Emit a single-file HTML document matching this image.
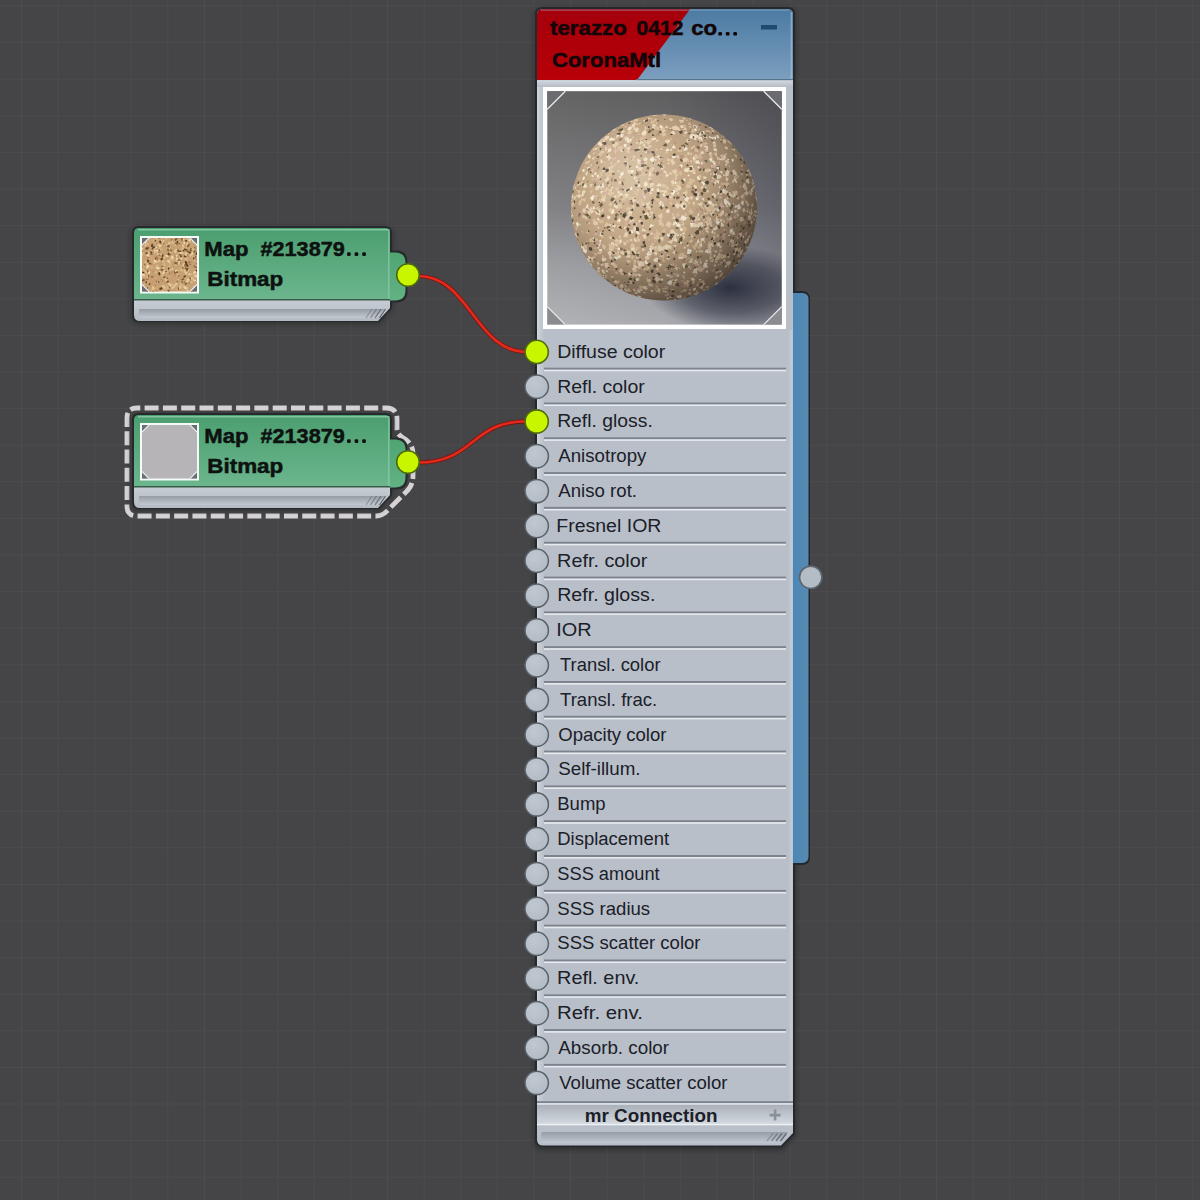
<!DOCTYPE html>
<html><head><meta charset="utf-8"><style>
html,body{margin:0;padding:0;background:#454446;width:1200px;height:1200px;overflow:hidden}
svg{display:block}
text{font-family:"Liberation Sans",sans-serif}
.lbl{font-size:19px;fill:#1b2029}
.hdr{font-size:21px;font-weight:bold;fill:#0d1210;stroke:#0d1210;stroke-width:0.5}
.ttl{font-size:21px;font-weight:bold;fill:#120608;stroke:#120608;stroke-width:0.5}
.mr{font-size:18px;font-weight:bold;fill:#1b2029}
</style></head><body>
<svg width="1200" height="1200" viewBox="0 0 1200 1200">
<defs>
<linearGradient id="blueg" x1="0" y1="0" x2="0" y2="1"><stop offset="0" stop-color="#4b7aa2"/><stop offset="1" stop-color="#7d9fbf"/></linearGradient>
<linearGradient id="redg" x1="0" y1="0" x2="0" y2="1"><stop offset="0" stop-color="#a4000c"/><stop offset="1" stop-color="#b80008"/></linearGradient>
<linearGradient id="greeng" x1="0" y1="0" x2="0" y2="1"><stop offset="0" stop-color="#4b9e70"/><stop offset="1" stop-color="#6cb68d"/></linearGradient>
<linearGradient id="bumpg" x1="0" y1="0" x2="0" y2="1"><stop offset="0" stop-color="#50a472"/><stop offset="1" stop-color="#62b284"/></linearGradient>
<linearGradient id="grayband" x1="0" y1="0" x2="0" y2="1"><stop offset="0" stop-color="#c9d0d8"/><stop offset="1" stop-color="#b4bbc3"/></linearGradient>
<linearGradient id="inset" x1="0" y1="0" x2="0" y2="1"><stop offset="0" stop-color="#959ca4"/><stop offset="1" stop-color="#c3c9d0"/></linearGradient>
<linearGradient id="bandg" x1="0" y1="0" x2="0" y2="1"><stop offset="0" stop-color="#d2d8df"/><stop offset="1" stop-color="#b6bcc4"/></linearGradient>
<linearGradient id="leftstrip" x1="0" y1="0" x2="1" y2="0"><stop offset="0" stop-color="#d2d7de"/><stop offset="0.4" stop-color="#c6ccd4"/><stop offset="1" stop-color="#bcc3cb"/></linearGradient>
<linearGradient id="mrg" x1="0" y1="0" x2="0" y2="1"><stop offset="0" stop-color="#a9b0b8"/><stop offset="1" stop-color="#d3d9e0"/></linearGradient>
<linearGradient id="bbar" x1="0" y1="0" x2="1" y2="0"><stop offset="0" stop-color="#4a88b8"/><stop offset="1" stop-color="#5a88b0"/></linearGradient>
<radialGradient id="portg" cx="0.4" cy="0.35" r="0.7"><stop offset="0" stop-color="#bfc7d0"/><stop offset="1" stop-color="#b2bac4"/></radialGradient>
<linearGradient id="prevbg" x1="0" y1="0" x2="0" y2="1"><stop offset="0" stop-color="#646464"/><stop offset="0.5" stop-color="#828286"/><stop offset="0.75" stop-color="#9e9fa3"/><stop offset="1" stop-color="#b2b3b7"/></linearGradient>
<radialGradient id="sph" cx="0.4" cy="0.42" r="0.62" fx="0.36" fy="0.38"><stop offset="0" stop-color="#d0b898"/><stop offset="0.5" stop-color="#c2a684"/><stop offset="0.85" stop-color="#a08a70"/><stop offset="1" stop-color="#807060"/></radialGradient>
<linearGradient id="prevside" x1="0" y1="0" x2="1" y2="0"><stop offset="0" stop-color="#000018" stop-opacity="0"/><stop offset="0.5" stop-color="#000018" stop-opacity="0.05"/><stop offset="1" stop-color="#000018" stop-opacity="0.24"/></linearGradient>
<radialGradient id="shadow" cx="0.5" cy="0.5" r="0.5"><stop offset="0" stop-color="#1c2030" stop-opacity="0.85"/><stop offset="0.6" stop-color="#1c2030" stop-opacity="0.45"/><stop offset="1" stop-color="#1c2030" stop-opacity="0"/></radialGradient>
<radialGradient id="sphshade" cx="0.32" cy="0.3" r="0.95" fx="0.3" fy="0.28"><stop offset="0" stop-color="#fff6e8" stop-opacity="0.22"/><stop offset="0.3" stop-color="#fff6e8" stop-opacity="0"/><stop offset="0.55" stop-color="#2a2018" stop-opacity="0.12"/><stop offset="0.8" stop-color="#2a2018" stop-opacity="0.5"/><stop offset="1" stop-color="#1e1a16" stop-opacity="0.72"/></radialGradient>
<filter id="shd" x="-10%" y="-10%" width="120%" height="120%"><feGaussianBlur stdDeviation="2"/></filter>
<filter id="soft" x="-5%" y="-5%" width="110%" height="110%"><feGaussianBlur stdDeviation="0.45"/></filter>
<clipPath id="prevclip"><rect x="547.3" y="91.2" width="234.4" height="233.4"/></clipPath>
<clipPath id="thclip"><rect x="142" y="238" width="55" height="53.5"/></clipPath>
<clipPath id="sphclip"><circle cx="664" cy="207.5" r="93"/></clipPath>
</defs>
<rect width="1200" height="1200" fill="#454446"/>
<g fill="#4d4c4e"><rect x="21.0" y="0" width="1" height="1200"/><rect x="57.6" y="0" width="1" height="1200"/><rect x="94.2" y="0" width="1" height="1200"/><rect x="130.8" y="0" width="1" height="1200"/><rect x="167.4" y="0" width="1" height="1200"/><rect x="204.0" y="0" width="1" height="1200"/><rect x="240.6" y="0" width="1" height="1200"/><rect x="277.2" y="0" width="1" height="1200"/><rect x="313.8" y="0" width="1" height="1200"/><rect x="350.4" y="0" width="1" height="1200"/><rect x="387.0" y="0" width="1" height="1200"/><rect x="423.6" y="0" width="1" height="1200"/><rect x="460.2" y="0" width="1" height="1200"/><rect x="496.8" y="0" width="1" height="1200"/><rect x="533.4" y="0" width="1" height="1200"/><rect x="570.0" y="0" width="1" height="1200"/><rect x="606.6" y="0" width="1" height="1200"/><rect x="643.2" y="0" width="1" height="1200"/><rect x="679.8" y="0" width="1" height="1200"/><rect x="716.4" y="0" width="1" height="1200"/><rect x="753.0" y="0" width="1" height="1200"/><rect x="789.6" y="0" width="1" height="1200"/><rect x="826.2" y="0" width="1" height="1200"/><rect x="862.8" y="0" width="1" height="1200"/><rect x="899.4" y="0" width="1" height="1200"/><rect x="936.0" y="0" width="1" height="1200"/><rect x="972.6" y="0" width="1" height="1200"/><rect x="1009.2" y="0" width="1" height="1200"/><rect x="1045.8" y="0" width="1" height="1200"/><rect x="1082.4" y="0" width="1" height="1200"/><rect x="1119.0" y="0" width="1" height="1200"/><rect x="1155.6" y="0" width="1" height="1200"/><rect x="1192.2" y="0" width="1" height="1200"/><rect x="0" y="5.5" width="1200" height="1"/><rect x="0" y="42.1" width="1200" height="1"/><rect x="0" y="78.7" width="1200" height="1"/><rect x="0" y="115.3" width="1200" height="1"/><rect x="0" y="151.9" width="1200" height="1"/><rect x="0" y="188.5" width="1200" height="1"/><rect x="0" y="225.1" width="1200" height="1"/><rect x="0" y="261.7" width="1200" height="1"/><rect x="0" y="298.3" width="1200" height="1"/><rect x="0" y="334.9" width="1200" height="1"/><rect x="0" y="371.5" width="1200" height="1"/><rect x="0" y="408.1" width="1200" height="1"/><rect x="0" y="444.7" width="1200" height="1"/><rect x="0" y="481.3" width="1200" height="1"/><rect x="0" y="517.9" width="1200" height="1"/><rect x="0" y="554.5" width="1200" height="1"/><rect x="0" y="591.1" width="1200" height="1"/><rect x="0" y="627.7" width="1200" height="1"/><rect x="0" y="664.3" width="1200" height="1"/><rect x="0" y="700.9" width="1200" height="1"/><rect x="0" y="737.5" width="1200" height="1"/><rect x="0" y="774.1" width="1200" height="1"/><rect x="0" y="810.7" width="1200" height="1"/><rect x="0" y="847.3" width="1200" height="1"/><rect x="0" y="883.9" width="1200" height="1"/><rect x="0" y="920.5" width="1200" height="1"/><rect x="0" y="957.1" width="1200" height="1"/><rect x="0" y="993.7" width="1200" height="1"/><rect x="0" y="1030.3" width="1200" height="1"/><rect x="0" y="1066.9" width="1200" height="1"/><rect x="0" y="1103.5" width="1200" height="1"/><rect x="0" y="1140.1" width="1200" height="1"/><rect x="0" y="1176.7" width="1200" height="1"/></g>

<path d="M418,276 C470,276 475,352 527,352" fill="none" stroke="#7a1410" stroke-width="4.2"/>
<path d="M418,276 C470,276 475,352 527,352" fill="none" stroke="#e02a1c" stroke-width="2.6"/>
<path d="M418,462.5 C475,462.5 470,421.3 527,421.3" fill="none" stroke="#7a1410" stroke-width="4.2"/>
<path d="M418,462.5 C475,462.5 470,421.3 527,421.3" fill="none" stroke="#e02a1c" stroke-width="2.6"/>

<path d="M139,227 H386 Q393,227 393,234 V308 L380,324 H139 Q131,324 131,316 V234 Q131,227 139,227 Z" fill="#1e2024" opacity="0.5" filter="url(#shd)"/>
<path d="M139,226 H385 Q392,226 392,233 V250.5 H396 Q407.5,250.5 407.5,262 V291 Q407.5,302.5 396,302.5 H392 V308 L379,322 H139 Q132,322 132,315 V233 Q132,226 139,226 Z" fill="#262a2c"/>
<path d="M388,252.5 H395 Q405.5,252.5 405.5,263 V290 Q405.5,300.5 395,300.5 H388 Z" fill="url(#bumpg)"/>
<path d="M134,296 H390 V308 L378,321 H140 Q134,321 134,315 Z" fill="url(#grayband)"/>
<path d="M139,309 H385 L376,318 H142 Q139,318 139,315 Z" fill="url(#inset)"/>
<path d="M139,228 H385 Q390,228 390,233 V300 H134 V233 Q134,228 139,228 Z" fill="url(#greeng)"/>
<rect x="134" y="299" width="256" height="1.5" fill="#3a5a48"/>
<rect x="138" y="229" width="250" height="1.5" fill="#8fd0aa" opacity="0.8"/>
<line x1="366.0" y1="318" x2="372.0" y2="309" stroke="#5e666e" stroke-width="1.3" opacity="0.45"/>
<line x1="370.5" y1="318" x2="376.5" y2="309" stroke="#5e666e" stroke-width="1.3" opacity="0.63"/>
<line x1="375.0" y1="318" x2="381.0" y2="309" stroke="#5e666e" stroke-width="1.3" opacity="0.81"/>
<line x1="379.5" y1="318" x2="385.5" y2="309" stroke="#5e666e" stroke-width="1.3" opacity="0.99"/>
<rect x="388" y="229" width="1.6" height="70" fill="#8acba6" opacity="0.7"/>
<rect x="140" y="236" width="59" height="57.5" fill="#f4fbf6"/>
<rect x="142" y="238" width="55" height="53.5" fill="#c6a072"/>
<g transform="translate(0,0)"><g clip-path="url(#thclip)"><g filter="url(#soft)"><ellipse cx="159.5" cy="245.4" rx="2.0" ry="1.2" fill="#e2c49a" transform="rotate(24 159.5 245.4)"/><ellipse cx="161.8" cy="240.2" rx="1.0" ry="0.6" fill="#e2c49a" transform="rotate(107 161.8 240.2)"/><ellipse cx="145.0" cy="242.0" rx="2.1" ry="1.3" fill="#e2c49a" transform="rotate(161 145.0 242.0)"/><ellipse cx="176.8" cy="289.6" rx="1.0" ry="0.6" fill="#d0a878" transform="rotate(56 176.8 289.6)"/><ellipse cx="143.7" cy="284.6" rx="1.6" ry="1.0" fill="#d8b486" transform="rotate(146 143.7 284.6)"/><ellipse cx="158.6" cy="282.3" rx="1.2" ry="0.7" fill="#7a5a36" transform="rotate(140 158.6 282.3)"/><ellipse cx="181.6" cy="268.3" rx="1.8" ry="1.1" fill="#d0a878" transform="rotate(109 181.6 268.3)"/><ellipse cx="185.3" cy="262.8" rx="0.9" ry="0.6" fill="#a87a58" transform="rotate(46 185.3 262.8)"/><ellipse cx="180.8" cy="250.5" rx="2.0" ry="1.3" fill="#d0a878" transform="rotate(114 180.8 250.5)"/><ellipse cx="157.4" cy="291.4" rx="1.0" ry="0.6" fill="#8a6840" transform="rotate(87 157.4 291.4)"/><ellipse cx="149.7" cy="264.1" rx="1.7" ry="1.0" fill="#6a4a2a" transform="rotate(146 149.7 264.1)"/><ellipse cx="186.0" cy="282.4" rx="1.7" ry="1.0" fill="#ecd4ac" transform="rotate(148 186.0 282.4)"/><ellipse cx="186.4" cy="240.8" rx="1.3" ry="0.8" fill="#5a3e24" transform="rotate(170 186.4 240.8)"/><ellipse cx="144.7" cy="277.6" rx="1.3" ry="0.8" fill="#d0a878" transform="rotate(98 144.7 277.6)"/><ellipse cx="191.6" cy="256.3" rx="0.8" ry="0.5" fill="#a87a58" transform="rotate(29 191.6 256.3)"/><ellipse cx="169.1" cy="249.1" rx="1.4" ry="0.9" fill="#d8b486" transform="rotate(127 169.1 249.1)"/><ellipse cx="145.6" cy="261.9" rx="2.0" ry="1.2" fill="#d8b486" transform="rotate(140 145.6 261.9)"/><ellipse cx="156.9" cy="260.0" rx="2.2" ry="1.3" fill="#d0a878" transform="rotate(38 156.9 260.0)"/><ellipse cx="145.7" cy="245.4" rx="1.5" ry="0.9" fill="#e2c49a" transform="rotate(150 145.7 245.4)"/><ellipse cx="151.4" cy="252.6" rx="1.5" ry="0.9" fill="#5a3e24" transform="rotate(81 151.4 252.6)"/><ellipse cx="195.3" cy="275.3" rx="1.5" ry="0.9" fill="#e2c49a" transform="rotate(174 195.3 275.3)"/><ellipse cx="186.5" cy="258.8" rx="1.5" ry="0.9" fill="#e2c49a" transform="rotate(102 186.5 258.8)"/><ellipse cx="144.5" cy="240.7" rx="0.9" ry="0.6" fill="#7a5a36" transform="rotate(153 144.5 240.7)"/><ellipse cx="144.0" cy="237.0" rx="1.9" ry="1.2" fill="#6a4a2a" transform="rotate(157 144.0 237.0)"/><ellipse cx="142.5" cy="285.5" rx="1.7" ry="1.1" fill="#d8b486" transform="rotate(88 142.5 285.5)"/><ellipse cx="175.3" cy="263.3" rx="1.9" ry="1.2" fill="#8a6840" transform="rotate(119 175.3 263.3)"/><ellipse cx="168.4" cy="254.3" rx="1.6" ry="1.0" fill="#5a3e24" transform="rotate(122 168.4 254.3)"/><ellipse cx="188.2" cy="246.0" rx="1.0" ry="0.6" fill="#5a3e24" transform="rotate(139 188.2 246.0)"/><ellipse cx="193.1" cy="279.1" rx="1.8" ry="1.1" fill="#e2c49a" transform="rotate(66 193.1 279.1)"/><ellipse cx="170.5" cy="287.4" rx="1.6" ry="1.0" fill="#d8b486" transform="rotate(128 170.5 287.4)"/><ellipse cx="159.8" cy="249.4" rx="2.0" ry="1.2" fill="#d8b486" transform="rotate(102 159.8 249.4)"/><ellipse cx="183.2" cy="249.6" rx="1.9" ry="1.1" fill="#ecd4ac" transform="rotate(7 183.2 249.6)"/><ellipse cx="186.0" cy="263.2" rx="1.3" ry="0.8" fill="#5a3e24" transform="rotate(89 186.0 263.2)"/><ellipse cx="195.4" cy="257.2" rx="1.3" ry="0.8" fill="#7a5a36" transform="rotate(86 195.4 257.2)"/><ellipse cx="152.6" cy="271.6" rx="1.1" ry="0.7" fill="#c08868" transform="rotate(167 152.6 271.6)"/><ellipse cx="160.6" cy="272.7" rx="2.1" ry="1.3" fill="#e2c49a" transform="rotate(51 160.6 272.7)"/><ellipse cx="168.2" cy="246.9" rx="1.0" ry="0.6" fill="#ecd4ac" transform="rotate(101 168.2 246.9)"/><ellipse cx="167.4" cy="278.3" rx="1.0" ry="0.6" fill="#7a5a36" transform="rotate(32 167.4 278.3)"/><ellipse cx="142.6" cy="269.8" rx="1.7" ry="1.0" fill="#d8b486" transform="rotate(152 142.6 269.8)"/><ellipse cx="196.9" cy="273.5" rx="0.9" ry="0.6" fill="#d8b486" transform="rotate(166 196.9 273.5)"/><ellipse cx="146.9" cy="278.6" rx="1.7" ry="1.1" fill="#7a5a36" transform="rotate(54 146.9 278.6)"/><ellipse cx="142.6" cy="248.8" rx="1.2" ry="0.8" fill="#ecd4ac" transform="rotate(107 142.6 248.8)"/><ellipse cx="188.5" cy="240.4" rx="1.8" ry="1.1" fill="#d0a878" transform="rotate(132 188.5 240.4)"/><ellipse cx="165.0" cy="287.9" rx="1.6" ry="1.0" fill="#d8b486" transform="rotate(4 165.0 287.9)"/><ellipse cx="190.7" cy="280.1" rx="1.1" ry="0.7" fill="#d8b486" transform="rotate(121 190.7 280.1)"/><ellipse cx="176.3" cy="243.7" rx="1.7" ry="1.0" fill="#8a6840" transform="rotate(27 176.3 243.7)"/><ellipse cx="191.3" cy="240.2" rx="1.7" ry="1.0" fill="#6a4a2a" transform="rotate(129 191.3 240.2)"/><ellipse cx="166.8" cy="238.5" rx="1.5" ry="0.9" fill="#e2c49a" transform="rotate(156 166.8 238.5)"/><ellipse cx="196.5" cy="270.6" rx="1.3" ry="0.8" fill="#5a3e24" transform="rotate(136 196.5 270.6)"/><ellipse cx="187.0" cy="265.2" rx="1.9" ry="1.1" fill="#5a3e24" transform="rotate(51 187.0 265.2)"/><ellipse cx="188.9" cy="244.6" rx="1.1" ry="0.7" fill="#8a6840" transform="rotate(171 188.9 244.6)"/><ellipse cx="154.7" cy="241.1" rx="2.1" ry="1.3" fill="#e2c49a" transform="rotate(39 154.7 241.1)"/><ellipse cx="194.6" cy="272.7" rx="2.1" ry="1.3" fill="#ecd4ac" transform="rotate(119 194.6 272.7)"/><ellipse cx="153.5" cy="289.9" rx="1.1" ry="0.7" fill="#d0a878" transform="rotate(170 153.5 289.9)"/><ellipse cx="188.4" cy="246.0" rx="1.4" ry="0.8" fill="#d0a878" transform="rotate(50 188.4 246.0)"/><ellipse cx="161.3" cy="242.1" rx="1.6" ry="1.0" fill="#ecd4ac" transform="rotate(112 161.3 242.1)"/><ellipse cx="181.1" cy="258.3" rx="1.6" ry="1.0" fill="#ecd4ac" transform="rotate(16 181.1 258.3)"/><ellipse cx="147.4" cy="288.0" rx="0.9" ry="0.5" fill="#6a4a2a" transform="rotate(69 147.4 288.0)"/><ellipse cx="143.3" cy="280.2" rx="1.7" ry="1.1" fill="#7a5a36" transform="rotate(173 143.3 280.2)"/><ellipse cx="187.7" cy="251.4" rx="1.6" ry="1.0" fill="#8a6840" transform="rotate(22 187.7 251.4)"/><ellipse cx="156.9" cy="281.4" rx="1.1" ry="0.7" fill="#6a4a2a" transform="rotate(4 156.9 281.4)"/><ellipse cx="177.2" cy="281.5" rx="0.9" ry="0.5" fill="#7a5a36" transform="rotate(31 177.2 281.5)"/><ellipse cx="166.9" cy="255.8" rx="1.7" ry="1.1" fill="#ecd4ac" transform="rotate(11 166.9 255.8)"/><ellipse cx="171.0" cy="250.2" rx="1.1" ry="0.7" fill="#7a5a36" transform="rotate(46 171.0 250.2)"/><ellipse cx="152.5" cy="254.3" rx="1.3" ry="0.8" fill="#d8b486" transform="rotate(128 152.5 254.3)"/><ellipse cx="179.3" cy="252.0" rx="1.0" ry="0.6" fill="#ecd4ac" transform="rotate(4 179.3 252.0)"/><ellipse cx="182.8" cy="267.6" rx="1.1" ry="0.7" fill="#8a6840" transform="rotate(114 182.8 267.6)"/><ellipse cx="147.1" cy="282.5" rx="1.6" ry="1.0" fill="#d0a878" transform="rotate(100 147.1 282.5)"/><ellipse cx="196.3" cy="254.1" rx="1.2" ry="0.7" fill="#7a5a36" transform="rotate(162 196.3 254.1)"/><ellipse cx="149.0" cy="291.9" rx="0.7" ry="0.4" fill="#c08868" transform="rotate(160 149.0 291.9)"/><ellipse cx="183.2" cy="251.2" rx="1.6" ry="1.0" fill="#6a4a2a" transform="rotate(97 183.2 251.2)"/><ellipse cx="190.6" cy="274.2" rx="1.8" ry="1.1" fill="#d8b486" transform="rotate(11 190.6 274.2)"/><ellipse cx="167.2" cy="245.7" rx="1.4" ry="0.9" fill="#ecd4ac" transform="rotate(84 167.2 245.7)"/><ellipse cx="196.4" cy="267.4" rx="1.0" ry="0.6" fill="#5a3e24" transform="rotate(46 196.4 267.4)"/><ellipse cx="141.1" cy="258.2" rx="1.2" ry="0.8" fill="#d8b486" transform="rotate(1 141.1 258.2)"/><ellipse cx="146.2" cy="282.3" rx="1.2" ry="0.8" fill="#6a4a2a" transform="rotate(76 146.2 282.3)"/><ellipse cx="158.3" cy="249.9" rx="1.8" ry="1.1" fill="#d8b486" transform="rotate(152 158.3 249.9)"/><ellipse cx="163.2" cy="255.1" rx="0.9" ry="0.6" fill="#c08868" transform="rotate(158 163.2 255.1)"/><ellipse cx="177.7" cy="239.4" rx="1.9" ry="1.1" fill="#d0a878" transform="rotate(129 177.7 239.4)"/><ellipse cx="148.9" cy="266.1" rx="2.0" ry="1.2" fill="#e2c49a" transform="rotate(149 148.9 266.1)"/><ellipse cx="186.5" cy="276.5" rx="0.7" ry="0.4" fill="#c08868" transform="rotate(10 186.5 276.5)"/><ellipse cx="148.6" cy="257.0" rx="1.4" ry="0.9" fill="#8a6840" transform="rotate(160 148.6 257.0)"/><ellipse cx="142.1" cy="266.5" rx="0.8" ry="0.5" fill="#5a3e24" transform="rotate(17 142.1 266.5)"/><ellipse cx="183.7" cy="264.9" rx="1.9" ry="1.2" fill="#e2c49a" transform="rotate(121 183.7 264.9)"/><ellipse cx="155.4" cy="241.1" rx="1.0" ry="0.6" fill="#7a5a36" transform="rotate(166 155.4 241.1)"/><ellipse cx="196.6" cy="264.4" rx="2.1" ry="1.3" fill="#d0a878" transform="rotate(73 196.6 264.4)"/><ellipse cx="184.7" cy="271.2" rx="1.7" ry="1.0" fill="#e2c49a" transform="rotate(84 184.7 271.2)"/><ellipse cx="155.5" cy="278.2" rx="0.9" ry="0.6" fill="#d8b486" transform="rotate(15 155.5 278.2)"/><ellipse cx="168.7" cy="291.0" rx="1.6" ry="1.0" fill="#7a5a36" transform="rotate(74 168.7 291.0)"/><ellipse cx="181.4" cy="252.8" rx="2.2" ry="1.4" fill="#e2c49a" transform="rotate(140 181.4 252.8)"/><ellipse cx="152.4" cy="291.3" rx="0.9" ry="0.6" fill="#c08868" transform="rotate(19 152.4 291.3)"/><ellipse cx="187.7" cy="290.7" rx="1.4" ry="0.9" fill="#ecd4ac" transform="rotate(53 187.7 290.7)"/><ellipse cx="145.3" cy="242.0" rx="2.1" ry="1.3" fill="#ecd4ac" transform="rotate(33 145.3 242.0)"/><ellipse cx="175.4" cy="272.1" rx="1.6" ry="1.0" fill="#6a4a2a" transform="rotate(59 175.4 272.1)"/><ellipse cx="169.4" cy="285.6" rx="0.9" ry="0.6" fill="#d8b486" transform="rotate(125 169.4 285.6)"/><ellipse cx="179.9" cy="259.5" rx="1.4" ry="0.8" fill="#d0a878" transform="rotate(80 179.9 259.5)"/><ellipse cx="147.9" cy="255.4" rx="2.0" ry="1.2" fill="#ecd4ac" transform="rotate(30 147.9 255.4)"/><ellipse cx="194.6" cy="247.9" rx="1.1" ry="0.7" fill="#5a3e24" transform="rotate(16 194.6 247.9)"/><ellipse cx="163.4" cy="292.4" rx="2.1" ry="1.3" fill="#ecd4ac" transform="rotate(70 163.4 292.4)"/><ellipse cx="189.7" cy="252.6" rx="1.5" ry="0.9" fill="#5a3e24" transform="rotate(38 189.7 252.6)"/><ellipse cx="155.2" cy="251.7" rx="1.9" ry="1.2" fill="#d8b486" transform="rotate(109 155.2 251.7)"/><ellipse cx="191.4" cy="282.1" rx="1.8" ry="1.1" fill="#d8b486" transform="rotate(12 191.4 282.1)"/><ellipse cx="194.2" cy="259.8" rx="1.7" ry="1.1" fill="#d8b486" transform="rotate(73 194.2 259.8)"/><ellipse cx="168.7" cy="287.6" rx="1.5" ry="0.9" fill="#d8b486" transform="rotate(87 168.7 287.6)"/><ellipse cx="157.1" cy="251.2" rx="1.4" ry="0.9" fill="#ecd4ac" transform="rotate(61 157.1 251.2)"/><ellipse cx="158.1" cy="267.9" rx="1.7" ry="1.1" fill="#d8b486" transform="rotate(19 158.1 267.9)"/><ellipse cx="152.8" cy="287.3" rx="1.5" ry="0.9" fill="#d8b486" transform="rotate(85 152.8 287.3)"/><ellipse cx="197.8" cy="262.0" rx="1.1" ry="0.7" fill="#7a5a36" transform="rotate(44 197.8 262.0)"/><ellipse cx="160.5" cy="242.1" rx="1.7" ry="1.1" fill="#5a3e24" transform="rotate(51 160.5 242.1)"/><ellipse cx="191.6" cy="278.6" rx="1.9" ry="1.2" fill="#d0a878" transform="rotate(53 191.6 278.6)"/><ellipse cx="162.5" cy="255.8" rx="1.5" ry="0.9" fill="#5a3e24" transform="rotate(92 162.5 255.8)"/><ellipse cx="148.2" cy="264.9" rx="1.0" ry="0.6" fill="#d8b486" transform="rotate(63 148.2 264.9)"/><ellipse cx="162.9" cy="272.8" rx="2.0" ry="1.2" fill="#ecd4ac" transform="rotate(5 162.9 272.8)"/><ellipse cx="148.3" cy="260.6" rx="2.2" ry="1.3" fill="#d0a878" transform="rotate(125 148.3 260.6)"/><ellipse cx="141.0" cy="258.7" rx="1.5" ry="0.9" fill="#a87a58" transform="rotate(63 141.0 258.7)"/><ellipse cx="185.6" cy="249.4" rx="1.9" ry="1.2" fill="#6a4a2a" transform="rotate(179 185.6 249.4)"/><ellipse cx="177.9" cy="279.4" rx="0.9" ry="0.6" fill="#e2c49a" transform="rotate(32 177.9 279.4)"/><ellipse cx="154.3" cy="288.1" rx="2.2" ry="1.3" fill="#ecd4ac" transform="rotate(160 154.3 288.1)"/><ellipse cx="155.4" cy="272.3" rx="1.0" ry="0.6" fill="#e2c49a" transform="rotate(76 155.4 272.3)"/><ellipse cx="170.9" cy="269.4" rx="1.9" ry="1.2" fill="#d8b486" transform="rotate(0 170.9 269.4)"/><ellipse cx="141.6" cy="253.7" rx="1.7" ry="1.1" fill="#ecd4ac" transform="rotate(62 141.6 253.7)"/><ellipse cx="168.1" cy="250.0" rx="1.6" ry="1.0" fill="#8a6840" transform="rotate(78 168.1 250.0)"/><ellipse cx="144.2" cy="247.8" rx="1.0" ry="0.6" fill="#d0a878" transform="rotate(58 144.2 247.8)"/><ellipse cx="179.0" cy="288.3" rx="1.6" ry="1.0" fill="#6a4a2a" transform="rotate(107 179.0 288.3)"/><ellipse cx="161.7" cy="259.0" rx="1.6" ry="1.0" fill="#5a3e24" transform="rotate(129 161.7 259.0)"/><ellipse cx="144.8" cy="264.5" rx="1.1" ry="0.6" fill="#7a5a36" transform="rotate(56 144.8 264.5)"/><ellipse cx="156.1" cy="286.4" rx="1.5" ry="0.9" fill="#8a6840" transform="rotate(57 156.1 286.4)"/><ellipse cx="168.6" cy="287.5" rx="1.9" ry="1.1" fill="#7a5a36" transform="rotate(13 168.6 287.5)"/><ellipse cx="153.1" cy="291.1" rx="1.6" ry="1.0" fill="#6a4a2a" transform="rotate(47 153.1 291.1)"/><ellipse cx="163.4" cy="286.8" rx="2.2" ry="1.4" fill="#e2c49a" transform="rotate(42 163.4 286.8)"/><ellipse cx="159.8" cy="247.3" rx="0.7" ry="0.4" fill="#a87a58" transform="rotate(170 159.8 247.3)"/><ellipse cx="182.3" cy="283.6" rx="0.8" ry="0.5" fill="#a87a58" transform="rotate(0 182.3 283.6)"/><ellipse cx="145.5" cy="241.5" rx="1.6" ry="1.0" fill="#e2c49a" transform="rotate(53 145.5 241.5)"/><ellipse cx="162.7" cy="279.7" rx="1.0" ry="0.6" fill="#d0a878" transform="rotate(121 162.7 279.7)"/><ellipse cx="152.2" cy="267.1" rx="1.4" ry="0.9" fill="#ecd4ac" transform="rotate(121 152.2 267.1)"/><ellipse cx="142.7" cy="259.8" rx="1.0" ry="0.6" fill="#d0a878" transform="rotate(8 142.7 259.8)"/><ellipse cx="167.5" cy="281.6" rx="1.7" ry="1.0" fill="#7a5a36" transform="rotate(155 167.5 281.6)"/><ellipse cx="160.3" cy="252.1" rx="0.9" ry="0.5" fill="#c08868" transform="rotate(176 160.3 252.1)"/><ellipse cx="159.0" cy="252.3" rx="0.8" ry="0.5" fill="#6a4a2a" transform="rotate(59 159.0 252.3)"/><ellipse cx="147.1" cy="276.7" rx="1.9" ry="1.2" fill="#d0a878" transform="rotate(110 147.1 276.7)"/><ellipse cx="187.4" cy="244.4" rx="2.0" ry="1.2" fill="#e2c49a" transform="rotate(77 187.4 244.4)"/><ellipse cx="187.9" cy="279.9" rx="2.0" ry="1.2" fill="#ecd4ac" transform="rotate(117 187.9 279.9)"/><ellipse cx="161.6" cy="280.4" rx="1.2" ry="0.8" fill="#7a5a36" transform="rotate(40 161.6 280.4)"/><ellipse cx="155.1" cy="240.6" rx="1.0" ry="0.6" fill="#5a3e24" transform="rotate(109 155.1 240.6)"/><ellipse cx="191.4" cy="291.8" rx="1.0" ry="0.6" fill="#6a4a2a" transform="rotate(107 191.4 291.8)"/><ellipse cx="169.4" cy="276.4" rx="1.1" ry="0.7" fill="#d8b486" transform="rotate(117 169.4 276.4)"/><ellipse cx="176.4" cy="274.4" rx="1.9" ry="1.2" fill="#e2c49a" transform="rotate(75 176.4 274.4)"/><ellipse cx="157.7" cy="268.5" rx="1.2" ry="0.7" fill="#ecd4ac" transform="rotate(63 157.7 268.5)"/><ellipse cx="151.6" cy="250.1" rx="1.3" ry="0.8" fill="#d8b486" transform="rotate(101 151.6 250.1)"/><ellipse cx="155.3" cy="250.7" rx="1.8" ry="1.1" fill="#e2c49a" transform="rotate(9 155.3 250.7)"/><ellipse cx="146.8" cy="263.3" rx="2.1" ry="1.3" fill="#d0a878" transform="rotate(10 146.8 263.3)"/><ellipse cx="191.0" cy="249.9" rx="1.9" ry="1.1" fill="#7a5a36" transform="rotate(95 191.0 249.9)"/><ellipse cx="170.2" cy="246.9" rx="1.0" ry="0.6" fill="#e2c49a" transform="rotate(152 170.2 246.9)"/><ellipse cx="181.5" cy="256.4" rx="0.9" ry="0.6" fill="#5a3e24" transform="rotate(52 181.5 256.4)"/><ellipse cx="198.0" cy="239.1" rx="2.0" ry="1.2" fill="#d8b486" transform="rotate(83 198.0 239.1)"/><ellipse cx="164.3" cy="257.6" rx="1.2" ry="0.7" fill="#e2c49a" transform="rotate(126 164.3 257.6)"/><ellipse cx="172.2" cy="240.5" rx="1.6" ry="1.0" fill="#8a6840" transform="rotate(39 172.2 240.5)"/><ellipse cx="177.4" cy="242.1" rx="1.3" ry="0.8" fill="#5a3e24" transform="rotate(72 177.4 242.1)"/><ellipse cx="179.1" cy="260.2" rx="1.3" ry="0.8" fill="#5a3e24" transform="rotate(4 179.1 260.2)"/><ellipse cx="190.3" cy="292.3" rx="1.4" ry="0.9" fill="#d8b486" transform="rotate(103 190.3 292.3)"/><ellipse cx="152.6" cy="237.3" rx="0.8" ry="0.5" fill="#a87a58" transform="rotate(23 152.6 237.3)"/><ellipse cx="164.2" cy="286.0" rx="1.1" ry="0.7" fill="#d8b486" transform="rotate(13 164.2 286.0)"/><ellipse cx="172.4" cy="272.6" rx="1.2" ry="0.7" fill="#c08868" transform="rotate(94 172.4 272.6)"/><ellipse cx="183.0" cy="246.5" rx="1.6" ry="1.0" fill="#d8b486" transform="rotate(17 183.0 246.5)"/><ellipse cx="147.2" cy="264.2" rx="1.3" ry="0.8" fill="#d8b486" transform="rotate(11 147.2 264.2)"/><ellipse cx="196.6" cy="263.8" rx="0.9" ry="0.5" fill="#8a6840" transform="rotate(158 196.6 263.8)"/><ellipse cx="180.2" cy="286.5" rx="1.7" ry="1.1" fill="#d8b486" transform="rotate(157 180.2 286.5)"/><ellipse cx="189.2" cy="283.0" rx="0.8" ry="0.5" fill="#7a5a36" transform="rotate(132 189.2 283.0)"/><ellipse cx="149.9" cy="256.9" rx="0.8" ry="0.5" fill="#7a5a36" transform="rotate(143 149.9 256.9)"/><ellipse cx="189.0" cy="274.3" rx="1.1" ry="0.7" fill="#ecd4ac" transform="rotate(153 189.0 274.3)"/><ellipse cx="167.0" cy="284.1" rx="1.3" ry="0.8" fill="#d0a878" transform="rotate(63 167.0 284.1)"/><ellipse cx="165.3" cy="273.6" rx="1.1" ry="0.7" fill="#d0a878" transform="rotate(0 165.3 273.6)"/><ellipse cx="176.3" cy="264.2" rx="1.8" ry="1.1" fill="#8a6840" transform="rotate(121 176.3 264.2)"/><ellipse cx="163.8" cy="240.7" rx="1.0" ry="0.6" fill="#ecd4ac" transform="rotate(113 163.8 240.7)"/><ellipse cx="169.7" cy="273.5" rx="0.9" ry="0.5" fill="#7a5a36" transform="rotate(80 169.7 273.5)"/><ellipse cx="185.3" cy="265.4" rx="1.5" ry="0.9" fill="#8a6840" transform="rotate(34 185.3 265.4)"/><ellipse cx="142.5" cy="240.7" rx="1.2" ry="0.7" fill="#e2c49a" transform="rotate(125 142.5 240.7)"/><ellipse cx="157.4" cy="282.0" rx="1.0" ry="0.6" fill="#d8b486" transform="rotate(89 157.4 282.0)"/><ellipse cx="175.8" cy="251.0" rx="2.1" ry="1.3" fill="#ecd4ac" transform="rotate(116 175.8 251.0)"/><ellipse cx="149.2" cy="264.9" rx="1.2" ry="0.7" fill="#c08868" transform="rotate(157 149.2 264.9)"/><ellipse cx="169.8" cy="254.7" rx="1.3" ry="0.8" fill="#7a5a36" transform="rotate(162 169.8 254.7)"/><ellipse cx="194.4" cy="274.7" rx="1.9" ry="1.2" fill="#d8b486" transform="rotate(67 194.4 274.7)"/><ellipse cx="147.6" cy="266.5" rx="2.2" ry="1.3" fill="#ecd4ac" transform="rotate(115 147.6 266.5)"/><ellipse cx="172.6" cy="269.2" rx="1.2" ry="0.8" fill="#e2c49a" transform="rotate(137 172.6 269.2)"/><ellipse cx="176.9" cy="258.9" rx="1.4" ry="0.9" fill="#ecd4ac" transform="rotate(94 176.9 258.9)"/><ellipse cx="173.9" cy="257.0" rx="1.2" ry="0.7" fill="#d0a878" transform="rotate(157 173.9 257.0)"/><ellipse cx="183.4" cy="239.7" rx="1.3" ry="0.8" fill="#ecd4ac" transform="rotate(149 183.4 239.7)"/><ellipse cx="193.9" cy="286.7" rx="1.2" ry="0.7" fill="#e2c49a" transform="rotate(74 193.9 286.7)"/><ellipse cx="176.1" cy="261.0" rx="1.1" ry="0.7" fill="#e2c49a" transform="rotate(58 176.1 261.0)"/><ellipse cx="175.9" cy="239.5" rx="1.1" ry="0.7" fill="#5a3e24" transform="rotate(133 175.9 239.5)"/><ellipse cx="161.4" cy="249.4" rx="1.2" ry="0.7" fill="#d8b486" transform="rotate(159 161.4 249.4)"/><ellipse cx="188.2" cy="245.8" rx="1.6" ry="1.0" fill="#7a5a36" transform="rotate(115 188.2 245.8)"/><ellipse cx="146.5" cy="272.4" rx="1.4" ry="0.9" fill="#ecd4ac" transform="rotate(67 146.5 272.4)"/><ellipse cx="196.1" cy="240.1" rx="1.7" ry="1.0" fill="#ecd4ac" transform="rotate(148 196.1 240.1)"/><ellipse cx="166.3" cy="289.0" rx="1.1" ry="0.7" fill="#d8b486" transform="rotate(0 166.3 289.0)"/><ellipse cx="143.5" cy="266.5" rx="1.1" ry="0.7" fill="#d8b486" transform="rotate(26 143.5 266.5)"/><ellipse cx="141.7" cy="267.6" rx="1.0" ry="0.6" fill="#c08868" transform="rotate(132 141.7 267.6)"/><ellipse cx="175.7" cy="265.1" rx="1.6" ry="1.0" fill="#d8b486" transform="rotate(16 175.7 265.1)"/><ellipse cx="158.1" cy="239.7" rx="1.8" ry="1.1" fill="#d0a878" transform="rotate(1 158.1 239.7)"/><ellipse cx="162.4" cy="261.2" rx="1.3" ry="0.8" fill="#c08868" transform="rotate(115 162.4 261.2)"/><ellipse cx="151.0" cy="292.3" rx="0.9" ry="0.6" fill="#6a4a2a" transform="rotate(177 151.0 292.3)"/><ellipse cx="194.7" cy="251.6" rx="1.6" ry="1.0" fill="#8a6840" transform="rotate(133 194.7 251.6)"/><ellipse cx="196.4" cy="253.4" rx="0.7" ry="0.4" fill="#c08868" transform="rotate(129 196.4 253.4)"/><ellipse cx="141.9" cy="251.5" rx="1.9" ry="1.2" fill="#7a5a36" transform="rotate(83 141.9 251.5)"/><ellipse cx="151.9" cy="258.6" rx="2.1" ry="1.3" fill="#d0a878" transform="rotate(161 151.9 258.6)"/><ellipse cx="193.5" cy="291.5" rx="1.5" ry="0.9" fill="#d0a878" transform="rotate(135 193.5 291.5)"/><ellipse cx="180.8" cy="284.6" rx="1.7" ry="1.0" fill="#d8b486" transform="rotate(78 180.8 284.6)"/><ellipse cx="186.0" cy="258.7" rx="1.1" ry="0.7" fill="#d8b486" transform="rotate(6 186.0 258.7)"/><ellipse cx="147.4" cy="271.5" rx="1.6" ry="1.0" fill="#7a5a36" transform="rotate(7 147.4 271.5)"/><ellipse cx="143.4" cy="275.4" rx="1.9" ry="1.1" fill="#e2c49a" transform="rotate(16 143.4 275.4)"/><ellipse cx="189.8" cy="279.3" rx="1.8" ry="1.1" fill="#6a4a2a" transform="rotate(98 189.8 279.3)"/><ellipse cx="147.1" cy="248.4" rx="1.9" ry="1.2" fill="#6a4a2a" transform="rotate(162 147.1 248.4)"/><ellipse cx="146.0" cy="278.7" rx="1.0" ry="0.6" fill="#d0a878" transform="rotate(25 146.0 278.7)"/><ellipse cx="186.1" cy="272.9" rx="1.5" ry="0.9" fill="#ecd4ac" transform="rotate(5 186.1 272.9)"/><ellipse cx="161.0" cy="288.6" rx="1.8" ry="1.1" fill="#5a3e24" transform="rotate(154 161.0 288.6)"/><ellipse cx="169.7" cy="284.3" rx="1.9" ry="1.2" fill="#e2c49a" transform="rotate(7 169.7 284.3)"/><ellipse cx="165.9" cy="279.9" rx="1.6" ry="1.0" fill="#e2c49a" transform="rotate(55 165.9 279.9)"/><ellipse cx="181.7" cy="282.9" rx="1.1" ry="0.7" fill="#ecd4ac" transform="rotate(0 181.7 282.9)"/><ellipse cx="170.8" cy="253.0" rx="0.9" ry="0.6" fill="#e2c49a" transform="rotate(125 170.8 253.0)"/><ellipse cx="146.5" cy="275.6" rx="1.7" ry="1.0" fill="#d0a878" transform="rotate(131 146.5 275.6)"/><ellipse cx="155.9" cy="289.4" rx="2.1" ry="1.3" fill="#d8b486" transform="rotate(59 155.9 289.4)"/><ellipse cx="169.4" cy="243.1" rx="1.5" ry="1.0" fill="#e2c49a" transform="rotate(178 169.4 243.1)"/><ellipse cx="173.0" cy="242.8" rx="1.4" ry="0.9" fill="#e2c49a" transform="rotate(101 173.0 242.8)"/><ellipse cx="191.8" cy="278.4" rx="1.4" ry="0.9" fill="#e2c49a" transform="rotate(77 191.8 278.4)"/><ellipse cx="156.0" cy="287.0" rx="2.2" ry="1.3" fill="#d0a878" transform="rotate(161 156.0 287.0)"/><ellipse cx="154.3" cy="262.6" rx="1.4" ry="0.8" fill="#e2c49a" transform="rotate(83 154.3 262.6)"/><ellipse cx="170.7" cy="285.2" rx="1.1" ry="0.7" fill="#ecd4ac" transform="rotate(112 170.7 285.2)"/><ellipse cx="180.3" cy="251.3" rx="1.3" ry="0.8" fill="#5a3e24" transform="rotate(178 180.3 251.3)"/><ellipse cx="154.6" cy="247.6" rx="1.9" ry="1.1" fill="#d8b486" transform="rotate(63 154.6 247.6)"/><ellipse cx="182.2" cy="270.5" rx="1.3" ry="0.8" fill="#d8b486" transform="rotate(48 182.2 270.5)"/><ellipse cx="155.7" cy="290.0" rx="1.5" ry="0.9" fill="#c08868" transform="rotate(26 155.7 290.0)"/><ellipse cx="152.1" cy="245.4" rx="1.6" ry="1.0" fill="#5a3e24" transform="rotate(111 152.1 245.4)"/><ellipse cx="156.6" cy="243.1" rx="0.8" ry="0.5" fill="#a87a58" transform="rotate(99 156.6 243.1)"/><ellipse cx="167.4" cy="237.7" rx="1.8" ry="1.1" fill="#d0a878" transform="rotate(128 167.4 237.7)"/><ellipse cx="196.9" cy="253.4" rx="1.5" ry="0.9" fill="#5a3e24" transform="rotate(103 196.9 253.4)"/><ellipse cx="141.3" cy="250.4" rx="2.0" ry="1.2" fill="#d0a878" transform="rotate(170 141.3 250.4)"/><ellipse cx="182.2" cy="285.8" rx="1.8" ry="1.1" fill="#d8b486" transform="rotate(164 182.2 285.8)"/><ellipse cx="148.1" cy="261.0" rx="1.8" ry="1.1" fill="#6a4a2a" transform="rotate(62 148.1 261.0)"/><ellipse cx="185.6" cy="276.6" rx="2.0" ry="1.2" fill="#ecd4ac" transform="rotate(123 185.6 276.6)"/><ellipse cx="166.9" cy="271.5" rx="2.1" ry="1.3" fill="#d8b486" transform="rotate(83 166.9 271.5)"/><ellipse cx="185.4" cy="258.6" rx="1.0" ry="0.6" fill="#e2c49a" transform="rotate(139 185.4 258.6)"/><ellipse cx="153.4" cy="276.7" rx="1.1" ry="0.7" fill="#c08868" transform="rotate(25 153.4 276.7)"/><ellipse cx="189.3" cy="262.4" rx="1.4" ry="0.8" fill="#8a6840" transform="rotate(163 189.3 262.4)"/><ellipse cx="186.2" cy="257.5" rx="1.2" ry="0.7" fill="#d0a878" transform="rotate(175 186.2 257.5)"/><ellipse cx="151.5" cy="265.5" rx="1.2" ry="0.8" fill="#a87a58" transform="rotate(64 151.5 265.5)"/><ellipse cx="156.6" cy="259.2" rx="1.9" ry="1.1" fill="#8a6840" transform="rotate(160 156.6 259.2)"/><ellipse cx="180.8" cy="256.5" rx="1.1" ry="0.7" fill="#7a5a36" transform="rotate(102 180.8 256.5)"/><ellipse cx="194.6" cy="266.3" rx="1.3" ry="0.8" fill="#8a6840" transform="rotate(42 194.6 266.3)"/><ellipse cx="148.4" cy="280.1" rx="1.5" ry="0.9" fill="#d8b486" transform="rotate(143 148.4 280.1)"/><ellipse cx="182.1" cy="282.2" rx="1.3" ry="0.8" fill="#8a6840" transform="rotate(75 182.1 282.2)"/><ellipse cx="184.3" cy="273.1" rx="1.4" ry="0.8" fill="#d0a878" transform="rotate(58 184.3 273.1)"/><ellipse cx="156.2" cy="257.9" rx="1.6" ry="1.0" fill="#8a6840" transform="rotate(123 156.2 257.9)"/><ellipse cx="141.2" cy="277.1" rx="1.8" ry="1.1" fill="#d8b486" transform="rotate(82 141.2 277.1)"/><ellipse cx="168.3" cy="260.8" rx="1.1" ry="0.7" fill="#ecd4ac" transform="rotate(77 168.3 260.8)"/><ellipse cx="189.7" cy="240.2" rx="1.9" ry="1.2" fill="#ecd4ac" transform="rotate(35 189.7 240.2)"/><ellipse cx="171.2" cy="256.2" rx="1.2" ry="0.7" fill="#e2c49a" transform="rotate(18 171.2 256.2)"/><ellipse cx="178.4" cy="250.9" rx="1.8" ry="1.1" fill="#7a5a36" transform="rotate(47 178.4 250.9)"/><ellipse cx="185.2" cy="256.2" rx="1.7" ry="1.1" fill="#8a6840" transform="rotate(42 185.2 256.2)"/><ellipse cx="175.7" cy="275.2" rx="1.3" ry="0.8" fill="#c08868" transform="rotate(140 175.7 275.2)"/><ellipse cx="185.9" cy="283.6" rx="1.4" ry="0.9" fill="#7a5a36" transform="rotate(112 185.9 283.6)"/><ellipse cx="179.3" cy="243.5" rx="1.1" ry="0.6" fill="#8a6840" transform="rotate(35 179.3 243.5)"/><ellipse cx="168.0" cy="267.9" rx="1.8" ry="1.1" fill="#d8b486" transform="rotate(63 168.0 267.9)"/><ellipse cx="169.4" cy="266.9" rx="1.1" ry="0.7" fill="#e2c49a" transform="rotate(82 169.4 266.9)"/><ellipse cx="167.7" cy="268.2" rx="1.4" ry="0.9" fill="#d0a878" transform="rotate(107 167.7 268.2)"/><ellipse cx="198.0" cy="274.5" rx="1.5" ry="0.9" fill="#5a3e24" transform="rotate(7 198.0 274.5)"/><ellipse cx="142.2" cy="239.5" rx="2.0" ry="1.2" fill="#ecd4ac" transform="rotate(24 142.2 239.5)"/><ellipse cx="170.1" cy="263.9" rx="1.2" ry="0.7" fill="#e2c49a" transform="rotate(106 170.1 263.9)"/><ellipse cx="176.6" cy="255.8" rx="1.4" ry="0.8" fill="#ecd4ac" transform="rotate(134 176.6 255.8)"/><ellipse cx="172.6" cy="287.6" rx="1.5" ry="0.9" fill="#ecd4ac" transform="rotate(141 172.6 287.6)"/><ellipse cx="144.0" cy="253.0" rx="1.4" ry="0.9" fill="#d0a878" transform="rotate(128 144.0 253.0)"/><ellipse cx="197.1" cy="285.4" rx="1.8" ry="1.1" fill="#d8b486" transform="rotate(30 197.1 285.4)"/><ellipse cx="159.9" cy="254.6" rx="1.9" ry="1.2" fill="#e2c49a" transform="rotate(10 159.9 254.6)"/><ellipse cx="163.7" cy="267.8" rx="1.4" ry="0.9" fill="#e2c49a" transform="rotate(27 163.7 267.8)"/><ellipse cx="141.4" cy="247.5" rx="1.4" ry="0.8" fill="#c08868" transform="rotate(139 141.4 247.5)"/><ellipse cx="175.9" cy="271.2" rx="1.2" ry="0.7" fill="#e2c49a" transform="rotate(170 175.9 271.2)"/><ellipse cx="177.1" cy="271.7" rx="1.8" ry="1.1" fill="#7a5a36" transform="rotate(107 177.1 271.7)"/><ellipse cx="185.1" cy="287.7" rx="2.0" ry="1.3" fill="#ecd4ac" transform="rotate(35 185.1 287.7)"/><ellipse cx="185.8" cy="268.2" rx="1.0" ry="0.6" fill="#5a3e24" transform="rotate(8 185.8 268.2)"/><ellipse cx="159.2" cy="260.9" rx="1.6" ry="1.0" fill="#e2c49a" transform="rotate(133 159.2 260.9)"/><ellipse cx="143.2" cy="243.6" rx="1.5" ry="0.9" fill="#d0a878" transform="rotate(3 143.2 243.6)"/><ellipse cx="179.8" cy="270.0" rx="1.1" ry="0.7" fill="#c08868" transform="rotate(105 179.8 270.0)"/><ellipse cx="172.3" cy="241.6" rx="1.7" ry="1.1" fill="#d8b486" transform="rotate(109 172.3 241.6)"/><ellipse cx="141.3" cy="274.9" rx="1.0" ry="0.6" fill="#6a4a2a" transform="rotate(31 141.3 274.9)"/><ellipse cx="148.4" cy="238.0" rx="1.5" ry="0.9" fill="#d8b486" transform="rotate(47 148.4 238.0)"/><ellipse cx="193.6" cy="257.3" rx="1.9" ry="1.1" fill="#d8b486" transform="rotate(21 193.6 257.3)"/><ellipse cx="157.7" cy="267.9" rx="2.1" ry="1.3" fill="#ecd4ac" transform="rotate(13 157.7 267.9)"/><ellipse cx="181.9" cy="237.6" rx="1.2" ry="0.8" fill="#6a4a2a" transform="rotate(79 181.9 237.6)"/><ellipse cx="182.6" cy="246.2" rx="1.7" ry="1.0" fill="#d0a878" transform="rotate(80 182.6 246.2)"/><ellipse cx="162.0" cy="268.9" rx="1.1" ry="0.7" fill="#d8b486" transform="rotate(29 162.0 268.9)"/><ellipse cx="161.7" cy="272.8" rx="1.5" ry="0.9" fill="#d0a878" transform="rotate(115 161.7 272.8)"/><ellipse cx="194.9" cy="280.5" rx="1.3" ry="0.8" fill="#ecd4ac" transform="rotate(159 194.9 280.5)"/><ellipse cx="196.5" cy="276.0" rx="2.0" ry="1.3" fill="#ecd4ac" transform="rotate(3 196.5 276.0)"/><ellipse cx="188.4" cy="270.4" rx="2.2" ry="1.3" fill="#d0a878" transform="rotate(63 188.4 270.4)"/><ellipse cx="162.5" cy="275.0" rx="2.0" ry="1.2" fill="#d8b486" transform="rotate(72 162.5 275.0)"/><ellipse cx="180.2" cy="254.8" rx="1.5" ry="0.9" fill="#7a5a36" transform="rotate(10 180.2 254.8)"/><ellipse cx="157.4" cy="244.8" rx="1.3" ry="0.8" fill="#d8b486" transform="rotate(140 157.4 244.8)"/><ellipse cx="180.0" cy="287.7" rx="1.6" ry="1.0" fill="#e2c49a" transform="rotate(124 180.0 287.7)"/><ellipse cx="186.5" cy="248.1" rx="1.3" ry="0.8" fill="#d8b486" transform="rotate(14 186.5 248.1)"/><ellipse cx="179.6" cy="262.8" rx="1.5" ry="0.9" fill="#5a3e24" transform="rotate(2 179.6 262.8)"/><ellipse cx="186.1" cy="262.5" rx="1.7" ry="1.0" fill="#5a3e24" transform="rotate(59 186.1 262.5)"/><ellipse cx="163.7" cy="265.9" rx="1.3" ry="0.8" fill="#5a3e24" transform="rotate(150 163.7 265.9)"/><ellipse cx="152.5" cy="248.8" rx="1.2" ry="0.7" fill="#5a3e24" transform="rotate(144 152.5 248.8)"/><ellipse cx="161.5" cy="280.3" rx="1.0" ry="0.6" fill="#d8b486" transform="rotate(126 161.5 280.3)"/><ellipse cx="162.3" cy="242.9" rx="1.1" ry="0.7" fill="#e2c49a" transform="rotate(152 162.3 242.9)"/><ellipse cx="142.7" cy="252.6" rx="1.0" ry="0.6" fill="#e2c49a" transform="rotate(144 142.7 252.6)"/><ellipse cx="168.7" cy="268.5" rx="1.3" ry="0.8" fill="#5a3e24" transform="rotate(114 168.7 268.5)"/><ellipse cx="184.7" cy="282.4" rx="1.4" ry="0.9" fill="#a87a58" transform="rotate(86 184.7 282.4)"/><ellipse cx="152.5" cy="247.0" rx="0.8" ry="0.5" fill="#6a4a2a" transform="rotate(94 152.5 247.0)"/><ellipse cx="190.6" cy="262.4" rx="1.4" ry="0.9" fill="#c08868" transform="rotate(163 190.6 262.4)"/><ellipse cx="163.7" cy="243.7" rx="0.9" ry="0.6" fill="#a87a58" transform="rotate(59 163.7 243.7)"/><ellipse cx="177.5" cy="290.1" rx="1.1" ry="0.7" fill="#d0a878" transform="rotate(40 177.5 290.1)"/><ellipse cx="162.1" cy="250.0" rx="1.0" ry="0.6" fill="#d8b486" transform="rotate(65 162.1 250.0)"/><ellipse cx="194.6" cy="240.3" rx="2.0" ry="1.2" fill="#e2c49a" transform="rotate(12 194.6 240.3)"/><ellipse cx="155.7" cy="265.5" rx="1.0" ry="0.6" fill="#d0a878" transform="rotate(37 155.7 265.5)"/><ellipse cx="159.1" cy="237.3" rx="1.5" ry="0.9" fill="#5a3e24" transform="rotate(112 159.1 237.3)"/><ellipse cx="184.2" cy="242.9" rx="1.4" ry="0.9" fill="#ecd4ac" transform="rotate(95 184.2 242.9)"/><ellipse cx="168.4" cy="246.4" rx="1.8" ry="1.1" fill="#7a5a36" transform="rotate(3 168.4 246.4)"/><ellipse cx="167.7" cy="287.6" rx="2.1" ry="1.3" fill="#d8b486" transform="rotate(56 167.7 287.6)"/><ellipse cx="145.4" cy="271.3" rx="1.9" ry="1.2" fill="#d8b486" transform="rotate(24 145.4 271.3)"/><ellipse cx="193.8" cy="258.4" rx="1.3" ry="0.8" fill="#6a4a2a" transform="rotate(86 193.8 258.4)"/><ellipse cx="159.4" cy="250.0" rx="0.9" ry="0.6" fill="#5a3e24" transform="rotate(56 159.4 250.0)"/><ellipse cx="183.0" cy="247.0" rx="1.5" ry="0.9" fill="#d8b486" transform="rotate(38 183.0 247.0)"/><ellipse cx="156.2" cy="259.9" rx="1.4" ry="0.9" fill="#5a3e24" transform="rotate(75 156.2 259.9)"/><ellipse cx="160.1" cy="246.3" rx="1.5" ry="0.9" fill="#ecd4ac" transform="rotate(123 160.1 246.3)"/><ellipse cx="147.5" cy="291.3" rx="1.4" ry="0.9" fill="#7a5a36" transform="rotate(73 147.5 291.3)"/><ellipse cx="147.8" cy="278.9" rx="1.6" ry="1.0" fill="#a87a58" transform="rotate(61 147.8 278.9)"/><ellipse cx="193.7" cy="242.4" rx="1.0" ry="0.6" fill="#d8b486" transform="rotate(75 193.7 242.4)"/><ellipse cx="149.2" cy="272.5" rx="1.6" ry="1.0" fill="#ecd4ac" transform="rotate(113 149.2 272.5)"/><ellipse cx="141.1" cy="283.2" rx="1.4" ry="0.8" fill="#d8b486" transform="rotate(10 141.1 283.2)"/><ellipse cx="193.0" cy="249.1" rx="2.0" ry="1.2" fill="#d8b486" transform="rotate(133 193.0 249.1)"/><ellipse cx="184.9" cy="276.5" rx="1.7" ry="1.1" fill="#6a4a2a" transform="rotate(155 184.9 276.5)"/><ellipse cx="182.7" cy="279.3" rx="1.5" ry="0.9" fill="#7a5a36" transform="rotate(160 182.7 279.3)"/><ellipse cx="187.3" cy="269.4" rx="1.6" ry="1.0" fill="#6a4a2a" transform="rotate(133 187.3 269.4)"/><ellipse cx="164.3" cy="277.1" rx="1.2" ry="0.7" fill="#5a3e24" transform="rotate(163 164.3 277.1)"/><ellipse cx="190.3" cy="264.4" rx="0.9" ry="0.6" fill="#8a6840" transform="rotate(170 190.3 264.4)"/><ellipse cx="156.2" cy="247.3" rx="1.0" ry="0.6" fill="#ecd4ac" transform="rotate(179 156.2 247.3)"/><ellipse cx="162.2" cy="270.0" rx="1.9" ry="1.2" fill="#8a6840" transform="rotate(18 162.2 270.0)"/><ellipse cx="147.9" cy="276.7" rx="1.9" ry="1.2" fill="#ecd4ac" transform="rotate(97 147.9 276.7)"/><ellipse cx="173.8" cy="286.8" rx="2.2" ry="1.3" fill="#e2c49a" transform="rotate(126 173.8 286.8)"/><ellipse cx="166.4" cy="238.4" rx="0.9" ry="0.6" fill="#d8b486" transform="rotate(22 166.4 238.4)"/><ellipse cx="153.8" cy="247.1" rx="1.4" ry="0.9" fill="#5a3e24" transform="rotate(7 153.8 247.1)"/><ellipse cx="142.1" cy="288.4" rx="0.9" ry="0.6" fill="#ecd4ac" transform="rotate(153 142.1 288.4)"/><ellipse cx="177.3" cy="262.7" rx="0.9" ry="0.6" fill="#8a6840" transform="rotate(24 177.3 262.7)"/><ellipse cx="181.9" cy="239.5" rx="1.5" ry="0.9" fill="#8a6840" transform="rotate(71 181.9 239.5)"/><ellipse cx="147.3" cy="243.7" rx="2.0" ry="1.2" fill="#d8b486" transform="rotate(37 147.3 243.7)"/><ellipse cx="179.1" cy="262.6" rx="2.1" ry="1.3" fill="#e2c49a" transform="rotate(99 179.1 262.6)"/><ellipse cx="180.6" cy="270.1" rx="1.4" ry="0.9" fill="#e2c49a" transform="rotate(13 180.6 270.1)"/><ellipse cx="185.3" cy="255.8" rx="1.6" ry="1.0" fill="#5a3e24" transform="rotate(144 185.3 255.8)"/><ellipse cx="186.8" cy="287.7" rx="1.3" ry="0.8" fill="#e2c49a" transform="rotate(37 186.8 287.7)"/><ellipse cx="195.6" cy="288.9" rx="1.6" ry="1.0" fill="#8a6840" transform="rotate(2 195.6 288.9)"/><ellipse cx="161.8" cy="266.5" rx="1.0" ry="0.6" fill="#8a6840" transform="rotate(171 161.8 266.5)"/><ellipse cx="142.2" cy="244.7" rx="1.2" ry="0.8" fill="#a87a58" transform="rotate(10 142.2 244.7)"/><ellipse cx="143.0" cy="272.6" rx="1.5" ry="0.9" fill="#5a3e24" transform="rotate(9 143.0 272.6)"/><ellipse cx="176.4" cy="250.9" rx="1.2" ry="0.7" fill="#d0a878" transform="rotate(10 176.4 250.9)"/><ellipse cx="157.4" cy="254.0" rx="1.0" ry="0.6" fill="#e2c49a" transform="rotate(131 157.4 254.0)"/><ellipse cx="192.4" cy="241.7" rx="1.5" ry="0.9" fill="#d8b486" transform="rotate(130 192.4 241.7)"/><ellipse cx="148.5" cy="253.3" rx="1.3" ry="0.8" fill="#ecd4ac" transform="rotate(22 148.5 253.3)"/><ellipse cx="183.2" cy="252.9" rx="1.8" ry="1.1" fill="#d8b486" transform="rotate(51 183.2 252.9)"/><ellipse cx="172.3" cy="257.4" rx="1.7" ry="1.1" fill="#ecd4ac" transform="rotate(120 172.3 257.4)"/><ellipse cx="187.7" cy="238.7" rx="1.6" ry="1.0" fill="#d8b486" transform="rotate(98 187.7 238.7)"/><ellipse cx="196.3" cy="259.0" rx="1.4" ry="0.9" fill="#c08868" transform="rotate(61 196.3 259.0)"/><ellipse cx="159.5" cy="255.1" rx="1.1" ry="0.7" fill="#7a5a36" transform="rotate(5 159.5 255.1)"/><ellipse cx="150.0" cy="240.7" rx="1.8" ry="1.1" fill="#d0a878" transform="rotate(132 150.0 240.7)"/><ellipse cx="163.1" cy="261.4" rx="1.6" ry="1.0" fill="#e2c49a" transform="rotate(173 163.1 261.4)"/><ellipse cx="183.1" cy="245.6" rx="1.1" ry="0.7" fill="#ecd4ac" transform="rotate(51 183.1 245.6)"/><ellipse cx="176.1" cy="284.2" rx="1.9" ry="1.2" fill="#e2c49a" transform="rotate(121 176.1 284.2)"/><ellipse cx="156.3" cy="272.0" rx="1.4" ry="0.9" fill="#d8b486" transform="rotate(26 156.3 272.0)"/><ellipse cx="141.2" cy="279.5" rx="1.4" ry="0.9" fill="#d0a878" transform="rotate(146 141.2 279.5)"/><ellipse cx="149.5" cy="284.2" rx="1.2" ry="0.8" fill="#6a4a2a" transform="rotate(115 149.5 284.2)"/><ellipse cx="180.5" cy="253.0" rx="1.4" ry="0.9" fill="#ecd4ac" transform="rotate(142 180.5 253.0)"/><ellipse cx="174.9" cy="273.0" rx="1.2" ry="0.8" fill="#8a6840" transform="rotate(76 174.9 273.0)"/><ellipse cx="151.5" cy="253.9" rx="1.5" ry="0.9" fill="#8a6840" transform="rotate(22 151.5 253.9)"/><ellipse cx="187.8" cy="255.3" rx="1.5" ry="0.9" fill="#c08868" transform="rotate(52 187.8 255.3)"/><ellipse cx="196.4" cy="286.5" rx="0.7" ry="0.4" fill="#c08868" transform="rotate(144 196.4 286.5)"/><ellipse cx="192.1" cy="253.6" rx="1.6" ry="1.0" fill="#ecd4ac" transform="rotate(111 192.1 253.6)"/><ellipse cx="170.5" cy="265.7" rx="1.5" ry="0.9" fill="#d0a878" transform="rotate(10 170.5 265.7)"/><ellipse cx="174.9" cy="256.5" rx="1.1" ry="0.7" fill="#c08868" transform="rotate(25 174.9 256.5)"/><ellipse cx="164.3" cy="264.8" rx="2.1" ry="1.3" fill="#d8b486" transform="rotate(107 164.3 264.8)"/><ellipse cx="168.7" cy="261.4" rx="1.8" ry="1.1" fill="#ecd4ac" transform="rotate(23 168.7 261.4)"/><ellipse cx="150.7" cy="254.7" rx="1.1" ry="0.7" fill="#a87a58" transform="rotate(28 150.7 254.7)"/><ellipse cx="178.4" cy="253.4" rx="1.7" ry="1.1" fill="#d0a878" transform="rotate(134 178.4 253.4)"/><ellipse cx="157.5" cy="265.4" rx="1.4" ry="0.9" fill="#d8b486" transform="rotate(15 157.5 265.4)"/><ellipse cx="176.9" cy="270.5" rx="1.8" ry="1.1" fill="#e2c49a" transform="rotate(2 176.9 270.5)"/><ellipse cx="185.9" cy="254.0" rx="2.1" ry="1.3" fill="#e2c49a" transform="rotate(101 185.9 254.0)"/><ellipse cx="189.0" cy="269.5" rx="1.1" ry="0.7" fill="#d8b486" transform="rotate(141 189.0 269.5)"/><ellipse cx="173.3" cy="285.3" rx="1.7" ry="1.0" fill="#d8b486" transform="rotate(105 173.3 285.3)"/><ellipse cx="175.3" cy="245.1" rx="0.9" ry="0.6" fill="#e2c49a" transform="rotate(19 175.3 245.1)"/><ellipse cx="150.7" cy="266.0" rx="2.0" ry="1.2" fill="#d0a878" transform="rotate(15 150.7 266.0)"/><ellipse cx="178.1" cy="275.0" rx="1.8" ry="1.1" fill="#d8b486" transform="rotate(90 178.1 275.0)"/><ellipse cx="156.7" cy="238.8" rx="1.4" ry="0.8" fill="#e2c49a" transform="rotate(115 156.7 238.8)"/><ellipse cx="176.6" cy="238.1" rx="1.5" ry="0.9" fill="#8a6840" transform="rotate(11 176.6 238.1)"/><ellipse cx="166.1" cy="271.4" rx="1.0" ry="0.6" fill="#6a4a2a" transform="rotate(150 166.1 271.4)"/><ellipse cx="189.7" cy="254.5" rx="1.3" ry="0.8" fill="#d0a878" transform="rotate(154 189.7 254.5)"/><ellipse cx="155.4" cy="286.2" rx="0.9" ry="0.5" fill="#c08868" transform="rotate(99 155.4 286.2)"/><ellipse cx="179.5" cy="269.5" rx="2.0" ry="1.3" fill="#d0a878" transform="rotate(124 179.5 269.5)"/><ellipse cx="142.3" cy="285.2" rx="1.2" ry="0.7" fill="#7a5a36" transform="rotate(47 142.3 285.2)"/><ellipse cx="141.4" cy="286.0" rx="1.1" ry="0.7" fill="#ecd4ac" transform="rotate(136 141.4 286.0)"/><ellipse cx="190.7" cy="255.6" rx="1.5" ry="0.9" fill="#e2c49a" transform="rotate(89 190.7 255.6)"/><ellipse cx="172.6" cy="258.5" rx="1.2" ry="0.7" fill="#ecd4ac" transform="rotate(8 172.6 258.5)"/><ellipse cx="156.9" cy="238.4" rx="1.8" ry="1.1" fill="#d8b486" transform="rotate(23 156.9 238.4)"/><ellipse cx="152.2" cy="267.2" rx="1.5" ry="0.9" fill="#d0a878" transform="rotate(61 152.2 267.2)"/><ellipse cx="150.1" cy="256.6" rx="1.7" ry="1.1" fill="#d0a878" transform="rotate(148 150.1 256.6)"/><ellipse cx="152.9" cy="289.8" rx="2.0" ry="1.2" fill="#d8b486" transform="rotate(172 152.9 289.8)"/><ellipse cx="148.5" cy="276.2" rx="1.5" ry="0.9" fill="#8a6840" transform="rotate(94 148.5 276.2)"/><ellipse cx="171.5" cy="259.4" rx="2.0" ry="1.3" fill="#d8b486" transform="rotate(31 171.5 259.4)"/><ellipse cx="179.6" cy="242.1" rx="0.9" ry="0.6" fill="#d0a878" transform="rotate(145 179.6 242.1)"/><ellipse cx="149.3" cy="237.8" rx="1.9" ry="1.2" fill="#d8b486" transform="rotate(59 149.3 237.8)"/><ellipse cx="159.3" cy="273.8" rx="1.7" ry="1.1" fill="#5a3e24" transform="rotate(76 159.3 273.8)"/><ellipse cx="152.0" cy="276.9" rx="0.9" ry="0.6" fill="#5a3e24" transform="rotate(102 152.0 276.9)"/><ellipse cx="157.1" cy="259.4" rx="1.5" ry="0.9" fill="#c08868" transform="rotate(45 157.1 259.4)"/><ellipse cx="142.7" cy="274.7" rx="2.1" ry="1.3" fill="#ecd4ac" transform="rotate(6 142.7 274.7)"/><ellipse cx="178.6" cy="275.8" rx="1.2" ry="0.7" fill="#8a6840" transform="rotate(160 178.6 275.8)"/><ellipse cx="146.6" cy="253.2" rx="1.6" ry="1.0" fill="#7a5a36" transform="rotate(10 146.6 253.2)"/><ellipse cx="164.1" cy="270.8" rx="1.1" ry="0.7" fill="#ecd4ac" transform="rotate(10 164.1 270.8)"/><ellipse cx="172.5" cy="271.9" rx="1.2" ry="0.7" fill="#c08868" transform="rotate(133 172.5 271.9)"/><ellipse cx="155.5" cy="261.1" rx="2.1" ry="1.3" fill="#ecd4ac" transform="rotate(28 155.5 261.1)"/><ellipse cx="188.6" cy="280.1" rx="2.0" ry="1.3" fill="#e2c49a" transform="rotate(149 188.6 280.1)"/><ellipse cx="175.6" cy="239.6" rx="0.8" ry="0.5" fill="#6a4a2a" transform="rotate(81 175.6 239.6)"/><ellipse cx="153.0" cy="287.8" rx="1.5" ry="0.9" fill="#e2c49a" transform="rotate(100 153.0 287.8)"/><ellipse cx="197.9" cy="271.2" rx="1.2" ry="0.7" fill="#6a4a2a" transform="rotate(108 197.9 271.2)"/></g></g></g>
<path d="M142,238 h7 l-7,7 z" fill="#6a6e74"/>
<line x1="149" y1="238" x2="142" y2="245" stroke="#e8ecea" stroke-width="1.1"/>
<path d="M197,238 h-7 l7,7 z" fill="#6a6e74"/>
<line x1="190" y1="238" x2="197" y2="245" stroke="#e8ecea" stroke-width="1.1"/>
<path d="M142,291.5 h7 l-7,-7 z" fill="#6a6e74"/>
<line x1="149" y1="291.5" x2="142" y2="284.5" stroke="#e8ecea" stroke-width="1.1"/>
<path d="M197,291.5 h-7 l7,-7 z" fill="#6a6e74"/>
<line x1="190" y1="291.5" x2="197" y2="284.5" stroke="#e8ecea" stroke-width="1.1"/>
<g transform="translate(0,0)"><text transform="translate(204.35,255.90) scale(1.0525,1)" class="hdr" xml:space="preserve">Map</text><text transform="translate(260.50,255.90) scale(1.0309,1)" class="hdr" xml:space="preserve">#213879</text><g fill="#0d1210"><rect x="347" y="252.3" width="3.7" height="3.6" rx="1.2"/><rect x="354.6" y="252.3" width="3.7" height="3.6" rx="1.2"/><rect x="362.2" y="252.3" width="3.7" height="3.6" rx="1.2"/></g><text transform="translate(207.23,285.75) scale(1.0696,1)" class="hdr" xml:space="preserve">Bitmap</text></g>
<circle cx="408" cy="275" r="11.3" fill="#c8f500" stroke="#4e6a10" stroke-width="1.6"/>
<path d="M137,408 H386 Q397,408 397,419 V429 Q397,434 402,437 Q413,443 413,453 V476 Q413,486 406,492 L389,509 Q383,516 376,516 H137 Q127,516 127,506 V418 Q127,408 137,408 Z" fill="none" stroke="#d4d2d4" stroke-width="4.8" stroke-dasharray="14 4.3" stroke-dashoffset="-7.6"/>
<path d="M139,414 H386 Q393,414 393,421 V495 L380,511 H139 Q131,511 131,503 V421 Q131,414 139,414 Z" fill="#1e2024" opacity="0.5" filter="url(#shd)"/>
<path d="M139,413 H385 Q392,413 392,420 V437.5 H396 Q407.5,437.5 407.5,449 V478 Q407.5,489.5 396,489.5 H392 V495 L379,509 H139 Q132,509 132,502 V420 Q132,413 139,413 Z" fill="#262a2c"/>
<path d="M388,439.5 H395 Q405.5,439.5 405.5,450 V477 Q405.5,487.5 395,487.5 H388 Z" fill="url(#bumpg)"/>
<path d="M134,483 H390 V495 L378,508 H140 Q134,508 134,502 Z" fill="url(#grayband)"/>
<path d="M139,496 H385 L376,505 H142 Q139,505 139,502 Z" fill="url(#inset)"/>
<path d="M139,415 H385 Q390,415 390,420 V487 H134 V420 Q134,415 139,415 Z" fill="url(#greeng)"/>
<rect x="134" y="486" width="256" height="1.5" fill="#3a5a48"/>
<rect x="138" y="416" width="250" height="1.5" fill="#8fd0aa" opacity="0.8"/>
<line x1="366.0" y1="505" x2="372.0" y2="496" stroke="#5e666e" stroke-width="1.3" opacity="0.45"/>
<line x1="370.5" y1="505" x2="376.5" y2="496" stroke="#5e666e" stroke-width="1.3" opacity="0.63"/>
<line x1="375.0" y1="505" x2="381.0" y2="496" stroke="#5e666e" stroke-width="1.3" opacity="0.81"/>
<line x1="379.5" y1="505" x2="385.5" y2="496" stroke="#5e666e" stroke-width="1.3" opacity="0.99"/>
<rect x="388" y="416" width="1.6" height="70" fill="#8acba6" opacity="0.7"/>
<rect x="140" y="423" width="59" height="57.5" fill="#f4fbf6"/>
<rect x="142" y="425" width="55" height="53.5" fill="#b6b4b7"/>
<path d="M142,425 h7 l-7,7 z" fill="#6a6e74"/>
<line x1="149" y1="425" x2="142" y2="432" stroke="#e8ecea" stroke-width="1.1"/>
<path d="M197,425 h-7 l7,7 z" fill="#6a6e74"/>
<line x1="190" y1="425" x2="197" y2="432" stroke="#e8ecea" stroke-width="1.1"/>
<path d="M142,478.5 h7 l-7,-7 z" fill="#6a6e74"/>
<line x1="149" y1="478.5" x2="142" y2="471.5" stroke="#e8ecea" stroke-width="1.1"/>
<path d="M197,478.5 h-7 l7,-7 z" fill="#6a6e74"/>
<line x1="190" y1="478.5" x2="197" y2="471.5" stroke="#e8ecea" stroke-width="1.1"/>
<g transform="translate(0,187)"><text transform="translate(204.35,255.90) scale(1.0525,1)" class="hdr" xml:space="preserve">Map</text><text transform="translate(260.50,255.90) scale(1.0309,1)" class="hdr" xml:space="preserve">#213879</text><g fill="#0d1210"><rect x="347" y="252.3" width="3.7" height="3.6" rx="1.2"/><rect x="354.6" y="252.3" width="3.7" height="3.6" rx="1.2"/><rect x="362.2" y="252.3" width="3.7" height="3.6" rx="1.2"/></g><text transform="translate(207.23,285.75) scale(1.0696,1)" class="hdr" xml:space="preserve">Bitmap</text></g>
<circle cx="408" cy="462" r="11.3" fill="#c8f500" stroke="#4e6a10" stroke-width="1.6"/>


<path d="M543,8 H788 Q796,8 796,15 V1135 L783,1150 H543 Q534,1150 534,1141 V15 Q534,8 543,8 Z" fill="#1e2024" opacity="0.55" filter="url(#shd)"/>
<path d="M543,7 H788 Q795,7 795,14 V1134 L782,1147 H543 Q535,1147 535,1139 V14 Q535,7 543,7 Z" fill="#25292d"/>
<path d="M543,9 H787 Q793,9 793,15 V1133 L781,1145.5 H543 Q537,1145.5 537,1139.5 V15 Q537,9 543,9 Z" fill="#b8bfc8"/>
<path d="M543,9 H787 Q793,9 793,15 V80 H537 V15 Q537,9 543,9 Z" fill="url(#blueg)"/>
<path d="M543,9 H690.2 L637,80 H537 V15 Q537,9 543,9 Z" fill="url(#redg)"/>
<path d="M636.2,79 H793 V80.4 H635.2 Z" fill="#56748c"/>
<rect x="541" y="9.5" width="248" height="1.2" fill="#9ab8d0" opacity="0.5"/>
<text transform="translate(550.00,35.45) scale(1.0625,1)" class="ttl" xml:space="preserve">terazzo</text><text transform="translate(636.50,35.45) scale(1.0044,1)" class="ttl" xml:space="preserve">0412</text><text transform="translate(691.24,35.45) scale(1.0565,1)" class="ttl" xml:space="preserve">co</text><g fill="#120608"><rect x="718.3" y="32" width="3.7" height="3.6" rx="1.2"/><rect x="725.8" y="32" width="3.7" height="3.6" rx="1.2"/><rect x="733.3" y="32" width="3.7" height="3.6" rx="1.2"/></g><rect x="790.6" y="12" width="1.6" height="67" fill="#a8c4dc" opacity="0.6"/>
<text transform="translate(551.95,67.00) scale(1.0515,1)" class="ttl" xml:space="preserve">CoronaMtl</text>
<rect x="761" y="25" width="16" height="4.5" fill="#1f4a70"/>
<rect x="537" y="80.3" width="256" height="7" fill="url(#bandg)"/><rect x="537" y="87" width="6.5" height="1014" fill="url(#leftstrip)"/>
<rect x="543" y="87" width="243" height="242" fill="#ffffff"/>
<rect x="547.3" y="91.2" width="234.4" height="233.4" fill="url(#prevbg)"/>
<rect x="547.3" y="91.2" width="234.4" height="233.4" fill="url(#prevside)"/>
<ellipse cx="730" cy="288" rx="85" ry="42" fill="url(#shadow)" clip-path="url(#prevclip)"/>
<circle cx="664" cy="207.5" r="93" fill="url(#sph)"/>
<g clip-path="url(#sphclip)"><g filter="url(#soft)"><path fill="#f0e2c8" d="M690.6 117.8L691.4 119.2L689.2 118.9zM620.8 288.1L619.5 285.7L623.7 287.0zM612.4 142.9L617.1 144.2L612.9 147.0zM596.9 219.4L597.5 218.1L599.2 218.2L599.7 220.6L598.5 220.8zM660.3 200.7L662.5 201.7L661.1 204.2L659.1 202.8zM754.2 180.0L754.8 184.7L753.3 183.4L751.6 178.4L752.5 177.5zM674.8 225.5L672.3 225.3L673.8 221.8L675.4 223.2zM636.2 294.0L634.2 292.9L635.8 291.8L637.7 293.8zM748.5 205.2L747.5 206.8L747.0 204.6L747.5 203.1zM685.7 191.7L684.4 194.4L683.0 192.0zM667.2 173.4L668.8 175.5L666.6 177.2L665.2 175.8zM744.2 237.7L743.0 238.4L742.5 236.3L744.0 235.2zM702.2 246.9L699.4 247.0L699.2 244.1L702.0 243.0zM656.9 188.7L659.0 188.2L659.2 191.8L657.9 192.5L656.2 190.3zM644.6 129.8L646.6 132.0L645.9 135.1L642.0 135.1L641.3 133.5zM602.3 170.0L604.9 170.1L602.9 172.4zM717.4 204.5L715.3 206.3L715.6 203.5zM718.1 284.8L714.6 285.4L716.5 282.8L719.0 282.7zM693.8 133.7L695.5 136.4L690.4 136.9L689.6 134.5zM739.1 215.7L737.2 216.3L736.6 214.8L737.7 213.6zM611.7 210.2L613.6 208.7L614.6 210.0L613.4 211.8zM682.0 235.9L680.0 235.3L679.8 233.9L682.1 234.4zM698.7 270.3L697.1 268.4L700.2 266.6zM669.7 212.3L666.6 213.3L666.0 209.9L670.1 209.3zM607.2 217.8L607.4 215.4L610.3 215.9L610.3 218.5L608.4 219.4zM673.8 144.5L676.2 148.4L673.4 149.3L671.8 147.4zM693.3 281.0L691.3 280.3L690.7 278.2L693.4 277.6L695.3 280.0zM588.1 156.1L590.8 155.3L590.4 158.5L588.0 159.2zM677.2 174.0L677.1 175.2L676.7 176.6L675.4 176.0L674.9 174.2zM602.4 261.4L601.5 257.4L605.6 260.8zM613.2 196.6L615.7 194.9L617.0 196.7L614.4 199.2zM728.4 257.4L726.7 257.1L727.8 254.7zM662.2 281.1L660.1 279.7L661.9 278.3L663.5 279.6zM631.0 250.5L630.7 247.7L633.2 247.0L636.2 248.6L636.6 250.7zM680.9 298.4L676.6 297.5L676.9 296.1L681.0 294.7L682.0 296.7zM626.1 136.4L629.1 138.1L628.5 140.3L624.8 140.8zM601.8 200.5L603.3 199.0L604.5 199.7L603.9 201.5L602.5 201.4zM689.5 198.1L687.4 202.1L684.0 200.1L686.4 195.9zM711.6 157.7L711.7 159.0L709.7 158.9L709.8 157.0zM696.9 134.0L700.0 136.9L695.0 138.7L693.3 135.2zM594.1 173.3L596.5 171.7L596.5 174.5L594.5 175.4zM722.9 171.6L721.6 174.3L719.7 171.0zM692.9 197.2L692.0 199.6L689.2 198.3L691.2 195.8zM755.1 214.8L753.2 216.2L753.7 214.0zM657.5 270.0L655.7 269.2L657.1 268.2L658.3 268.6L658.7 269.3zM634.2 122.1L636.1 123.2L636.1 124.3L633.3 126.7L632.2 125.0zM682.4 125.0L685.1 127.2L681.5 128.3L679.9 125.9zM706.7 176.9L706.4 178.5L703.6 178.7L703.3 176.3zM686.3 148.2L687.3 150.3L683.9 149.4zM696.9 125.2L697.1 127.3L697.3 128.7L693.4 127.5L692.5 125.2zM660.2 124.6L663.1 126.6L662.8 127.4L660.0 128.5L659.4 126.5zM592.1 157.9L595.2 156.7L593.1 160.0zM694.7 202.3L694.4 204.2L692.6 203.2L693.6 201.7zM676.1 275.0L673.4 274.1L675.6 273.0L677.6 273.6zM583.2 251.1L582.3 247.2L583.6 247.0L585.8 250.3L584.5 252.1zM638.6 291.2L637.4 289.3L639.8 290.1zM686.5 168.7L687.8 171.4L684.3 172.1L684.3 168.2zM690.2 291.1L688.7 289.8L690.8 289.1zM593.3 152.5L595.5 152.3L593.2 154.9zM636.4 164.8L638.2 165.9L639.2 167.3L637.7 168.8L635.5 167.8zM668.3 259.9L666.4 258.6L668.5 256.3L670.3 258.3zM720.5 246.0L716.7 246.4L716.8 242.7L719.7 242.5zM711.0 253.3L706.8 253.6L707.0 250.3L712.7 250.1zM582.8 185.7L585.5 183.1L587.3 187.1L584.0 188.0zM686.5 267.7L683.2 268.2L682.9 263.5L686.4 263.2L687.5 265.8zM727.4 186.4L724.9 190.1L722.9 185.2zM607.0 146.5L608.3 146.9L608.0 148.9L607.0 148.6zM649.9 171.1L652.3 175.5L648.3 176.8zM661.7 147.3L661.9 149.6L660.1 150.2zM663.0 189.9L663.9 190.2L663.6 192.0L661.9 191.7L661.5 190.7zM629.4 126.2L632.5 127.5L629.9 130.9L627.1 129.7zM628.6 276.4L628.3 271.9L632.1 273.9zM620.5 149.8L624.1 150.1L620.9 152.4zM708.4 213.2L706.3 214.8L706.7 212.2zM691.9 168.2L693.2 171.5L686.8 172.3L686.4 168.1zM588.1 155.4L589.4 155.0L589.3 156.6L587.9 157.2zM598.0 142.4L601.5 141.1L600.9 144.4L598.0 145.1zM674.2 269.5L671.7 265.4L676.8 264.8zM711.2 152.1L712.1 155.3L709.0 154.7L708.9 152.7zM630.8 172.1L632.9 172.4L632.6 173.7L630.3 173.6zM677.6 277.1L674.5 275.5L677.5 273.6L679.6 275.5zM618.3 258.6L616.7 255.9L618.9 254.4L621.3 255.9L620.3 258.2zM597.8 213.9L598.8 213.0L600.6 214.5L599.4 215.5zM695.7 137.4L696.6 139.9L694.6 140.1L693.4 137.7zM628.5 213.1L628.8 210.7L631.9 212.1L632.0 213.4L630.6 215.0zM624.4 190.0L627.3 188.8L628.2 191.5L625.9 192.5zM694.6 145.3L695.0 147.1L692.9 146.4zM716.7 262.8L714.5 263.0L716.8 260.3zM732.3 218.5L729.3 221.1L730.2 216.3zM749.0 179.8L748.8 184.0L745.6 181.8L747.0 178.6zM603.6 191.4L605.1 190.2L606.1 191.8L604.5 192.9zM666.0 299.8L664.8 299.3L664.6 298.0L668.7 297.6L669.2 298.5zM746.8 186.4L745.1 189.4L742.5 186.7L743.6 184.7zM734.8 148.5L735.0 150.8L731.7 149.2L732.3 147.2zM638.9 146.5L641.5 147.3L638.1 149.0zM643.9 144.0L645.3 144.6L644.9 146.2L642.2 145.6zM689.4 140.0L690.2 140.7L690.1 141.9L688.2 141.9L688.5 139.9zM715.5 256.5L713.6 257.0L713.3 255.8L714.6 254.3L715.4 255.2zM580.9 198.1L582.7 197.0L583.8 199.0L582.1 201.1zM652.2 137.5L655.4 139.9L650.9 140.5zM644.8 157.0L647.9 158.6L646.3 161.0L642.9 161.4zM599.2 153.9L600.2 153.3L601.3 153.7L599.9 155.2L598.6 155.3zM747.5 242.2L745.0 244.7L744.1 241.8L746.2 239.8zM686.3 146.6L688.0 149.2L683.8 151.2L683.1 148.0zM718.1 228.1L715.3 230.5L712.7 229.6L714.1 225.4L718.0 226.5zM609.8 247.5L609.1 243.7L611.6 244.9L611.8 248.7zM616.7 287.6L615.7 286.3L617.4 286.3L618.2 288.0zM674.3 215.5L672.1 215.1L673.1 213.3zM592.5 207.9L593.5 205.9L594.6 206.8L595.4 209.3L593.2 209.4zM714.0 226.5L710.6 227.3L711.1 224.2zM687.3 192.1L686.8 195.7L683.4 195.0L685.1 191.4zM575.5 228.6L576.2 226.4L577.4 227.5L576.7 229.9zM757.3 200.0L756.5 200.7L756.1 199.8L756.5 198.3zM719.4 180.7L718.8 183.7L716.7 182.2L717.4 179.6zM609.0 170.6L613.8 170.4L610.7 173.3zM670.6 266.1L669.2 265.3L669.4 264.5L671.2 263.7L671.9 265.8zM696.6 252.6L695.5 252.0L696.1 250.7L697.3 250.8zM607.4 266.9L607.4 265.6L609.1 265.9L609.5 267.5zM596.5 243.9L597.3 242.0L600.9 243.3L599.6 246.5zM718.4 135.5L719.5 137.9L717.5 138.6L715.6 133.9zM677.1 242.0L673.1 240.3L675.1 236.7L677.3 239.4zM724.9 225.9L720.9 226.7L721.0 221.3zM744.2 201.8L743.1 205.6L740.6 203.7L741.9 200.3zM685.5 248.6L683.7 248.6L684.1 246.3L685.8 247.4zM576.7 236.4L576.7 234.6L577.7 236.1L577.3 236.9zM725.9 256.3L724.2 257.1L724.3 255.1L725.6 254.2zM700.4 133.7L701.3 135.7L699.4 135.8L698.4 134.5zM724.3 212.2L722.3 213.9L721.3 211.6L723.2 210.1zM704.6 240.7L700.9 241.0L700.6 238.8L704.3 237.6zM757.4 198.0L757.1 199.5L756.3 198.7L756.3 197.5L757.2 196.9zM608.7 148.3L610.9 148.0L611.6 150.9L607.3 152.7zM753.3 183.8L752.3 185.3L751.8 182.5zM622.5 130.1L625.3 131.6L621.3 133.2zM716.4 182.1L715.4 185.0L714.0 182.1zM699.6 196.7L698.3 198.8L696.9 195.2zM658.8 292.3L657.6 289.6L660.7 289.5zM649.0 118.2L649.8 118.6L648.8 119.7L647.7 118.9zM742.4 254.4L739.9 254.3L740.3 251.9L742.8 249.9zM639.6 291.1L636.7 288.9L641.2 287.3L642.7 290.4zM700.4 280.9L698.8 280.0L699.2 278.9L701.4 279.0zM639.3 277.2L637.5 272.9L641.7 275.0zM752.4 189.8L752.6 192.1L750.7 191.5L751.0 189.8L751.6 188.0zM610.9 137.6L613.4 138.3L611.8 140.4L608.7 140.4zM678.8 235.9L676.8 236.0L678.0 233.4L679.0 234.6zM589.4 185.1L592.4 183.8L591.5 187.7zM633.0 123.5L635.5 124.6L633.6 127.2L630.9 126.2zM639.4 162.6L641.4 162.9L638.8 164.3zM733.0 241.5L730.8 242.7L730.2 241.9L730.8 239.6L732.4 239.3zM715.1 194.2L714.1 197.0L712.8 196.5L711.4 194.7L714.0 192.8zM659.5 182.8L662.1 186.2L656.0 186.2zM695.8 271.4L692.8 271.9L694.7 267.8L698.7 268.6zM654.0 120.8L655.1 122.5L652.1 122.5zM636.2 233.7L635.8 231.6L637.3 230.7L639.9 233.2L639.0 234.7zM724.2 213.0L722.7 215.1L719.7 214.1L722.2 210.4zM599.5 144.1L603.5 142.8L602.1 145.5L599.5 146.5zM694.7 264.2L692.7 263.0L695.0 261.9zM652.8 166.9L654.3 167.9L653.6 169.8L651.8 169.3zM716.4 148.2L717.1 151.5L714.2 150.8L713.0 148.7zM649.2 217.7L649.4 215.7L651.0 216.2L650.5 217.6zM642.3 232.9L642.3 228.3L646.5 230.8zM617.5 243.4L618.3 240.9L621.3 238.9L622.0 241.2L620.9 243.5zM635.9 281.0L635.0 279.5L636.7 277.7L639.3 278.6L638.9 280.7zM623.9 193.7L629.2 194.1L626.8 198.3zM613.2 206.0L615.6 204.2L618.9 206.3L617.0 209.1zM707.5 145.8L708.3 149.4L705.3 151.0L704.1 145.8zM696.1 149.8L696.5 151.7L694.7 150.5zM698.7 231.0L696.8 231.4L697.4 229.3zM685.4 284.5L683.7 283.2L684.3 282.2L686.8 283.2zM618.9 176.3L621.0 176.1L621.6 178.0L619.7 178.4zM678.0 270.2L676.2 269.8L677.9 268.0L679.0 269.2zM621.2 286.6L620.2 284.6L622.5 284.2L623.4 286.6zM713.7 232.6L712.3 234.0L711.3 232.5L712.2 230.1L713.3 230.7zM630.0 138.4L632.3 139.0L630.9 141.8L628.8 140.8zM723.3 220.5L720.0 221.7L720.6 218.4zM684.9 273.4L683.1 273.3L683.7 271.4L685.4 272.0zM627.3 139.4L631.3 138.8L630.1 142.5L626.4 142.7zM671.2 148.6L672.2 149.5L671.3 150.6L670.3 149.8zM650.7 248.2L649.7 245.9L651.8 245.2L652.4 247.0zM614.5 127.2L617.3 127.0L612.0 130.7zM691.4 167.1L692.5 169.2L691.3 171.0L689.5 169.7L689.7 167.5zM730.9 193.0L729.1 195.2L728.3 193.4L729.1 191.9zM659.5 201.9L664.3 203.5L658.7 205.8zM706.9 187.8L706.2 189.4L704.7 189.1L705.3 186.4zM600.6 159.4L602.2 159.8L602.5 162.9L600.5 162.7zM715.1 238.2L713.5 238.8L713.7 236.8L715.1 236.3zM618.4 195.3L622.1 192.7L623.1 194.8L621.1 197.9zM589.0 259.6L587.7 255.6L589.7 256.8L592.3 258.6L591.4 262.1zM612.4 138.4L615.9 138.4L612.2 141.7zM644.3 181.7L646.4 181.4L648.4 184.4L645.7 187.1L643.8 186.0zM612.1 200.7L615.2 198.5L614.7 202.5zM597.5 211.1L598.7 209.5L600.9 211.5L600.2 213.5zM655.3 262.2L652.9 260.3L655.2 257.9L657.6 257.5L659.6 261.2zM621.1 133.8L623.9 134.0L623.0 136.9L620.0 137.1z"/><path fill="#7a6a50" d="M665.1 117.8L666.4 118.2L665.6 119.7L664.3 120.1L663.9 118.8zM606.4 183.4L608.6 181.1L609.0 184.9L607.2 186.2zM617.3 129.0L618.3 129.1L618.2 129.6L616.6 129.7zM688.0 257.2L686.3 257.1L687.2 255.3L688.4 255.3zM698.9 146.0L700.2 148.5L697.1 149.4L696.5 146.2zM594.0 183.8L595.6 182.1L596.3 185.7L593.9 186.6zM674.9 181.1L676.0 183.5L673.0 182.6zM668.3 281.4L666.8 280.1L668.7 279.4L669.9 280.1zM600.9 263.6L600.8 261.0L602.9 262.8zM749.7 236.8L747.2 237.3L748.7 233.6zM713.3 139.2L713.7 141.2L711.4 141.2L710.8 139.4zM716.8 133.3L717.4 134.4L715.5 134.4L715.0 132.7zM702.4 230.0L699.5 230.8L697.9 229.0L699.3 226.5L703.0 226.6zM729.7 274.8L726.7 274.8L730.2 272.0zM607.7 281.9L606.6 280.0L607.1 279.3L609.6 280.9L608.8 281.5zM738.2 225.5L737.4 227.2L735.9 226.3L736.0 222.8L738.6 223.1zM690.1 296.8L688.3 296.5L689.4 295.6L690.2 296.0zM734.2 146.9L734.3 149.5L732.3 148.4L731.6 145.9zM659.6 282.5L658.5 280.8L660.3 281.5zM743.9 180.1L743.4 182.3L741.3 180.7L742.1 179.6zM588.5 218.1L589.7 216.1L591.2 216.9L590.2 218.9zM604.5 267.8L603.0 264.6L605.3 264.1L606.8 265.6L606.9 267.9zM653.5 171.9L655.0 172.7L654.7 173.7L653.2 172.7zM661.4 161.7L662.8 163.4L660.3 165.2L659.8 163.3zM658.2 261.9L657.7 260.1L658.9 259.3L661.2 261.4zM684.5 181.9L684.5 183.5L682.4 184.0L682.1 182.2zM734.7 220.6L733.4 221.2L733.9 219.2zM595.4 211.9L596.7 208.9L599.1 212.6L596.7 213.5zM611.6 198.8L613.3 197.0L615.2 199.1L612.7 201.3zM695.5 168.9L694.5 171.8L693.0 169.3zM614.7 215.7L616.1 213.0L619.0 214.7L616.5 216.2zM616.8 282.1L616.2 280.8L618.3 281.0L619.3 282.8zM665.8 300.1L663.5 299.2L665.5 297.6L667.4 298.9zM583.1 215.2L584.5 213.6L585.9 214.6L585.0 216.7zM686.9 262.0L683.5 261.5L686.0 259.6L688.5 260.1zM577.1 239.8L577.1 238.8L578.2 239.6L578.4 241.1zM619.2 138.7L622.7 138.3L620.6 140.8L618.5 140.2zM598.1 166.8L599.3 166.3L599.3 168.5L598.2 169.1zM729.3 185.2L727.8 186.9L727.1 184.5zM613.2 280.8L611.9 280.0L613.3 278.8L615.0 280.5L614.1 281.1zM683.4 261.7L682.2 260.1L683.5 259.9zM701.5 257.8L699.8 256.6L702.4 254.8zM610.9 191.9L612.4 190.5L613.5 191.8L612.8 193.1L611.4 193.1zM682.4 244.8L679.1 242.9L680.9 240.4L683.2 241.5zM638.7 121.8L640.6 122.3L638.8 124.3L637.8 123.4zM611.7 141.6L614.6 141.3L613.3 143.0L611.5 143.6zM683.5 294.1L681.9 293.0L683.8 291.8L685.4 292.6zM674.1 283.3L672.7 283.0L673.8 281.6L675.3 282.8zM723.6 261.5L721.2 261.5L722.7 259.5zM691.0 129.7L692.0 130.6L689.9 131.3L689.3 130.1zM591.8 202.3L592.1 200.8L594.5 201.6L594.4 203.9L592.7 203.7zM701.0 180.3L700.6 181.7L699.7 182.9L698.4 180.9L699.6 179.8zM620.1 250.3L619.9 247.3L622.6 248.0L622.7 249.5zM749.7 216.7L748.6 218.6L747.0 217.9L747.5 216.1L748.7 215.0zM678.9 229.5L674.9 228.2L677.5 225.5zM627.3 225.3L629.2 223.7L630.4 225.9zM736.4 217.1L735.6 218.1L733.8 216.6L734.3 215.2L735.4 214.2zM647.9 211.3L650.9 207.6L651.4 210.9zM747.2 224.6L744.9 225.7L746.1 223.5zM612.5 142.9L615.3 141.9L615.1 144.0L612.3 144.2zM646.8 152.8L647.9 153.4L647.3 153.9L646.1 153.8zM641.7 248.5L640.7 245.7L643.3 245.8L643.7 248.1zM694.3 186.5L694.1 188.8L692.0 188.9L691.0 187.1L691.4 185.2zM719.8 166.3L720.3 169.7L717.0 170.0L716.8 166.4zM713.7 228.0L710.5 229.2L709.6 227.2L712.2 226.4zM670.9 126.8L672.9 128.9L670.6 130.5L667.8 128.3zM695.3 225.6L693.4 226.0L692.7 223.6L694.5 223.2zM644.1 190.2L646.9 190.1L646.5 193.3L644.4 193.7zM740.7 243.4L737.9 243.5L739.7 241.4zM647.3 273.3L646.1 271.8L646.7 271.0L647.9 271.1L649.1 272.8zM700.9 248.3L698.9 248.5L698.1 247.0L699.6 245.9L701.1 247.2zM608.7 185.9L610.4 184.5L611.9 185.5L610.8 187.5L609.5 187.6zM618.9 200.6L620.2 199.9L620.8 200.9L619.1 202.3zM636.1 171.0L638.9 171.2L639.0 174.2L636.9 175.9L635.3 174.6zM679.2 287.3L677.1 285.2L680.4 284.8zM679.8 228.0L677.4 226.8L680.3 225.7zM694.9 191.7L694.9 193.5L692.5 193.8L690.6 191.6L693.8 189.4z"/><path fill="#f4ead8" d="M684.1 265.8L681.8 265.8L682.4 264.5L683.4 263.5L685.3 265.2zM583.2 251.5L583.6 248.8L587.2 250.1L586.1 253.7zM682.2 231.5L680.0 230.7L680.0 228.0L683.0 228.4zM712.0 126.2L713.2 129.2L709.2 127.6zM651.2 253.2L648.9 248.3L654.8 248.1zM648.7 256.3L646.5 254.6L648.3 251.3L650.6 251.8L651.8 254.8zM617.0 133.9L619.7 135.2L616.2 138.2zM685.4 178.3L685.1 180.9L683.1 181.3L683.2 179.0zM683.0 197.7L682.5 199.4L680.3 199.3L680.7 197.0zM729.2 159.2L728.9 160.4L727.5 160.0L727.2 158.4zM676.9 224.8L674.9 223.8L674.5 220.8L677.0 221.1zM628.7 170.7L631.8 171.0L628.5 173.5zM638.4 184.4L639.9 184.3L640.4 185.7L639.1 186.8L637.8 186.9zM638.7 267.5L638.1 261.9L642.9 264.8zM587.4 166.9L589.5 167.0L590.5 168.4L587.5 170.5zM647.5 140.1L651.0 141.8L648.8 144.2L646.8 142.2zM665.2 191.5L667.6 196.3L661.0 196.3zM675.6 300.3L674.1 300.1L674.1 299.3L675.9 298.7L677.1 299.6zM694.2 226.3L691.0 227.5L690.0 223.0L695.0 223.0zM584.8 217.1L586.5 215.8L587.2 219.2zM719.8 209.1L718.8 211.5L716.6 210.4L716.6 207.4L719.4 206.5zM737.5 206.6L736.1 207.8L734.5 207.7L734.9 205.9L736.0 204.8zM696.1 128.5L696.9 131.0L694.6 131.6L693.0 129.1zM717.4 172.4L716.7 175.9L713.6 175.0L713.0 172.2zM581.3 248.4L582.2 244.8L584.1 247.4zM634.1 243.8L634.2 237.9L637.3 240.9zM679.3 259.2L678.2 258.4L678.8 256.6L681.6 256.9zM667.7 148.3L669.8 150.3L666.7 151.7L665.4 150.6zM599.0 251.0L599.2 249.0L602.2 249.3L601.6 251.7zM590.0 198.0L592.8 195.0L594.0 198.5L592.1 201.1zM700.7 175.0L699.9 180.5L697.3 179.1L696.9 176.6zM582.3 169.7L584.4 168.8L584.7 171.5L582.7 172.1zM699.3 215.0L698.1 216.5L697.3 214.5L698.6 213.1zM623.8 144.2L626.9 144.1L625.8 147.9L623.6 146.3zM723.9 134.6L724.5 136.7L723.0 136.3L722.4 134.5zM727.7 262.6L725.5 263.2L727.4 261.0zM674.5 154.7L676.3 157.0L673.2 158.4L671.6 156.8zM712.8 246.0L708.8 244.8L712.4 242.4zM728.6 202.0L725.8 205.4L724.0 202.6L724.0 199.8L725.2 198.3zM664.1 251.7L663.4 249.4L665.0 250.0zM592.3 238.8L593.4 236.9L594.1 239.3zM698.9 243.1L695.0 243.3L699.0 238.7zM649.7 256.9L647.9 254.9L649.2 253.8L651.1 255.0L650.5 256.2zM660.0 203.7L662.1 201.8L664.1 205.5L661.6 208.6L659.3 207.0zM708.0 273.2L705.5 271.8L707.7 270.0zM616.8 222.0L619.3 217.7L621.0 220.1L619.6 223.0zM707.0 261.9L705.7 261.8L705.4 260.6L706.4 259.4L707.8 260.4zM712.3 202.3L710.9 205.2L708.5 203.6L707.9 201.2L710.3 200.8zM630.6 232.2L630.3 230.6L632.3 230.1L634.4 231.9L632.3 233.4zM640.7 164.7L642.0 164.0L642.9 165.8L640.5 166.8L640.0 166.0zM721.2 175.5L719.0 179.1L716.9 174.9zM610.3 138.0L612.0 138.1L611.2 140.0L608.8 140.7zM712.8 157.9L711.3 162.5L708.8 159.0zM605.1 268.5L604.6 263.5L608.1 267.0zM670.6 297.7L669.5 297.3L669.9 296.6L671.5 296.4L672.7 297.3zM613.3 128.7L615.6 127.6L614.9 130.1L610.9 130.7zM731.6 233.1L730.0 234.1L730.0 232.2L731.0 231.5zM708.1 267.8L702.4 267.6L706.4 263.5zM720.1 222.2L717.6 225.0L715.3 222.0L718.4 219.9zM666.7 249.8L664.9 248.3L665.1 246.7L667.5 247.0L667.2 248.5zM654.3 137.4L656.3 138.3L654.8 140.2L653.4 138.8zM704.4 290.6L703.1 290.3L703.9 289.1L705.0 289.2zM674.7 190.0L675.2 192.3L673.2 195.6L670.3 193.8L672.3 190.1zM600.9 151.7L603.8 150.7L603.5 153.1L599.4 154.1zM729.9 255.4L728.4 257.1L727.5 255.2L728.7 253.1L729.9 253.9zM681.5 164.3L683.2 165.6L681.0 168.3L679.7 167.5L679.6 165.3zM698.9 165.7L699.9 169.1L697.6 169.5L696.8 166.7zM748.4 175.0L747.2 177.3L745.8 173.3zM617.2 249.4L617.8 247.3L620.2 247.8L619.9 250.8zM733.6 159.0L733.8 161.3L731.9 161.9L731.3 160.3L732.2 158.4zM689.9 254.2L686.8 253.8L687.8 248.4L692.1 250.3zM577.9 184.9L580.0 182.6L579.6 185.7zM598.6 242.0L599.5 240.1L601.3 239.8L601.0 242.5zM707.8 252.4L704.4 252.4L705.7 250.0L709.1 248.7zM741.1 208.1L739.7 209.6L737.5 209.5L737.0 205.8L739.1 203.5zM637.2 158.4L641.0 160.4L637.6 163.7zM689.1 174.4L689.5 176.2L687.7 176.4L687.7 174.9zM647.1 255.5L646.1 254.8L647.6 253.2L648.7 253.2L648.7 254.9zM732.9 232.2L729.6 233.1L729.8 229.8L732.8 228.3zM756.5 216.1L755.5 216.9L754.9 215.9L755.8 214.1zM586.0 205.9L588.1 203.7L588.2 207.4zM649.3 227.5L650.6 224.1L654.4 225.4zM592.9 195.5L594.4 195.3L593.7 197.5zM721.7 175.9L720.8 178.2L719.0 175.6zM682.9 230.7L679.6 230.0L682.1 227.5zM727.2 192.1L726.8 194.7L723.2 191.8L725.3 189.6zM637.9 258.8L635.6 255.1L639.8 257.7zM638.6 298.2L637.4 296.9L637.7 295.3L641.3 296.6L641.3 297.6zM671.1 285.4L666.8 283.4L668.9 280.4L672.0 280.2L672.3 282.5zM659.6 267.0L658.2 263.1L662.5 264.5zM597.9 269.1L597.4 266.9L599.6 267.5L600.3 269.6zM633.8 176.7L635.8 176.7L636.2 178.6L633.9 179.4zM712.6 136.8L713.8 140.1L710.4 137.7zM703.4 162.6L703.1 164.1L701.8 164.5L700.9 163.2L701.1 161.8zM737.1 181.0L736.4 183.4L734.6 180.6zM667.7 139.5L670.4 141.0L667.4 142.7L665.8 140.5zM716.4 163.8L714.8 166.7L712.6 162.5zM692.9 165.6L692.5 168.4L689.7 166.2zM610.3 246.3L611.4 242.0L613.9 243.1L614.3 245.6zM607.1 217.8L608.2 216.2L609.2 216.2L609.7 217.9L608.0 218.8zM650.0 171.2L651.5 172.4L649.7 173.1zM575.8 224.0L576.7 222.3L578.1 221.9L578.9 225.2L577.7 227.1zM716.2 136.2L716.0 140.0L712.8 137.2zM704.1 131.0L704.9 133.5L701.3 134.5L700.6 132.2zM666.9 186.5L667.8 189.3L666.0 188.2zM692.2 135.6L692.8 138.3L690.4 138.8L689.3 136.5zM713.2 262.1L709.8 261.8L711.0 259.8L713.1 258.7zM629.3 188.3L631.3 186.8L632.6 188.0L632.1 190.0L629.7 190.1zM584.6 208.9L587.1 205.8L588.7 208.1L587.3 211.3zM593.9 196.4L597.2 194.5L596.7 197.1zM695.6 221.7L693.5 223.0L691.9 218.9L694.8 219.0zM721.1 272.2L719.4 272.6L720.0 270.8L721.4 270.3zM671.0 237.1L667.4 236.5L667.1 233.9L671.3 233.3L673.2 235.7zM651.5 187.5L653.7 188.4L653.4 190.7L650.4 191.0zM726.5 191.6L725.8 194.2L721.6 192.1L723.2 188.5zM652.3 156.8L655.4 159.8L651.9 161.9L649.2 159.7zM698.5 160.2L700.3 163.7L695.2 163.6L695.1 160.7zM630.7 169.9L633.6 170.0L634.2 171.3L633.1 172.9L630.8 171.7zM710.6 136.3L711.0 138.1L709.3 137.8L708.8 136.3zM582.6 177.5L583.7 176.5L585.2 177.0L584.2 179.4L582.3 180.5zM699.1 198.7L697.3 200.5L695.7 199.7L696.2 197.0zM597.5 186.9L599.3 185.2L600.2 186.8L598.4 189.4zM736.6 172.7L736.6 176.2L734.6 174.4L734.5 170.8zM705.9 268.1L702.8 267.3L704.2 262.6L707.7 262.8zM701.2 131.5L702.5 134.5L698.4 133.8zM645.8 264.3L644.2 262.6L646.0 259.6L648.3 264.0zM715.0 141.6L716.0 145.5L712.5 142.1zM620.3 172.9L623.5 171.5L623.7 174.2L622.4 176.1L620.3 175.6zM679.8 227.3L676.7 226.7L675.7 224.7L678.3 222.9L681.0 224.8zM668.9 278.5L665.5 274.3L670.2 275.3zM596.3 175.4L599.3 174.6L598.4 178.8zM660.4 156.8L662.0 159.8L658.6 159.4zM710.3 169.4L711.1 171.5L708.3 170.8L708.6 168.8zM625.2 137.3L627.5 136.8L627.0 138.7L625.3 139.4L624.6 137.8zM643.3 214.2L646.1 211.4L649.0 214.0L648.4 216.1zM600.6 192.6L601.3 190.6L603.0 191.2L601.8 193.6L601.1 194.5zM686.7 219.2L683.2 220.9L680.4 218.6L681.7 214.9L686.3 217.0zM695.6 156.4L696.1 159.3L693.3 160.1L692.5 156.9zM571.9 187.0L574.0 185.6L572.8 190.0zM591.0 259.4L591.1 257.8L593.1 259.8zM661.7 167.8L664.0 169.6L661.1 169.6zM580.9 247.1L581.5 244.3L583.9 245.2L583.1 248.2zM614.4 145.8L617.2 146.9L614.7 147.8zM687.3 205.6L685.7 206.6L685.4 204.9zM719.3 167.0L718.3 171.7L716.1 167.2zM697.6 274.2L693.8 272.1L696.7 270.5zM675.9 181.3L677.3 184.9L672.5 182.6zM608.6 148.8L610.0 148.4L609.9 150.0L608.3 150.6zM673.1 291.7L669.9 291.0L671.9 289.0L674.1 290.1zM686.0 207.7L684.0 210.2L679.9 205.7L682.6 203.5zM641.2 203.9L643.0 203.0L644.3 204.8L642.8 205.8zM614.8 260.5L614.2 256.2L617.9 257.2L617.4 259.2zM714.2 164.7L712.5 169.4L711.0 165.4zM731.0 204.4L729.6 206.3L727.7 203.8L728.2 201.1zM721.5 158.8L720.8 161.3L718.7 158.8zM661.3 163.5L662.3 166.4L660.3 167.7L657.8 166.1zM644.6 238.5L644.1 237.0L645.1 236.3L646.2 237.7L645.8 239.0zM647.4 150.0L648.8 151.2L647.0 153.7L644.9 152.5zM682.6 258.8L680.1 259.1L681.7 254.6L685.8 255.8zM588.0 154.3L589.4 154.9L588.5 156.3zM736.3 177.7L735.3 181.2L733.3 180.7L734.8 177.4zM599.6 184.7L603.5 183.1L603.9 187.1L601.3 188.1zM730.5 236.1L728.0 236.1L729.0 234.3zM733.6 212.2L731.8 212.9L730.8 212.0L732.0 210.7zM591.3 175.2L592.6 174.8L593.6 176.0L593.5 177.1L591.7 176.7zM704.3 198.5L703.1 200.7L701.9 199.1L702.9 197.8zM706.3 181.3L704.0 186.0L701.0 182.1zM726.2 267.2L724.7 267.4L725.4 265.2L726.9 265.2zM690.2 268.3L687.4 266.9L689.8 265.6zM711.2 219.6L709.3 221.0L708.5 218.1L710.3 217.4zM607.3 136.5L609.3 136.9L606.4 139.0zM617.4 160.5L620.2 160.4L617.6 163.3zM658.6 154.8L659.5 156.2L658.2 158.1L656.4 157.2zM701.8 136.9L702.9 141.1L699.6 140.4L698.3 136.6zM684.4 235.1L681.6 233.5L684.7 232.1zM609.8 210.9L611.2 208.3L614.8 212.4L611.9 214.3zM660.7 126.4L662.2 128.4L658.6 129.0zM694.7 290.4L693.0 290.0L692.8 288.7L695.6 287.6L696.1 289.1z"/><path fill="#c8a090" d="M640.0 197.9L642.2 197.8L643.0 199.5L641.3 200.3zM662.6 257.0L660.9 255.7L661.3 254.0L664.7 254.2L665.3 255.4zM634.5 190.5L638.2 190.5L637.2 192.9zM731.1 142.6L730.9 144.8L728.5 142.3zM637.8 290.1L636.3 287.9L640.2 286.8L641.4 289.8zM596.5 244.3L597.4 241.2L599.7 241.1L599.4 244.9zM713.6 225.7L712.2 226.8L711.6 224.6L713.2 224.6zM684.9 253.7L683.4 253.3L683.2 251.2L686.1 251.8zM674.1 130.4L674.6 132.4L672.2 131.7zM633.8 133.6L636.6 135.3L634.0 137.0L632.4 135.9zM665.2 117.0L667.2 118.1L665.0 119.1L663.2 117.5zM643.4 135.9L645.9 137.2L644.9 139.3L642.5 138.6zM698.1 266.3L694.9 266.1L696.2 263.3L698.8 264.3zM625.0 123.4L627.9 123.5L625.2 125.3zM717.1 163.5L717.8 165.4L716.8 165.7L715.2 164.4L716.1 163.0zM722.4 136.6L723.0 137.2L722.2 137.7L721.1 137.1L721.4 136.2zM669.9 258.7L668.7 257.2L669.8 256.5L670.9 257.6zM636.0 272.0L636.1 270.3L637.7 269.7L638.2 271.6zM682.9 287.4L681.8 285.8L684.6 285.7zM686.9 262.2L683.9 261.0L686.6 258.2L688.7 258.5zM639.9 224.2L639.4 222.7L641.7 221.8L642.4 224.3L641.3 225.6zM721.6 218.0L720.7 218.8L719.8 217.2L721.1 216.7zM660.7 159.2L663.3 160.8L661.6 162.3L659.8 161.2zM706.4 147.5L706.8 149.5L703.1 149.6L703.9 147.1zM573.5 199.2L576.6 197.1L575.4 200.5zM661.6 194.1L663.0 195.1L662.3 196.6L661.0 197.1L660.5 195.7zM675.1 148.0L676.2 149.9L675.0 151.2L672.5 148.9zM663.1 142.5L666.1 144.1L663.6 145.1L661.6 144.5zM661.5 176.0L662.7 177.6L660.7 179.2L659.6 177.5zM722.2 191.6L720.3 194.7L719.5 189.9zM712.8 261.0L710.3 262.3L711.0 258.3L712.6 259.2zM585.7 242.9L586.4 241.3L587.4 243.6zM649.1 242.5L648.5 240.5L650.8 240.3L651.1 242.9zM743.3 170.3L742.6 171.9L741.6 170.6L741.7 168.5zM666.6 296.6L664.6 296.0L665.1 294.3L669.2 294.1L669.2 295.4zM592.7 151.4L593.8 150.6L594.4 151.8L593.4 152.6L592.4 152.4zM747.9 234.3L745.4 236.4L744.5 233.5L747.1 231.3zM741.9 187.1L741.0 188.6L739.7 187.9L739.3 185.9L740.2 185.2zM698.3 125.0L700.1 126.9L697.4 127.3L695.1 124.6zM704.8 149.7L705.1 151.7L703.8 151.4L703.3 149.8zM683.2 293.0L681.9 291.9L684.3 291.5zM684.7 297.2L683.9 297.0L684.3 296.0L685.5 295.7L685.9 296.3zM683.1 170.8L684.4 171.8L683.4 173.3L681.3 172.8L681.6 170.1zM611.1 253.4L611.4 250.2L612.1 249.6L614.6 251.5L613.7 253.4zM633.9 201.8L637.6 200.4L639.0 202.2L636.5 205.4zM671.8 268.5L670.7 267.2L671.1 266.3L672.5 266.1L672.8 267.2zM580.9 178.6L582.4 178.2L582.5 179.3L581.1 180.3zM750.8 220.6L748.8 222.5L748.4 219.1L749.9 218.3zM687.3 287.8L685.2 286.4L688.6 285.8zM725.4 220.9L723.8 222.3L722.1 220.0L723.8 218.2zM585.7 163.7L587.7 163.6L586.5 165.9zM681.2 168.6L681.5 170.2L681.0 171.2L679.7 170.7L679.2 169.4zM714.4 164.5L714.6 166.2L713.2 166.9L713.1 164.3zM724.4 278.1L722.6 279.0L722.5 278.3L723.7 276.9L724.7 277.5zM648.9 257.1L648.5 255.9L650.4 254.7L651.0 256.3zM633.1 172.7L635.6 172.6L636.7 173.4L634.1 175.5L633.2 174.3zM661.8 156.8L663.3 159.1L661.4 158.7zM633.6 244.3L632.6 241.3L635.2 240.8L636.2 244.1zM723.0 263.7L720.1 265.3L720.2 261.3L723.0 261.4zM678.0 114.7L679.2 115.2L678.0 115.7L676.7 114.9zM647.1 139.6L649.0 140.0L648.3 142.3L645.3 141.7zM592.5 252.7L592.9 251.7L594.1 251.8L594.2 253.5zM676.5 275.9L673.8 276.0L674.9 273.2L677.1 272.8L678.2 275.3zM614.2 268.2L613.7 265.4L616.4 264.2L616.8 268.0zM695.2 195.5L693.6 197.7L691.5 196.5L692.7 193.7zM730.9 171.8L730.7 174.3L728.3 172.7L729.0 171.2zM732.7 182.8L732.5 183.9L731.3 183.1L732.0 181.7zM661.8 170.5L663.6 171.8L660.9 174.5L659.2 172.5zM653.2 251.6L652.8 249.8L653.8 249.1L654.5 250.3zM655.4 289.4L655.1 288.1L657.1 288.1zM698.2 189.3L698.0 192.3L695.4 190.5L695.4 189.0zM601.6 198.4L603.5 197.5L604.1 198.6L602.9 200.2zM610.6 265.0L611.1 262.5L613.3 264.9zM628.3 131.3L630.6 132.1L626.8 133.6zM612.4 155.1L614.5 154.2L615.0 156.2L614.1 157.0L611.6 156.1zM656.7 124.4L659.0 125.1L658.0 127.2L654.7 125.7zM699.6 132.2L699.8 134.2L697.4 132.9zM654.3 200.7L656.8 199.9L657.5 201.9L654.4 201.9zM604.2 267.9L603.4 266.3L606.2 267.0L606.5 268.6zM650.9 184.3L653.5 187.0L649.9 189.5zM632.6 296.5L631.2 295.1L632.1 293.5L634.5 294.7L635.3 296.9zM755.8 218.9L753.7 221.5L753.3 219.0L754.3 218.2zM612.0 255.7L611.7 253.8L612.8 252.3L615.3 254.3L614.3 256.2zM691.6 269.3L689.3 269.2L689.4 266.8L692.3 267.8zM679.3 147.0L680.5 149.5L679.3 149.8L678.0 148.8zM727.6 255.2L726.6 255.2L726.3 253.6L727.9 253.2zM681.7 216.7L678.5 217.8L678.3 215.1L680.7 213.4zM710.9 132.5L711.7 133.4L711.1 133.9L710.0 133.3L709.8 131.9zM656.2 284.0L655.7 282.4L657.6 282.9zM618.9 210.0L621.8 208.4L623.4 210.7L620.9 212.6zM658.1 253.6L656.4 252.2L658.2 251.0L659.1 253.0zM616.1 282.2L615.8 280.8L617.3 280.8L617.8 282.4zM593.7 152.9L596.2 152.0L596.8 153.6L594.0 154.9zM624.5 147.4L627.6 147.0L627.1 149.4L624.6 149.9zM689.2 176.4L689.2 178.5L687.3 178.7L687.1 176.9zM632.7 123.0L634.6 123.6L632.5 124.6zM614.0 235.2L615.8 232.6L616.5 235.4zM580.2 214.1L582.5 211.9L582.1 215.0zM730.3 169.7L730.0 171.4L729.1 169.4zM729.6 267.1L728.0 267.9L727.9 266.3L729.4 265.8zM682.9 197.5L682.8 199.5L680.5 198.9L681.3 197.1zM731.1 223.6L729.4 225.8L728.0 222.7L729.6 222.1zM722.8 201.9L722.0 204.5L720.8 203.4L720.9 201.7L721.7 200.6zM672.7 211.0L670.6 212.4L669.3 211.0L670.8 208.7L672.6 208.9zM683.1 282.3L681.6 282.4L680.4 280.8L683.6 279.4L685.4 281.8zM757.3 194.0L757.0 196.4L755.0 193.4L755.9 191.5zM752.2 219.4L750.0 220.0L750.5 216.4zM731.1 225.4L729.0 226.7L727.7 224.9L729.6 223.3zM640.4 235.9L639.3 235.2L641.8 234.0L642.2 235.0L642.5 236.6zM698.4 167.5L698.8 169.6L696.1 170.3L695.9 167.5zM745.0 183.7L745.1 185.4L743.5 184.0L744.3 182.8zM725.5 239.4L723.6 239.9L722.0 238.6L723.2 235.8L725.4 236.2zM682.9 257.2L680.9 256.9L683.0 256.0zM624.9 287.6L623.9 285.5L624.4 284.7L627.2 284.9L626.7 287.5zM618.2 246.8L617.9 244.5L620.6 244.9L619.8 247.2zM722.7 251.5L720.2 251.9L720.9 250.2L722.3 249.3zM633.6 224.3L633.5 221.4L635.8 222.3L637.1 223.2L635.0 225.4zM634.2 152.8L636.7 153.4L633.7 155.0zM575.6 215.4L576.6 213.9L577.5 214.4L576.4 216.1zM623.2 203.7L625.5 202.7L624.5 204.3zM705.5 162.6L705.6 165.7L703.1 166.1L702.4 162.3zM716.6 166.9L716.5 169.0L714.3 168.6L715.1 167.1zM656.2 136.1L658.7 137.4L656.6 138.6L655.6 137.8zM581.2 232.6L581.2 229.6L583.8 231.5L583.6 234.3zM602.2 176.8L605.1 176.8L602.7 179.2z"/><path fill="#e4ccb0" d="M735.5 171.6L735.9 175.3L733.2 174.7L732.3 172.0L734.6 170.9zM630.3 209.9L632.3 208.8L633.8 210.0L633.0 211.8zM614.8 142.2L618.4 141.9L618.6 144.5L617.4 145.4L613.8 145.5zM625.2 136.3L627.3 137.0L627.0 139.1L623.3 139.0zM723.6 214.6L720.7 216.7L718.8 214.4L722.2 211.6zM631.4 206.6L633.7 205.1L635.3 205.7L633.9 208.2zM612.4 246.6L613.0 244.9L614.9 245.9L614.7 247.4zM711.2 247.1L707.7 248.3L708.0 243.0L711.6 243.4zM640.5 171.3L643.9 173.4L641.0 175.1zM652.2 292.8L650.0 289.9L654.0 290.0zM663.6 129.2L666.7 130.4L662.6 133.3L661.5 131.1zM614.2 149.9L618.0 150.6L615.0 153.7zM648.1 140.5L650.5 142.3L648.4 145.0L646.3 142.8zM624.0 220.5L626.2 216.7L628.6 217.8L627.2 221.1zM706.5 206.2L705.0 208.0L704.0 206.3L705.2 205.0zM623.5 244.6L623.3 241.3L626.4 242.8L625.9 245.8zM644.2 133.4L645.9 135.0L644.6 136.6L642.2 136.0zM641.9 226.5L642.0 224.8L643.9 224.8L643.9 226.3zM600.4 199.2L603.6 197.2L602.7 202.0zM621.4 289.9L620.5 287.8L624.4 289.5zM731.6 263.7L728.4 265.3L727.3 262.9L729.0 260.5L730.7 261.2zM674.2 286.3L672.7 285.2L673.6 283.7L675.2 285.1zM686.4 157.7L688.5 159.7L686.1 162.6L683.2 161.1L684.1 157.0zM717.8 180.5L717.6 182.4L714.7 181.4L715.0 179.4zM736.2 205.8L735.0 206.8L735.2 205.0zM618.9 237.2L619.4 235.3L621.1 235.5L620.3 237.3zM637.5 149.7L639.9 151.3L636.1 152.4zM692.6 241.9L689.2 241.9L691.9 238.5zM592.3 241.9L592.2 240.0L593.9 241.3L593.7 242.6zM659.1 222.7L658.5 220.9L660.6 219.0L662.4 220.5zM605.0 146.0L606.3 145.8L606.3 147.1L604.9 147.3zM678.3 155.3L680.1 156.8L678.6 158.6L676.1 157.4L676.9 155.6zM746.8 241.6L744.5 241.7L746.2 239.2zM635.1 276.5L632.8 274.2L633.9 272.9L637.6 274.6L637.7 276.1zM654.6 126.7L656.3 129.0L654.1 130.3L652.4 128.5zM592.6 258.8L592.4 256.0L594.6 258.2zM674.0 160.9L675.5 163.0L672.3 165.6L670.8 161.7zM714.9 143.5L716.4 146.2L714.1 147.9L713.3 146.2L713.5 143.1zM692.2 147.2L693.3 149.7L691.2 149.1L690.9 147.8zM687.0 207.3L685.7 208.5L683.4 207.5L685.9 204.4zM597.4 272.0L596.4 269.0L599.9 270.6L599.7 272.3zM645.6 207.4L647.0 203.8L651.3 207.8L647.9 208.8zM703.7 186.8L702.9 188.8L701.0 190.1L700.5 187.1L702.2 185.6zM743.8 157.2L744.5 159.7L742.3 158.3L741.6 155.3zM587.2 213.7L587.9 210.9L590.8 212.9L588.5 216.0zM692.2 133.2L692.2 134.9L689.9 134.3zM666.7 125.3L668.6 127.8L667.3 128.6L664.6 127.5zM590.0 165.0L591.7 163.8L591.6 166.0L590.3 166.9zM633.5 125.1L635.7 125.5L634.1 127.8L631.9 127.5zM701.9 143.8L702.8 146.8L700.4 146.9L700.1 143.9zM657.0 281.9L655.1 278.2L657.7 276.4L660.3 279.6zM702.3 289.7L699.3 287.4L703.8 285.1zM611.1 264.8L611.1 261.4L614.2 262.8L615.3 265.5zM669.6 227.7L665.6 225.6L667.1 222.0L669.1 221.2L671.7 224.0zM670.4 171.8L673.0 174.8L668.4 174.7zM611.5 165.5L613.0 164.9L614.6 166.3L612.8 167.1L611.5 167.0zM725.8 261.7L722.5 260.9L724.8 258.4zM735.4 170.0L734.8 173.5L731.8 171.5L732.9 169.6zM628.4 150.5L630.2 152.2L628.0 153.3zM648.0 146.3L649.5 147.4L648.0 149.0L646.0 147.6zM683.3 299.5L681.4 298.8L682.8 297.8L685.1 298.0zM686.0 127.5L687.1 130.2L682.1 129.6zM610.7 186.9L612.7 186.1L613.9 188.0L610.9 189.7zM753.0 213.1L751.1 215.7L750.1 214.0L751.4 210.7zM647.5 209.6L651.5 207.3L650.9 211.3zM666.8 293.3L665.2 291.2L667.9 291.9zM698.1 135.6L699.5 138.5L698.5 139.0L696.7 138.1L696.8 136.3zM685.2 192.9L684.9 196.6L682.8 195.9L683.2 192.5zM739.2 197.7L738.1 198.9L737.0 199.3L736.5 197.2L737.6 196.1zM643.0 197.2L644.3 195.0L646.2 196.7L645.0 199.4L643.9 198.8zM641.9 251.8L642.1 247.5L645.6 249.6zM728.4 191.2L726.7 194.6L724.6 193.0L724.4 189.5zM649.0 283.1L646.2 279.5L649.9 279.0L651.4 280.6zM639.2 122.2L641.2 122.8L640.1 124.3L637.6 123.6zM610.7 230.4L612.0 228.7L614.4 229.7L614.0 231.7zM613.7 241.8L616.8 238.6L620.3 242.4zM716.0 266.8L712.7 266.0L716.0 263.7zM581.9 211.3L583.7 207.9L586.7 209.7L584.6 213.3zM721.0 186.1L719.7 188.9L718.1 187.2L719.2 186.0zM629.5 240.9L629.9 238.7L632.4 239.4L632.5 241.6zM649.0 254.2L648.5 252.7L650.1 251.6L651.4 253.2zM704.7 209.4L701.9 211.4L699.2 209.8L701.9 206.2zM649.5 144.9L650.9 145.3L650.6 147.2L649.1 147.2L648.2 146.0zM635.7 117.6L639.0 117.7L635.2 120.1L632.9 120.0zM595.3 224.3L597.0 220.7L598.4 225.0zM596.2 178.6L597.2 177.8L597.7 179.4L596.5 179.5zM663.6 113.2L667.0 114.0L664.7 115.9L661.8 114.4zM678.8 184.3L680.7 186.4L679.0 188.5L675.5 185.9L676.7 183.3zM717.3 252.3L715.0 252.8L714.0 250.7L717.7 250.2zM627.5 215.1L628.1 212.2L630.8 213.0L631.8 215.8L629.4 216.5zM587.7 222.6L589.6 220.1L590.0 224.4zM656.0 251.6L654.0 248.1L656.5 246.9L659.9 250.2zM734.2 204.0L733.1 205.2L732.9 202.7zM604.8 265.9L605.2 263.0L608.5 263.1L608.2 266.9zM708.5 169.5L708.9 172.3L704.8 172.0L704.3 168.8zM728.6 161.3L729.8 163.0L726.7 163.7L724.8 161.7L726.4 159.2zM659.7 226.0L659.2 221.9L663.8 222.8zM706.1 214.1L704.4 214.8L703.3 213.2L704.2 211.7zM605.5 147.1L608.6 146.9L608.3 148.4L605.6 151.5L604.7 150.1zM620.5 272.7L618.9 270.4L620.8 268.2L622.9 270.0L622.5 271.5zM699.5 265.3L697.6 265.5L698.0 263.9L699.6 263.7zM604.3 188.6L608.3 187.5L606.1 192.6zM651.3 181.2L654.5 184.5L650.9 184.5zM675.7 125.5L679.2 127.4L677.1 130.1L673.7 130.0L672.4 126.5zM639.5 170.2L641.8 170.4L641.7 171.4L640.5 172.5L639.2 171.9zM601.9 196.9L604.6 195.1L606.6 197.0L604.3 199.0zM626.7 150.4L628.6 150.7L627.4 152.3L625.8 152.4zM634.6 252.5L633.4 251.1L635.2 249.9L636.3 250.8L635.9 251.7zM729.0 198.4L727.2 199.8L726.4 198.4L727.1 196.5zM751.2 216.8L750.0 219.4L747.7 219.1L747.9 216.0L749.7 214.8zM643.3 237.2L642.2 235.2L644.5 233.9L646.6 235.4L645.8 237.5zM609.1 225.3L609.9 223.7L611.5 224.5L611.2 226.0zM662.9 251.3L660.3 248.4L664.5 245.0L666.0 247.9zM606.9 193.0L610.9 192.5L610.4 196.2zM720.6 256.9L717.8 256.0L718.7 252.6L720.6 252.9zM663.7 126.8L664.2 128.5L662.6 128.6zM632.2 231.6L632.3 229.6L634.8 230.3L634.5 232.0zM711.5 254.9L710.2 256.5L709.7 254.2L711.0 253.2L711.5 253.9zM655.9 281.7L655.1 278.1L656.7 276.7L660.8 279.1zM719.6 259.5L714.9 260.0L717.0 255.7L719.7 256.3zM650.8 174.0L651.7 174.8L651.4 176.3L649.5 176.1zM635.3 177.0L637.2 176.2L637.1 178.0L635.9 178.7L634.5 178.2zM638.2 269.0L637.1 266.2L641.6 268.1zM748.9 193.1L746.9 195.9L744.5 192.6L746.8 190.7zM722.6 154.4L721.3 157.4L720.1 155.2zM737.8 250.4L735.2 252.6L734.6 248.3L738.2 247.6zM709.2 229.3L705.0 230.0L704.3 227.0L707.8 225.6zM600.7 138.4L602.6 137.9L601.5 140.3L599.7 140.4zM675.9 168.9L677.4 170.9L676.1 174.4L672.7 172.8L671.6 170.4zM634.6 117.8L637.4 118.2L635.3 119.2L633.9 118.9zM686.6 285.7L684.5 284.7L683.8 282.8L687.2 282.5L687.5 283.6zM744.0 196.5L743.4 198.9L740.4 197.6L741.1 195.2L743.4 194.0zM698.9 220.0L695.0 221.0L693.8 219.1L694.9 216.9L697.0 215.6zM743.4 174.1L741.7 175.8L741.2 173.0zM754.0 187.9L753.2 189.6L752.0 189.5L752.2 187.2L752.6 186.7zM728.0 214.3L725.9 215.7L725.0 214.3L726.5 213.1zM640.8 137.4L643.6 137.7L642.4 139.3L639.8 138.8zM677.7 187.6L678.5 191.5L675.3 192.4L673.9 187.8zM747.6 176.4L747.0 177.5L745.9 176.8L746.2 175.0zM735.7 253.3L734.7 254.3L734.5 252.9L735.9 252.4zM633.2 225.8L632.9 223.1L637.2 222.8L637.2 225.0L635.4 227.4zM691.1 294.5L687.9 294.2L689.1 291.9L691.1 293.0zM574.8 234.4L574.9 232.4L577.3 234.5L576.4 237.1zM642.4 160.5L644.4 161.3L642.3 162.7zM687.7 138.8L689.9 141.6L687.1 142.5L686.0 139.9zM684.0 240.0L681.8 238.5L681.5 235.1L685.2 235.9zM719.9 161.7L719.9 163.9L718.1 163.2L718.1 161.1zM726.7 174.7L727.3 176.4L725.6 176.8L725.0 175.2L725.3 174.2zM649.1 117.1L649.9 118.4L648.6 119.5L647.9 118.6zM702.8 252.7L701.1 252.3L700.5 251.1L701.6 250.0L703.3 250.4zM656.2 113.1L658.5 114.3L656.0 115.6L654.4 116.3L652.6 114.0zM588.9 210.3L590.4 207.0L593.4 208.1L590.1 212.8zM724.5 158.1L725.2 159.9L721.5 161.2L720.8 158.4L722.3 156.9zM633.6 155.1L636.0 156.7L632.2 158.3zM672.2 126.8L673.9 129.3L671.4 129.1zM732.1 143.0L731.8 144.8L730.1 142.8zM733.8 195.5L732.0 196.9L729.1 196.8L729.7 192.3zM653.2 162.2L655.3 163.8L654.2 165.0L651.7 164.2zM593.2 223.7L593.5 219.8L596.5 222.1L595.6 225.9zM623.2 237.1L625.0 232.4L628.2 233.8L627.6 237.3zM588.5 212.2L588.9 210.5L590.2 212.3L589.6 213.6zM722.5 274.4L720.4 274.5L723.0 271.5zM750.4 182.2L748.2 183.6L747.5 180.3zM729.5 257.4L727.9 257.9L727.8 255.9L729.1 255.7zM643.7 293.5L643.0 292.0L644.9 292.0L646.2 292.7zM599.6 187.7L602.3 186.1L602.3 188.5L600.6 189.5zM597.1 227.6L597.7 226.2L599.5 227.8L598.5 229.3zM620.4 198.0L624.9 195.5L625.5 198.4L622.7 200.1zM635.8 259.3L636.0 256.8L637.8 257.8zM672.7 194.9L672.4 200.0L667.9 196.6zM724.9 154.6L725.7 158.8L722.1 157.8L721.9 154.9zM607.7 168.0L610.6 166.2L611.7 168.4L609.0 170.9L606.5 170.1zM702.4 224.3L699.7 225.7L699.1 223.1L701.7 221.6zM709.7 224.4L707.4 225.9L704.4 223.8L705.2 221.5L708.0 220.9zM737.9 216.5L737.1 217.9L735.9 216.1L736.9 215.2zM756.5 197.2L756.0 198.8L755.4 198.5L755.1 197.6L755.7 195.8zM738.6 211.5L737.2 212.1L737.2 210.3zM692.8 182.1L692.3 183.3L690.5 183.2L690.7 181.3zM713.8 215.0L711.6 215.9L709.2 212.6L712.5 212.5zM746.0 185.0L745.3 188.2L744.1 187.7L743.4 183.9L745.2 182.8zM716.8 208.5L714.3 210.9L712.7 209.9L714.7 207.5zM624.0 229.2L624.1 226.0L627.2 226.7L626.3 229.4zM613.9 282.8L613.7 281.1L616.0 280.1L618.5 282.2L618.6 283.5zM738.7 215.2L737.5 216.1L735.9 214.3L737.1 213.0zM634.0 127.2L637.7 128.3L632.1 130.3zM621.9 274.8L620.9 272.0L624.3 274.4zM603.2 277.8L602.4 275.2L604.0 274.9L606.0 276.8L605.3 278.4zM658.4 290.2L656.9 288.2L660.6 288.6zM679.0 127.4L681.2 131.5L676.5 129.6zM742.2 235.3L740.1 237.9L738.6 232.9L741.8 232.4zM645.3 126.6L647.6 128.5L644.6 130.0zM709.0 190.7L708.3 192.5L705.1 192.2L707.1 189.5zM605.1 265.8L604.3 263.0L607.5 266.1zM674.3 240.1L671.3 239.8L671.2 237.4L674.6 236.5L675.0 237.6zM707.7 136.9L708.0 138.2L706.1 138.2L705.9 136.8zM652.5 250.5L650.4 247.6L652.2 246.3L655.1 246.4L656.4 248.5zM663.3 165.7L664.7 166.7L664.8 168.1L663.5 168.5L662.8 166.4zM711.3 251.2L708.5 250.6L708.3 247.8L711.4 246.9zM725.2 139.2L726.7 141.6L725.4 142.7L723.3 141.5L723.0 139.2zM713.5 215.2L712.5 216.4L711.8 215.1L712.4 214.0zM627.1 147.2L630.5 146.5L631.0 149.2L628.7 150.9L625.1 148.2zM638.3 203.2L641.5 201.4L644.2 202.8L641.4 206.2zM641.4 266.6L640.0 264.7L641.5 262.7L644.7 264.0L643.9 266.3zM682.7 119.9L684.3 120.5L682.8 122.7L680.1 122.3L679.0 119.7zM649.4 213.0L650.7 211.3L653.4 211.8L652.3 214.2zM609.2 258.9L609.6 255.6L613.3 258.4zM632.6 198.6L633.6 196.8L634.7 198.5L633.1 200.2zM608.3 225.0L609.0 223.6L610.5 224.8L609.7 225.9zM672.8 158.8L674.2 162.1L672.2 163.0L669.6 160.6zM611.2 247.4L611.3 244.5L613.1 245.1L613.8 248.7zM694.4 168.4L695.7 170.7L691.3 171.6L690.9 167.3zM578.9 202.3L580.1 200.0L581.7 202.1L580.4 204.3zM660.5 219.3L657.7 215.4L662.0 213.0L662.8 217.0zM727.4 146.8L728.0 149.1L726.5 149.6L724.4 148.1L725.1 146.5zM614.7 248.7L615.8 247.4L617.6 248.6z"/><path fill="#dcc4a0" d="M712.8 258.4L709.2 259.8L709.3 257.2L710.2 256.0L712.8 257.2zM621.7 195.0L625.3 195.2L623.7 197.9zM650.4 182.4L651.9 182.7L651.7 184.2L650.5 184.7L649.5 183.1zM631.4 247.0L631.4 243.8L633.1 243.8L633.9 246.3zM626.5 255.4L626.4 252.7L628.0 252.7L629.4 253.0L629.2 255.3zM617.8 146.4L622.8 146.2L622.7 149.1L618.5 150.4zM609.2 191.7L610.7 191.2L612.5 192.5L610.1 193.9zM695.4 204.6L693.4 206.3L693.5 203.6zM757.1 211.9L755.6 213.3L754.9 211.8L755.8 210.0zM584.4 218.5L586.8 216.2L587.7 219.9zM628.0 131.0L633.1 131.1L630.4 134.4L626.9 133.7zM663.2 183.6L667.3 185.8L665.4 187.6L663.2 188.3L660.7 184.8zM705.5 218.1L703.3 219.1L700.0 217.1L702.8 214.0zM691.7 198.0L691.2 199.9L689.1 198.2L690.1 197.1zM733.7 242.6L731.8 244.2L731.4 239.5L734.2 239.1zM755.6 211.6L754.7 213.3L754.0 210.9L755.0 210.3zM621.0 289.0L619.3 285.6L624.0 286.6zM684.3 229.9L682.9 229.9L682.9 228.1L684.6 228.0zM630.7 165.3L632.7 165.6L631.8 167.7L630.2 167.1zM633.5 262.0L633.3 260.8L634.6 259.4L635.9 260.0L636.1 262.9zM710.9 210.2L710.1 212.7L707.8 211.4L707.8 209.2L709.8 208.6zM614.2 267.2L612.8 265.0L613.9 263.4L617.1 264.9L616.9 268.0zM658.5 161.2L662.4 164.7L658.8 166.2L656.3 165.0zM747.5 248.2L746.6 248.9L745.4 248.0L746.7 246.2L748.6 245.9zM728.8 219.2L726.7 220.4L726.7 217.3zM600.9 237.3L601.6 235.3L603.8 236.9L602.7 238.1zM611.7 277.7L610.4 276.2L613.2 275.9L613.5 277.9zM688.3 158.9L689.4 161.9L686.2 160.8zM588.5 161.8L590.3 160.7L588.9 163.2zM711.9 173.4L711.4 174.8L710.0 174.7L710.0 173.1zM614.9 188.3L618.2 186.8L618.4 189.6L616.3 190.7zM627.8 197.6L630.2 195.9L631.9 198.0L629.8 201.2zM728.1 222.5L726.4 223.8L725.8 221.7L727.6 220.4zM598.3 153.3L602.1 152.7L600.6 157.1zM698.2 155.8L698.3 158.6L695.2 156.4zM757.8 200.1L757.4 202.0L756.4 201.2L757.2 199.0zM602.8 248.3L602.1 244.3L603.6 244.3L606.0 246.6L604.9 250.0zM694.7 170.9L695.5 173.5L692.7 173.8L691.9 171.6zM666.8 151.4L668.8 152.4L666.5 153.7L664.5 153.3zM654.8 118.5L657.4 119.5L655.6 121.2L653.2 120.3zM679.8 148.9L680.7 151.5L677.5 151.9L676.9 150.0zM700.5 139.1L701.3 142.1L697.4 140.2zM629.9 247.8L631.0 243.7L633.4 243.3L635.6 247.1zM686.4 154.3L686.8 156.0L686.0 156.5L684.6 154.7zM711.9 224.5L710.1 225.4L708.5 224.0L709.1 221.1L711.4 220.4zM650.8 286.5L647.6 285.2L649.0 283.1L652.4 284.0L653.2 286.5zM647.3 269.6L645.6 267.9L648.8 266.2L649.9 268.8zM720.1 158.1L719.3 160.3L717.1 159.7L716.7 156.1zM748.4 202.7L745.7 204.1L745.3 199.4zM686.4 258.5L683.6 256.7L684.9 254.4L686.5 256.1zM658.2 127.8L659.5 128.5L658.1 130.0L656.6 128.5zM577.6 191.1L579.2 189.8L580.8 191.4L579.8 192.7L577.9 193.2zM573.3 198.5L574.1 195.5L575.9 197.6L575.0 199.9L573.6 199.8zM607.8 211.0L610.4 207.5L612.5 210.2L610.7 212.3zM590.8 170.9L593.0 168.5L593.4 172.0L591.2 172.7zM665.3 292.5L662.2 291.9L663.0 290.8L665.8 290.7L666.8 292.3zM702.3 272.0L698.6 271.2L699.9 267.8L703.6 268.3zM731.9 219.5L728.9 221.6L728.3 218.8L730.4 218.0zM608.5 204.3L610.7 201.5L611.4 202.4L612.3 204.8L610.0 206.7zM620.4 198.2L623.6 195.7L626.3 196.6L625.4 200.7L621.5 200.2zM615.7 201.8L618.3 200.1L618.7 202.1L616.9 203.3zM681.6 227.7L679.6 228.5L678.5 227.4L681.1 225.2L681.9 226.1zM625.6 125.9L627.5 126.4L625.9 127.6L624.1 127.1zM753.5 205.2L752.1 207.0L751.1 205.9L752.1 202.8zM597.4 202.6L599.7 198.9L600.8 200.6L601.8 202.7L599.1 203.7zM697.9 293.4L696.2 293.0L697.3 292.0L698.8 292.0zM692.7 262.7L688.3 262.6L690.8 258.1L693.4 258.3zM737.5 192.7L736.9 195.4L735.1 194.9L733.7 193.0L735.8 191.3zM714.5 210.7L713.6 213.2L710.7 210.2L713.2 208.1zM575.3 238.1L575.7 236.5L576.6 238.7zM696.1 160.3L696.1 163.1L693.8 162.3L693.0 160.0zM695.4 169.5L695.5 171.8L693.6 171.0zM721.2 139.4L722.1 141.1L720.3 140.7L720.0 138.9zM673.0 282.3L669.9 280.2L674.1 279.1zM624.1 238.1L625.3 234.3L626.6 236.6zM635.8 117.2L638.1 118.3L635.3 120.4L632.4 120.0zM581.4 247.8L581.4 246.8L582.4 247.4L582.5 248.4zM681.6 241.5L679.9 241.1L680.4 237.8L683.7 239.0zM608.6 145.9L611.0 146.2L610.7 148.1L608.0 149.1zM674.0 238.5L672.0 236.8L672.8 234.8L676.0 235.6zM723.0 192.7L720.5 195.7L719.6 191.8zM617.3 204.7L618.3 202.7L621.6 204.6L622.4 207.9L619.1 208.4zM747.3 188.6L746.9 191.3L744.3 189.5L744.1 187.3L745.0 186.3zM656.7 122.0L657.9 122.9L656.9 124.4L655.1 123.5zM663.4 132.3L667.1 133.9L663.7 136.9L661.3 134.7zM613.4 204.2L617.8 202.2L617.3 206.5zM630.4 198.2L632.5 196.1L634.2 198.6L631.3 199.7zM690.2 202.3L689.5 204.5L688.0 203.5L688.5 201.3zM608.6 248.4L608.7 247.3L609.5 246.8L610.4 248.3L610.1 249.0zM721.4 276.8L719.1 277.2L720.0 274.4L722.7 273.9zM607.1 188.5L610.0 188.8L608.3 192.5zM667.9 191.5L669.3 193.2L667.1 194.1L667.2 192.1zM752.6 193.5L751.4 195.8L749.2 193.6L749.4 190.1zM648.5 185.3L651.3 185.1L651.6 189.0L648.8 190.2L647.4 189.3zM625.7 209.0L628.1 206.8L631.7 208.8L628.8 210.8zM667.8 257.0L666.4 256.0L666.7 254.4L668.9 254.3L669.7 255.9zM705.8 217.8L704.9 218.5L704.1 217.7L704.3 215.8L705.2 216.3zM719.9 219.3L716.9 220.9L715.4 216.9L718.5 215.9zM688.6 218.3L686.9 218.9L686.4 217.3L687.6 216.8zM740.8 250.5L737.7 252.9L738.2 248.8L741.0 247.1zM693.8 146.0L694.4 147.8L691.6 148.3L691.6 146.8zM633.4 272.3L631.5 269.1L634.0 267.3L637.0 269.5L636.3 272.2zM676.9 177.0L678.0 179.6L676.7 181.7L674.0 179.8L674.2 178.0zM730.2 165.7L729.6 167.6L728.1 165.3zM586.0 161.0L589.3 159.3L588.9 163.0L584.8 164.5zM663.6 126.7L665.2 128.6L661.9 131.0L660.2 129.3zM578.9 224.8L579.4 222.9L580.8 224.5L580.7 226.0zM638.0 254.4L637.5 251.9L639.1 250.9L640.3 253.8zM611.3 165.5L613.2 165.1L614.3 167.3L612.3 168.9L610.4 167.6zM602.0 265.2L602.3 262.6L605.2 265.9zM753.5 191.0L752.4 192.0L751.6 189.9zM695.9 294.6L694.4 294.6L694.5 293.4L696.4 292.8L697.2 293.3zM697.9 264.1L694.1 264.6L695.3 260.9L698.9 261.1zM755.6 185.8L753.8 188.9L753.3 185.2zM614.1 245.7L614.0 243.2L616.5 242.8L617.5 245.7zM575.1 196.5L576.7 194.3L577.4 196.6L575.6 198.2zM729.9 140.8L730.5 143.1L728.6 142.4L727.1 140.1zM644.8 140.3L648.0 139.9L645.6 143.6L642.3 143.8zM691.3 242.9L689.4 242.2L689.8 240.5L691.8 240.7zM645.9 160.9L647.9 161.6L647.1 164.5L644.5 164.0zM686.9 203.3L685.4 204.9L684.6 202.6zM734.6 181.5L733.6 182.9L732.0 181.9L732.5 179.5zM635.6 193.4L637.5 191.3L638.1 194.8L635.9 196.1zM582.8 216.7L584.0 214.0L585.2 216.1L584.3 218.5zM684.5 117.8L685.9 118.6L685.1 119.6L683.4 119.2L683.5 118.2zM695.0 221.3L692.5 223.0L691.3 219.3L694.5 219.2zM670.5 117.8L673.5 119.8L671.5 121.4L668.6 119.6zM697.7 247.0L694.9 245.4L695.4 241.8L698.1 242.5zM582.0 200.1L585.9 197.8L585.3 202.1zM609.7 248.2L608.4 243.9L613.1 243.7L614.3 246.9L611.8 249.2zM608.8 250.1L609.8 246.5L614.4 247.4L613.4 251.3zM631.4 120.8L633.0 121.5L628.4 123.6zM637.3 258.1L636.0 255.8L639.5 254.7L640.0 257.5zM717.0 152.3L717.1 157.7L713.4 153.0zM619.4 272.2L618.2 271.3L620.1 270.5L620.4 271.0L621.0 272.7zM637.1 169.4L640.0 171.2L637.4 171.9zM744.3 220.0L741.6 221.7L739.3 220.4L740.3 216.8L742.5 217.3zM696.3 154.0L698.6 157.6L694.9 159.3L693.7 155.6zM672.3 202.4L671.1 204.7L669.6 203.7L668.9 201.7zM651.5 167.5L653.6 168.9L651.7 172.7L648.4 171.2zM685.2 291.8L682.9 291.1L683.6 289.2L687.2 289.7zM628.1 263.3L626.2 260.2L630.2 260.0L630.8 262.1zM669.0 157.7L671.7 160.0L669.2 161.5L667.3 161.2L666.5 159.2zM725.5 140.9L726.0 143.4L723.9 143.5L722.5 142.2L722.7 140.1zM750.4 178.2L748.1 180.3L747.3 176.4zM687.4 193.1L686.2 196.9L682.1 198.1L683.8 193.2zM640.3 263.2L640.0 261.4L642.2 262.3zM628.6 223.2L631.4 219.7L633.7 224.9zM659.4 126.7L660.6 129.2L656.0 129.7zM708.2 287.7L706.8 287.2L708.8 286.1zM644.1 217.6L646.0 213.4L649.2 215.2L649.5 218.4zM700.9 261.2L699.3 260.0L700.6 258.8zM744.7 196.8L743.0 200.3L741.3 195.3zM736.9 155.0L736.6 158.8L733.7 154.6zM599.4 253.6L599.5 251.6L601.7 252.0L601.1 253.9zM656.0 239.2L654.9 237.5L656.9 235.0L658.8 234.9L659.1 239.0zM595.6 208.7L597.7 206.8L600.4 209.0L598.0 211.1zM651.3 174.3L653.5 174.7L652.7 176.4L650.2 176.2zM724.4 206.8L723.3 207.6L720.9 205.8L722.6 204.7zM603.9 226.4L606.1 222.0L609.6 224.3L606.9 226.7zM725.2 222.0L723.8 223.7L722.7 221.3L725.0 220.1zM667.6 186.6L669.5 187.5L668.5 189.6L666.8 189.3L666.4 187.1zM725.2 257.4L721.6 259.2L720.3 256.9L721.6 254.3L724.6 255.0zM665.5 289.2L664.2 288.6L664.5 286.6L667.4 286.3L667.8 288.5zM690.9 168.4L691.2 171.6L688.0 171.9L688.8 169.2zM685.4 193.2L685.1 194.5L683.4 194.1L684.1 191.9zM588.1 261.6L587.0 259.2L588.6 259.3L590.1 261.6L589.4 263.4zM614.5 156.8L616.9 157.3L615.3 158.8zM687.7 190.5L687.4 193.5L685.0 193.3L686.0 190.2zM662.4 227.3L660.9 224.3L662.4 222.5L664.6 225.5zM608.8 238.6L609.1 236.3L611.0 236.1L612.3 237.8L611.2 239.4zM690.7 186.0L690.5 187.7L685.9 187.7L686.9 184.0zM581.8 217.0L583.0 214.5L584.0 215.7L583.3 218.2zM713.7 131.2L714.1 132.7L713.6 133.0L711.1 132.1L711.9 130.9zM729.7 183.8L727.0 186.2L726.4 182.3zM686.9 284.7L684.9 283.1L687.2 279.7L690.0 281.0zM671.1 126.8L671.9 128.5L670.7 129.9L668.3 128.3zM677.7 173.6L678.6 175.8L675.8 177.6L673.8 174.1zM594.8 240.6L594.9 239.0L597.1 238.7L597.8 240.2L596.9 241.1zM628.6 208.9L631.1 207.1L631.4 210.0zM648.8 139.5L652.2 141.5L649.9 142.5L647.7 142.6zM686.2 202.0L683.1 205.6L682.3 201.0zM691.9 159.6L691.9 163.6L689.6 161.0zM745.9 210.3L743.6 212.9L741.9 209.7L744.2 207.5zM708.2 169.5L706.6 173.4L704.2 169.9zM639.0 267.8L638.5 266.3L639.6 265.5L640.7 266.9zM738.0 191.4L737.4 194.0L735.3 192.4L734.7 190.6L736.2 190.4zM683.5 256.7L681.2 254.5L682.3 252.2L684.5 253.9zM692.6 235.7L691.2 235.6L691.4 233.8L692.7 234.1zM703.4 282.6L701.2 283.0L701.2 280.8L704.4 280.4zM710.2 208.5L708.1 212.4L704.9 207.9L707.1 206.3zM735.1 192.5L735.2 195.3L733.0 194.0L732.0 191.2L733.8 191.1zM658.7 247.2L656.9 244.8L662.0 245.2zM626.4 164.8L628.1 164.7L628.7 167.0L627.8 168.3L625.7 167.5zM597.5 253.8L597.0 251.7L600.2 253.0L599.7 254.3zM707.6 149.0L708.0 152.1L705.5 151.2L704.7 149.6zM569.8 204.8L571.0 201.8L571.4 203.2L571.7 205.6L570.5 206.4zM637.5 241.7L636.6 239.2L637.9 237.4L640.6 239.7L639.4 241.9zM616.7 242.9L618.4 239.5L621.2 244.4zM614.9 196.9L617.8 193.2L619.6 197.5L615.2 199.6zM635.4 119.4L638.5 119.1L637.3 121.9L632.7 121.1zM642.5 173.6L645.6 174.0L644.9 175.6L642.2 174.8zM655.3 239.3L652.7 238.6L655.2 235.7L658.5 236.2L657.6 239.7zM617.3 228.4L617.4 225.1L620.1 225.2L621.1 228.4L618.6 228.9zM600.9 196.2L602.3 194.6L604.8 196.0L603.0 198.7zM643.8 148.7L645.9 149.8L644.2 152.3L641.9 150.6zM693.4 238.1L691.1 237.8L690.5 235.8L693.4 235.8zM652.7 245.5L651.2 243.7L652.3 242.4L653.3 243.1L654.0 245.1zM611.0 193.0L613.5 191.1L614.8 192.9L614.1 194.3L610.5 195.7z"/><path fill="#d8bc98" d="M700.3 249.3L698.9 248.9L697.1 247.8L699.5 245.8L701.1 246.8zM715.9 233.8L713.6 235.2L713.5 233.8L713.7 231.5L715.6 232.1zM672.1 250.0L670.0 249.3L670.3 247.0L671.6 247.3L672.7 248.6zM698.1 293.9L695.5 293.5L696.2 292.4L698.5 292.8zM661.4 257.4L659.3 257.0L660.1 253.9L663.4 253.9L664.7 256.6zM655.3 252.8L653.1 247.3L659.6 248.4zM672.6 197.7L672.3 199.1L671.5 201.1L668.7 199.5L670.0 198.2zM684.4 124.6L686.5 126.6L683.9 128.2L681.8 126.2zM739.6 197.9L738.8 199.8L736.6 199.0L736.7 197.8L737.7 196.3zM671.6 233.2L669.7 232.8L669.7 231.1L671.2 230.3L672.5 232.3zM632.9 121.3L633.5 121.6L633.9 123.0L632.6 123.1L630.9 122.3zM607.4 227.3L607.8 225.7L610.0 226.7L609.4 228.8zM589.2 191.3L593.3 189.4L591.3 194.1zM578.3 204.5L578.9 201.4L580.8 202.6L581.2 204.7L579.3 205.8zM661.2 202.1L663.5 204.3L661.1 205.6zM689.4 122.3L691.5 124.8L688.5 125.1L688.2 123.3zM697.5 148.6L698.7 150.9L697.7 152.2L694.8 151.2L693.8 148.2zM646.4 260.5L643.9 257.8L646.2 256.3L649.8 257.2L649.8 258.8zM715.4 238.5L713.5 238.5L712.7 237.8L713.9 234.7L715.8 235.9zM638.8 199.3L640.8 197.8L643.0 200.5L639.6 202.3zM704.2 270.1L702.0 270.0L702.7 267.1L704.8 267.5zM617.1 132.6L619.5 132.8L617.6 134.1zM647.5 282.6L646.5 280.7L648.9 280.8zM615.4 180.4L617.9 178.7L618.4 181.0L616.0 181.5zM725.4 183.6L724.6 184.7L723.1 183.9L723.5 182.3zM591.4 262.0L590.9 259.8L591.9 259.4L593.1 260.8L593.3 262.4zM714.4 130.0L714.7 130.7L713.7 131.4L711.6 130.9L711.4 129.2zM708.5 227.6L705.3 227.5L704.1 223.2L706.7 223.1zM653.1 135.8L654.7 137.6L652.6 137.7zM632.0 260.0L630.5 257.3L633.0 254.7L634.5 256.4L633.5 258.9zM600.7 139.5L602.7 139.3L602.1 141.2L600.0 141.2zM693.0 186.3L691.0 189.0L689.8 186.2zM697.7 286.6L695.6 285.3L698.9 283.4zM749.0 171.2L748.5 171.9L747.2 172.0L746.3 170.8L747.3 169.7zM735.3 267.0L732.7 268.2L732.9 266.4L734.4 265.0L735.3 264.9zM633.5 171.6L635.9 171.6L636.8 173.2L634.9 173.9L633.3 174.0zM723.6 243.0L720.9 243.8L720.0 240.8L722.4 239.8zM656.4 236.5L655.2 234.8L656.8 230.4L659.9 232.6L660.9 234.4zM608.4 172.4L611.4 170.7L611.8 174.5L609.7 175.1zM613.6 162.9L617.8 162.8L615.3 166.8zM598.7 177.8L601.2 177.1L600.6 179.5L599.2 180.2zM693.8 128.7L695.3 131.1L692.6 131.9L690.8 130.0zM680.4 215.6L675.4 217.2L677.4 211.8zM710.6 218.4L707.6 221.9L705.4 217.7L708.6 216.3zM656.5 197.8L660.3 197.5L660.0 200.7L657.6 202.1L654.8 199.4zM720.1 215.4L718.2 217.5L716.0 216.9L716.0 214.2L719.1 213.7zM649.7 114.6L652.1 114.9L650.0 116.3L648.4 115.9zM681.5 147.6L682.4 151.5L680.8 152.4L678.2 149.8zM636.0 122.7L639.3 123.4L638.7 125.5L634.3 124.4zM599.8 172.8L602.4 171.6L602.8 175.4L600.6 176.5zM625.2 231.1L625.4 228.6L627.5 228.3L629.6 231.5L627.0 232.3zM589.1 241.1L589.7 238.6L591.8 237.9L592.5 241.0L590.7 242.0zM715.2 194.8L715.1 196.4L713.2 195.6L713.7 193.6zM701.9 243.2L699.0 244.8L698.9 241.3L701.8 241.0zM666.0 188.8L667.5 191.7L665.3 193.3L663.4 190.3zM699.3 217.3L697.1 219.8L696.3 216.8L697.9 215.7zM718.8 236.9L717.0 237.5L716.2 234.6L718.9 234.1zM613.4 255.1L612.9 250.7L616.9 251.9L616.3 255.2zM752.3 209.5L751.8 212.0L750.7 211.6L750.6 209.5L751.7 208.3zM655.1 196.4L657.3 197.0L658.3 198.8L657.0 199.4L655.7 198.9zM689.3 259.4L687.3 258.2L689.1 257.4zM591.8 221.0L594.0 218.1L596.1 219.7L594.3 221.7zM715.5 215.9L712.1 216.1L713.1 212.4zM744.0 196.7L742.1 198.4L740.8 195.3zM627.3 158.0L628.3 157.1L628.5 159.4L627.6 160.2L625.6 159.5zM604.9 173.5L609.7 173.5L609.5 177.6L606.9 177.9zM657.3 125.8L658.3 127.5L657.9 129.5L654.5 128.1zM602.5 258.4L601.9 254.8L604.8 255.8L604.0 257.7zM631.3 157.1L634.7 157.4L635.4 161.1L630.9 161.1zM750.9 237.6L747.5 237.7L749.2 233.4zM691.6 180.7L691.8 184.8L690.0 185.4L687.2 182.5L689.6 181.2zM639.7 171.3L645.2 173.0L644.0 176.2L639.9 175.4zM700.7 139.0L703.1 142.3L699.6 142.2L698.5 140.1zM633.1 191.3L636.0 190.6L638.6 192.6L637.8 194.4L634.0 193.9zM719.9 272.1L716.5 272.9L717.0 270.0L719.5 270.1zM658.1 205.2L661.1 203.8L659.4 208.0zM644.4 125.5L646.6 127.3L644.0 127.4zM709.2 130.6L710.2 132.5L707.6 133.0L705.0 130.1zM750.9 212.4L749.2 214.0L748.5 213.1L749.7 210.5zM594.4 196.6L596.9 194.2L597.9 196.3L597.2 198.2L595.8 199.8zM635.1 251.3L634.0 247.4L638.6 246.8L638.7 249.8zM611.6 238.7L613.2 236.8L615.3 238.1L614.5 240.8zM589.4 186.3L591.2 185.1L592.3 186.5L591.1 187.9L589.9 187.6zM615.6 284.5L615.0 283.5L616.7 283.5L617.9 285.0zM598.6 175.8L601.5 176.0L599.0 179.2zM629.6 272.4L629.5 270.4L631.0 271.2zM634.8 219.4L635.9 217.2L637.2 217.9L636.5 219.5zM577.7 243.9L578.9 243.0L579.5 245.0zM687.6 215.6L684.2 216.6L683.8 213.9L686.2 213.0zM638.9 167.2L641.1 167.3L639.7 169.9L637.4 169.0zM694.2 179.3L694.9 182.0L689.5 181.7L689.0 178.4zM638.9 170.0L641.5 170.0L641.2 173.0L638.2 172.7zM594.1 254.5L594.5 252.4L596.6 253.4L596.8 256.1zM650.1 164.5L652.5 165.1L651.3 167.5L650.1 166.1zM728.5 183.1L727.4 186.2L724.0 185.4L725.2 182.4zM659.2 293.5L656.9 291.0L661.0 290.4zM671.0 137.8L672.1 138.6L671.7 140.0L669.9 139.8L669.6 138.4zM664.0 262.6L661.6 259.1L665.3 260.3zM696.6 295.5L692.9 293.9L698.3 291.9zM651.1 120.7L653.5 122.6L650.3 122.9zM599.7 153.1L603.1 151.3L602.1 155.1L599.6 156.6zM684.0 117.6L685.4 118.8L683.4 119.5L682.0 118.4zM723.0 183.7L722.7 185.3L720.5 185.3L721.0 183.4L721.2 182.0zM584.6 249.2L583.6 245.3L586.4 244.4L587.2 247.6L586.5 249.7zM716.5 243.1L713.2 244.4L712.1 242.7L713.7 241.0L715.4 241.2zM615.8 146.8L620.6 147.2L619.2 151.6L614.4 150.7zM686.1 231.1L683.9 231.9L682.8 228.2L683.6 226.1L686.9 228.3zM663.5 259.5L661.9 257.5L664.6 257.6zM711.5 243.7L707.9 244.7L708.7 241.5L710.9 241.6zM750.8 221.5L749.4 222.4L749.8 220.4zM642.6 299.8L640.5 297.7L645.3 298.8zM686.8 119.1L688.1 120.5L686.4 120.8L685.1 119.8zM714.4 260.2L712.4 260.1L713.7 258.6zM742.5 252.7L740.7 253.2L740.4 251.9L742.3 250.4zM605.9 276.8L605.2 274.9L606.6 275.0L607.2 276.1L607.1 276.6zM571.4 203.3L573.2 201.7L574.4 204.8L572.7 207.2zM642.7 149.2L644.6 150.3L645.1 151.8L643.0 152.1L642.3 150.8zM688.1 287.1L684.0 286.1L687.2 283.1L688.9 284.8zM685.0 279.6L682.5 277.6L685.2 277.1zM714.9 205.1L713.3 208.6L710.9 207.4L710.1 204.4L713.1 203.5zM684.2 134.6L686.0 136.5L683.5 136.4L683.3 135.1zM705.9 221.3L703.1 221.6L703.1 217.7zM638.9 133.0L639.9 133.6L639.3 134.9L637.9 134.5zM737.7 178.0L737.1 179.6L735.0 179.1L733.8 176.1L735.3 176.3zM621.7 124.1L624.8 123.9L622.6 126.2L620.0 125.7zM681.8 170.8L682.4 173.5L680.3 176.3L678.2 171.7zM586.4 242.2L587.0 240.6L588.3 241.5L588.2 243.0zM693.2 284.0L691.3 283.1L690.9 282.2L694.4 280.7L694.9 282.5zM644.0 221.9L645.0 219.0L646.5 221.1zM575.5 190.5L577.4 188.6L577.9 190.5L576.5 191.3zM682.0 257.1L677.5 256.7L680.6 252.5L683.8 253.8zM695.5 249.7L693.9 250.0L692.0 245.9L694.2 244.9L697.1 245.7zM657.0 293.1L654.5 289.2L657.6 290.2zM647.2 270.7L644.7 268.2L647.6 266.2L648.7 269.2zM712.8 207.9L711.5 211.3L708.2 209.1L709.1 206.5L711.7 205.4zM749.3 204.4L748.6 205.9L747.5 204.2L748.8 203.1zM578.4 178.1L580.0 177.0L580.4 178.6L578.4 179.9zM682.3 120.6L683.5 122.4L682.6 122.9L680.8 123.3L679.5 121.6zM625.3 243.9L626.6 239.1L629.5 241.4zM595.9 195.8L598.7 194.6L597.3 198.6zM572.1 215.9L572.4 214.3L573.8 215.9L572.7 217.2zM656.1 148.1L658.9 149.6L656.6 151.2L655.1 150.2zM617.4 209.0L619.1 207.7L619.4 211.2zM651.7 120.0L655.4 121.9L651.8 124.4L650.2 122.7zM607.0 250.7L607.9 248.3L608.7 250.0zM674.0 182.0L674.8 184.7L673.8 187.4L671.5 185.4L671.0 183.4zM712.5 153.6L712.2 158.1L710.3 157.6L708.1 153.5zM616.3 222.8L618.5 221.3L620.6 222.9L619.5 224.3zM598.9 275.5L597.6 273.0L598.6 271.3L601.4 274.5L601.6 276.1zM701.8 211.9L698.8 213.3L699.7 209.5zM709.1 168.5L708.8 169.9L707.3 170.7L707.5 167.9zM640.0 137.4L642.4 138.2L641.7 140.0L639.2 139.5zM606.9 184.4L610.6 183.3L611.3 187.3L608.7 187.1zM634.5 265.4L633.1 263.0L634.2 262.8L636.0 262.7L635.5 264.8zM679.6 180.1L680.8 184.3L677.0 185.4L676.1 181.3zM630.4 284.2L629.0 281.6L631.2 280.7L632.4 283.6zM645.2 140.8L646.5 142.6L644.4 143.0zM694.0 212.7L690.9 214.1L688.1 212.0L690.7 208.4zM706.8 136.3L706.7 137.9L703.2 138.5L703.1 135.5zM700.9 175.0L701.6 177.8L699.1 178.1L698.4 175.9zM656.5 231.1L655.6 230.0L656.8 229.0L657.7 230.7zM579.9 182.7L582.3 180.9L583.4 183.3L581.1 184.9zM615.7 255.2L615.2 253.9L617.5 253.8L617.2 255.9zM708.5 222.3L707.7 223.0L706.6 221.7L708.0 221.0zM609.4 175.1L610.9 174.8L611.8 175.9L610.1 177.0zM603.2 194.5L606.4 192.4L606.4 194.9L603.8 196.9zM722.5 259.0L719.3 258.0L719.9 254.7L722.9 254.8zM636.5 241.4L635.9 239.8L637.6 239.2L637.9 241.0zM739.6 261.2L738.3 262.9L737.8 261.5L738.9 259.7L740.4 259.7zM717.7 262.3L715.0 262.6L715.6 259.7L717.4 260.0zM571.3 213.9L571.9 213.2L572.8 213.5L572.8 215.4L572.2 215.5zM600.6 138.4L603.6 137.8L601.8 141.4L599.4 142.3zM672.9 204.8L672.7 206.9L670.5 205.1L671.8 202.8zM663.1 233.8L661.3 231.7L662.7 229.8L664.3 232.7zM735.0 246.2L730.8 247.2L731.3 244.7L733.6 242.1zM644.0 270.9L642.6 268.7L643.7 267.5L645.7 269.4zM690.3 125.7L692.0 127.4L689.5 127.7L688.5 126.2zM745.2 254.3L743.5 255.0L743.2 253.8L744.6 252.2L745.8 252.5zM700.2 233.9L698.6 233.8L696.9 232.4L698.3 230.2L701.0 231.2zM667.2 191.2L668.7 193.6L666.9 196.4L664.6 195.0L664.5 191.2zM665.4 232.6L662.8 230.2L664.5 228.1L666.1 231.0zM644.9 213.2L646.5 211.6L646.8 213.4zM618.8 239.2L617.8 236.8L619.9 236.7L621.0 237.8L619.6 239.8zM627.0 186.7L628.7 186.2L629.8 188.2L627.1 189.6zM576.1 185.4L578.3 184.0L577.4 187.3zM639.9 288.2L639.3 285.7L641.9 285.4L643.1 287.9zM638.3 204.6L639.2 202.2L642.7 203.1L642.4 206.6L640.0 206.9zM705.5 243.0L703.5 242.8L704.0 241.0L705.2 241.2zM627.3 291.7L626.6 290.0L628.0 287.8L629.6 289.1L631.6 291.7zM593.9 204.5L596.0 203.3L596.9 206.2zM654.7 113.3L656.6 114.3L656.8 115.9L651.8 116.0L652.9 114.4zM743.0 250.8L741.3 251.5L740.0 251.0L741.1 248.8L743.1 249.0zM598.2 221.7L599.9 219.3L603.6 220.0L603.5 222.2L600.6 223.5zM715.0 143.4L716.9 145.2L715.1 146.1L712.6 144.2L712.5 142.8zM620.8 274.9L620.2 272.8L623.4 272.5L624.9 274.7zM661.0 164.4L661.7 165.4L660.9 167.3L658.8 166.3zM584.5 166.5L586.2 166.3L585.1 168.2zM696.2 276.6L694.4 276.3L695.3 274.3L696.8 275.5zM615.9 255.3L616.0 252.9L619.0 252.5L619.2 256.3zM637.2 238.5L636.6 236.1L638.8 236.1L638.8 238.0zM683.5 155.1L684.9 157.4L683.6 158.4L681.9 156.7zM685.8 258.7L683.3 257.5L684.8 254.6L688.2 256.0zM699.6 271.3L696.9 270.5L697.8 268.0L700.6 268.1zM586.2 232.6L588.0 230.4L588.8 234.5zM632.2 136.3L634.9 137.6L631.6 139.3zM684.0 222.6L680.8 223.2L681.8 219.9zM674.9 284.3L672.6 282.8L673.9 280.7L676.2 282.7zM667.8 191.7L668.5 195.7L663.9 194.7z"/><path fill="#e8d6b8" d="M594.9 148.0L598.8 147.7L595.3 150.4zM574.7 187.9L575.3 186.6L576.2 186.9L575.8 188.7L574.7 189.0zM637.3 262.7L636.6 260.8L638.9 261.4zM664.7 169.9L667.3 172.7L665.3 173.8L663.1 171.9zM651.3 235.1L650.1 233.1L651.1 232.3L652.8 233.3L653.4 234.2zM748.7 210.6L747.6 212.7L746.2 211.6L747.4 209.2zM618.5 181.8L620.8 180.7L621.8 183.6L618.7 184.1zM752.1 173.6L751.3 177.0L749.6 175.3L749.3 171.4zM749.6 170.4L749.7 171.7L748.1 170.9L748.5 168.6zM675.2 241.8L673.3 240.1L676.0 237.4zM651.2 216.3L651.8 213.6L654.3 214.3L653.9 216.3zM615.0 246.1L615.7 242.7L617.7 244.5zM715.9 168.3L715.9 170.1L714.3 169.8L714.5 168.0zM703.0 151.1L704.7 153.3L700.9 154.6L700.4 151.5zM735.2 234.6L732.9 235.3L734.3 231.2zM627.7 253.3L627.6 251.6L629.4 251.9L629.2 253.1zM740.5 256.6L736.1 257.5L739.8 254.5zM694.2 274.3L692.2 272.9L692.9 272.0L695.1 271.6zM703.3 224.8L700.5 224.9L699.2 223.7L702.9 221.9zM616.6 191.8L620.1 190.0L621.6 193.1L618.6 194.2zM701.8 204.3L699.0 205.7L697.6 201.6zM709.0 131.3L709.7 132.3L708.0 132.6L707.2 131.3zM646.4 118.9L648.5 120.4L646.8 122.6L642.7 120.8zM665.3 190.1L667.4 191.5L664.7 193.6L662.8 191.5zM640.4 265.2L638.3 263.9L641.6 262.8L641.9 264.8zM689.2 152.3L689.4 154.3L688.6 155.1L687.5 154.6L687.2 152.6zM709.6 233.1L705.7 232.0L706.9 229.1zM636.4 202.0L638.4 200.8L639.3 202.4L637.7 203.0zM652.4 124.4L653.8 125.4L652.5 127.0L650.7 127.0L650.4 125.9zM694.9 290.4L692.7 290.5L692.9 289.8L695.0 289.1L695.5 289.5zM637.7 161.0L640.7 160.5L639.1 164.6L637.6 164.2zM681.1 186.8L681.4 189.1L679.7 190.6L677.1 189.1L679.2 186.5zM636.3 141.7L638.3 142.4L637.0 144.2L636.0 143.7zM624.4 160.7L627.3 161.4L627.8 163.8L627.0 166.1L623.8 163.7zM633.7 269.1L633.3 264.8L636.5 265.4L637.8 267.9zM572.9 223.6L574.2 222.0L574.4 224.0zM695.2 271.6L694.3 271.8L694.2 270.1L695.7 269.2L696.4 270.7zM608.4 230.0L608.2 227.2L610.7 228.2L609.9 230.2zM655.8 249.2L654.7 246.8L657.8 246.3zM725.3 175.0L724.2 176.1L723.2 175.9L723.2 174.1zM687.4 158.2L687.5 160.3L685.1 159.2zM578.8 185.0L580.8 183.4L581.3 185.4L579.6 187.6zM624.9 235.2L625.7 232.0L627.8 232.2L627.0 235.4zM715.3 175.9L714.0 180.0L711.5 177.5zM584.6 243.3L584.1 242.3L585.4 242.5L586.0 243.2L585.8 244.5zM714.0 246.1L712.5 246.9L711.9 245.4L712.9 244.7L714.0 245.4zM665.7 139.7L667.7 140.5L666.7 142.9L665.8 142.6L664.8 141.0zM728.8 178.2L727.2 181.7L725.8 180.6L725.7 177.3zM721.7 247.2L720.0 248.8L718.9 246.8L719.9 245.4L722.4 245.9zM581.0 194.7L582.2 193.0L583.8 194.1L583.9 195.7L581.5 196.8zM716.5 195.4L715.3 197.9L712.7 195.4L714.1 193.1zM632.6 199.3L635.2 196.4L636.8 201.0L632.6 202.8zM611.7 226.3L613.1 224.6L615.9 224.7L615.7 226.6L614.5 227.6zM680.2 205.8L677.7 208.9L674.6 205.6L677.4 202.6zM642.4 193.6L644.7 192.5L646.3 194.8L643.5 195.9zM647.2 259.2L644.7 257.0L648.0 254.7L649.0 258.5zM609.0 255.6L607.4 251.9L610.5 251.0L611.9 253.3L610.4 256.2zM662.3 241.7L660.2 239.1L660.6 237.0L663.4 237.2L663.6 239.2zM651.7 117.8L652.8 119.0L649.6 119.4zM597.2 264.0L597.2 261.9L598.9 262.8L598.8 264.9zM571.2 200.1L571.7 199.1L572.4 200.2L571.5 201.7zM602.1 187.6L604.1 186.7L605.2 187.2L604.2 189.2L603.2 188.6zM726.4 257.4L723.5 257.4L724.9 255.2zM626.6 216.9L628.9 215.3L629.6 217.8zM603.1 139.4L604.4 139.4L604.3 140.7L602.8 141.8L602.3 141.0zM673.9 234.9L670.8 233.5L670.4 230.0L672.9 229.6L675.5 232.3zM570.6 211.6L571.9 210.6L572.1 213.2zM683.7 225.9L681.3 224.6L684.1 222.6zM591.4 184.0L594.6 183.0L593.5 185.0zM737.2 211.1L735.7 213.1L734.1 212.5L734.2 209.8L735.8 209.4zM696.5 185.8L697.1 187.9L694.8 188.4L693.1 186.7L694.5 184.6zM648.8 125.2L649.8 126.3L648.5 126.6zM707.8 287.9L705.9 287.0L708.9 285.9zM582.3 190.7L583.2 190.2L585.9 190.4L584.9 193.4L581.7 194.6zM643.9 238.6L642.9 236.0L645.5 235.2L646.1 238.6zM678.1 270.6L675.0 269.1L676.5 266.9L680.3 268.3zM686.0 131.0L687.7 132.4L685.6 134.2L683.8 133.0L684.2 132.2zM675.0 254.4L671.9 252.3L675.3 250.8zM571.3 197.2L572.5 193.7L573.3 196.9L572.5 198.9zM734.8 255.1L733.2 255.3L733.5 253.5L735.3 252.5zM585.0 173.2L588.2 170.8L587.0 176.2zM686.6 204.4L683.3 207.0L679.0 204.0L682.4 202.2zM645.0 146.0L647.0 147.9L643.2 149.0zM621.2 254.2L619.8 251.4L624.2 251.3L624.9 255.3zM659.4 252.0L658.0 249.4L659.1 246.8L661.3 246.4L662.6 249.4zM572.8 184.4L574.1 183.6L574.0 185.7L573.0 186.7zM606.0 272.0L605.8 269.9L607.2 269.9L608.3 272.3zM671.5 244.0L667.5 241.4L673.9 239.6zM603.2 140.6L605.5 140.8L603.1 143.8zM640.0 140.1L643.8 142.7L639.2 145.2zM675.9 281.6L673.8 280.9L676.3 278.5L677.6 280.0zM719.3 192.5L718.7 195.2L717.1 194.0L718.4 191.7zM738.4 244.0L736.1 246.1L734.9 244.6L735.5 242.1L737.1 242.5zM608.6 269.7L608.3 267.2L610.6 269.1zM700.6 225.2L698.4 228.0L695.5 224.8L697.7 222.7L699.7 222.3zM700.6 219.8L697.5 220.9L698.9 216.7zM596.9 248.4L597.1 245.0L599.1 246.4L599.4 248.4zM633.5 230.4L633.4 226.8L636.3 227.8L635.6 231.6zM675.4 219.3L671.9 218.3L674.3 215.5zM594.4 211.5L596.5 210.8L597.1 213.9zM626.5 257.7L626.4 255.4L630.5 255.1L630.0 257.8zM682.4 220.2L679.4 220.2L679.5 218.6L682.0 217.9zM609.7 190.0L611.4 189.1L612.8 191.3L610.3 192.3zM602.8 273.3L601.0 269.6L603.9 269.7L605.4 274.1zM609.6 252.1L609.8 249.3L611.3 249.8L611.1 252.3zM735.2 233.7L733.0 235.0L731.0 233.6L733.8 230.9zM715.2 160.3L715.7 163.6L711.8 162.7L712.2 160.3zM669.0 162.5L670.0 163.5L668.8 164.5L667.0 163.2zM730.1 244.4L727.4 245.5L729.3 243.1zM591.5 259.4L590.8 257.6L591.8 257.3L593.3 258.4L592.6 259.5zM588.9 257.2L589.7 256.0L590.6 257.4zM697.2 226.7L694.6 227.6L692.2 224.7L695.6 223.0L696.9 223.5zM679.1 192.0L678.5 195.1L677.0 192.9zM658.8 249.9L657.6 246.8L661.8 246.1zM576.7 196.1L579.2 193.5L581.3 195.9L579.3 198.3zM625.7 291.3L623.7 289.1L625.8 288.4L627.8 291.8zM605.2 136.2L609.2 136.1L608.7 138.9L604.0 140.5zM714.6 213.7L713.5 215.2L711.7 213.0L713.7 211.3zM693.3 131.1L693.2 133.0L691.0 131.6zM699.5 193.6L697.6 196.5L694.5 195.0L696.4 191.2zM667.7 141.3L669.0 142.4L668.1 143.5L666.4 142.9zM674.2 266.5L672.2 263.9L675.2 262.9zM706.3 142.7L707.6 143.8L706.1 144.5L705.0 143.8L705.5 142.6zM608.6 133.5L609.6 133.5L608.9 134.6L607.4 134.7zM639.5 167.0L643.0 167.7L641.2 170.6L638.3 170.0zM671.3 149.3L672.5 150.7L670.2 150.9zM606.8 155.3L610.3 154.4L610.0 156.8L605.9 158.0zM593.0 149.3L594.6 148.2L594.1 150.2L593.0 150.7zM727.4 164.0L726.7 166.2L725.3 165.7L725.4 163.4zM691.3 152.3L692.2 155.3L689.8 154.1zM637.0 190.0L637.8 189.3L639.4 190.0L638.1 191.3L637.0 191.0zM721.0 175.9L720.8 178.1L717.1 179.3L716.8 175.4L718.9 174.6zM595.1 212.7L597.0 211.4L598.4 213.9L597.7 215.9zM610.6 162.7L612.1 162.0L612.0 164.2L610.6 164.0zM627.6 254.5L626.3 250.6L630.3 250.4L630.4 254.0zM741.9 253.1L740.1 255.3L739.4 251.4L743.1 249.7zM603.1 260.7L603.1 258.4L604.6 257.5L606.3 258.6L605.8 260.6zM635.8 179.6L637.7 180.0L638.0 181.5L637.0 182.7L635.3 181.4zM717.6 278.3L715.3 279.5L714.5 277.0L716.6 275.2L718.6 277.2zM659.9 127.4L661.9 127.8L660.6 129.4L658.8 129.6L657.9 128.3zM713.7 241.3L711.6 241.6L711.1 239.4L714.3 238.9zM729.3 264.4L727.0 265.7L726.1 262.4L730.3 260.9zM715.8 260.0L712.9 259.3L714.9 256.9zM681.2 244.5L678.5 242.7L679.6 241.1L683.7 241.8zM694.9 172.0L695.8 173.2L694.1 174.1L692.9 173.7L693.3 171.5zM634.6 254.5L633.4 252.0L634.7 250.9L636.5 252.8L636.4 254.1zM653.8 123.8L656.7 125.3L652.9 128.5L651.1 126.7zM616.1 246.8L616.9 243.9L618.7 245.7zM601.1 265.5L600.4 263.9L602.6 264.3L602.4 265.9zM648.8 177.8L651.0 177.8L650.4 180.2L647.2 179.6zM645.7 289.9L642.7 288.3L642.7 285.9L646.5 286.0L648.0 288.7zM691.1 263.1L688.9 262.6L689.2 261.1L690.5 260.7L692.1 261.4zM624.4 289.2L623.6 287.3L625.3 288.7zM633.5 270.4L632.4 268.9L633.6 267.3L635.3 268.6L634.7 269.8zM637.8 293.0L636.4 290.9L637.5 290.0L640.2 291.1L640.9 292.7zM657.3 138.9L658.8 141.3L655.3 141.7zM627.2 169.3L631.5 171.9L627.7 173.3zM742.3 165.0L742.6 167.2L741.0 166.3L741.3 164.4zM660.3 189.6L662.4 191.9L659.0 192.5zM617.7 252.9L617.3 251.1L618.0 250.5L619.2 251.9L619.4 253.5zM617.2 170.6L619.4 170.7L619.5 171.8L617.4 172.4zM674.5 237.8L673.5 237.7L673.1 235.4L675.1 234.7L675.9 236.4zM714.7 204.2L713.4 207.3L711.1 204.7L712.1 203.3zM599.3 235.7L600.4 232.0L602.6 231.4L603.5 235.2L601.9 236.2zM638.1 222.9L638.4 219.7L642.3 220.7L641.6 222.2zM634.3 291.2L632.5 289.0L634.7 288.8L636.0 290.8zM649.3 190.9L650.7 191.4L652.4 193.2L650.2 194.7L649.3 193.2zM587.4 261.0L586.5 257.7L590.2 259.5L589.1 261.8zM590.5 211.8L591.7 209.5L594.3 211.2L591.6 213.8zM675.9 247.8L672.6 245.1L676.4 244.9zM676.3 236.4L672.2 234.6L677.1 232.5zM570.2 216.7L570.5 214.2L572.3 214.9L572.0 217.0L571.2 217.9zM656.0 255.6L652.8 252.6L656.8 251.8L657.6 254.4zM702.9 203.1L701.5 206.5L697.3 204.2L699.4 201.7zM703.9 285.3L700.8 284.9L702.9 282.2L705.5 283.0zM701.3 252.5L698.0 251.8L699.5 249.9zM748.8 240.6L747.2 242.8L746.3 240.1L747.1 238.5L749.0 237.3zM729.3 171.3L728.9 173.8L725.6 172.7L726.6 169.3zM728.8 206.4L726.5 207.6L726.2 203.8zM673.6 180.0L674.9 182.9L672.7 184.7L670.4 181.0zM636.8 127.2L638.4 127.9L639.2 130.0L634.9 131.1L634.5 128.9zM601.5 199.1L605.2 197.8L605.4 202.2zM595.7 187.7L597.0 185.3L599.2 187.6L597.9 189.9L595.2 190.0zM590.3 265.1L589.4 262.9L591.6 263.4L592.6 266.5zM601.0 210.6L603.7 208.0L602.8 212.4zM626.5 189.9L628.1 189.7L629.5 190.7L629.0 191.9L627.3 192.3zM654.1 158.2L656.9 159.7L655.7 160.7L653.7 160.0zM669.0 249.2L664.4 246.6L665.8 244.7L669.7 244.4L671.9 246.8zM754.6 184.7L754.3 186.2L753.5 185.3L753.9 184.2zM701.4 263.7L699.7 263.2L700.2 261.1L702.0 261.9zM718.5 219.5L715.7 221.5L716.4 217.2zM650.3 183.0L653.7 183.3L653.4 186.8L649.8 186.6zM703.7 226.2L701.5 227.7L700.6 224.5L702.5 223.6zM604.4 178.4L608.2 176.7L609.5 179.6L605.4 181.9zM736.0 195.4L733.7 197.8L732.2 197.2L734.0 193.3zM640.0 264.1L638.4 260.4L639.6 259.0L643.3 260.5L644.2 263.3zM725.8 155.7L725.5 158.5L724.0 159.0L723.5 155.3zM728.5 265.5L726.6 265.6L727.0 263.1L729.0 262.2zM630.0 222.5L630.1 218.3L634.8 220.0L633.4 223.3zM697.1 291.6L695.7 291.6L696.4 290.0L698.3 290.7zM683.9 158.2L684.6 162.6L681.3 160.6zM607.8 156.4L612.0 157.1L608.6 161.1zM696.7 261.7L693.6 261.2L696.3 259.0zM736.9 265.0L735.2 265.6L736.0 263.9L737.0 263.5zM635.3 130.0L639.6 130.9L635.4 132.7zM651.0 145.3L651.9 146.4L649.3 147.1zM645.1 203.6L650.5 201.4L648.2 206.6zM752.8 222.7L751.2 223.9L750.7 222.3L751.8 220.6zM699.6 128.9L699.5 130.1L697.1 129.5zM666.9 251.4L665.6 248.6L668.0 249.0zM688.4 247.0L686.5 246.5L687.2 244.5L689.0 244.6zM729.0 172.3L728.5 176.2L726.2 175.8L725.1 173.4L726.8 172.1zM708.2 225.7L706.9 227.3L705.2 225.6L705.1 223.9L707.8 224.0zM673.2 130.6L675.8 133.6L672.9 135.1L670.0 133.1z"/><path fill="#6e604a" d="M599.1 205.0L601.3 202.2L603.4 204.8L600.6 207.5zM656.7 195.1L659.5 195.8L659.5 198.4L656.1 197.9zM722.2 140.4L722.2 143.3L719.9 141.1zM673.2 190.5L672.6 192.5L670.2 192.0zM714.3 166.6L715.0 169.5L712.1 168.9L711.8 166.4zM735.0 257.4L732.8 257.9L734.9 255.1zM712.9 132.3L714.4 133.8L712.9 134.5L712.1 133.7L711.9 131.8zM713.9 196.0L712.9 197.5L711.6 196.5L712.8 195.2zM721.9 242.5L718.3 241.8L720.7 238.9zM718.7 169.6L718.2 171.6L716.5 169.3zM750.4 177.8L750.2 179.4L748.8 177.9L749.5 176.8zM706.5 159.8L707.8 161.6L706.3 162.8L704.3 160.6L704.9 160.0zM685.7 205.6L685.1 207.7L682.8 207.2L683.4 205.5L684.1 204.5zM659.3 207.2L661.5 205.2L662.8 208.3L661.4 209.7zM579.3 185.5L580.2 184.4L580.8 185.3L580.1 187.0L579.5 186.6zM718.3 215.0L717.6 216.5L716.5 214.8L717.8 214.1zM685.5 260.0L683.7 259.2L685.8 258.4zM700.5 124.6L701.1 125.5L699.0 126.1L698.6 124.2zM613.9 219.0L615.7 216.9L617.1 218.3L616.1 220.7zM659.3 243.0L658.2 241.7L658.4 239.4L660.5 238.9L660.4 242.0zM681.5 300.4L679.5 299.6L682.1 298.0L683.9 298.7zM640.7 188.1L642.5 187.5L642.4 189.2L641.1 189.4zM697.5 194.9L697.0 196.3L695.2 195.3L695.7 193.9zM606.4 228.1L606.6 226.4L609.2 226.1L610.3 227.4L607.5 228.7zM627.2 231.8L628.3 229.8L629.9 231.3zM623.5 214.0L625.3 211.7L626.5 213.2L626.4 216.0zM660.4 165.8L661.2 166.5L660.7 168.1L659.0 166.7zM578.2 216.3L578.5 214.6L579.8 215.4L579.1 217.3zM684.3 144.4L685.5 147.1L683.9 148.2L681.9 148.3L681.2 144.9zM708.6 151.9L708.5 153.4L706.8 152.4zM731.5 237.6L730.7 238.6L729.5 237.5L730.5 236.2L731.4 236.8zM657.6 171.3L659.4 172.8L658.9 174.2L656.9 175.9L655.4 173.6zM669.2 270.4L667.7 269.5L667.9 268.2L668.9 268.4L669.5 269.3zM706.6 181.1L705.6 184.2L704.1 182.2zM642.2 268.7L642.0 267.5L642.7 266.8L644.2 267.2L643.9 267.9zM627.1 285.9L626.1 284.9L627.3 284.0L628.6 284.6L628.7 285.4zM635.4 236.9L635.6 233.7L637.1 233.9L637.0 236.9zM731.7 160.4L731.5 161.7L730.4 160.6zM657.8 277.7L657.2 276.1L659.1 276.2zM680.3 196.7L678.0 199.2L676.3 199.2L676.3 196.3zM630.1 202.8L630.9 201.2L632.5 202.1L632.8 204.5L630.8 204.1zM732.4 264.1L730.3 265.0L731.0 263.1L732.2 262.4zM705.7 217.2L703.6 218.9L702.0 216.8L704.0 215.2zM582.1 184.1L583.2 183.0L584.6 183.7L583.3 186.0L582.0 186.2zM701.3 141.3L702.2 143.3L700.2 143.2L700.0 142.2zM702.1 292.0L699.7 292.0L701.0 291.1L702.9 291.2zM701.6 130.2L701.9 131.2L700.5 130.5zM637.3 288.6L636.8 287.0L638.2 288.1zM599.9 185.0L601.5 183.9L602.0 185.0L601.0 186.5zM719.8 217.8L718.4 218.4L717.9 216.4zM586.4 223.0L587.1 221.5L587.7 222.6L587.2 223.4zM650.2 206.5L652.5 205.5L652.4 208.2zM686.8 268.1L684.9 268.2L685.1 265.3L686.4 264.1L688.6 266.4zM689.4 132.6L691.1 134.0L689.0 134.4L687.8 132.8zM674.0 268.7L671.2 266.7L672.5 265.5L675.1 267.3zM649.8 129.3L652.2 131.0L648.8 133.5L647.6 132.2zM599.8 178.9L600.6 178.0L601.4 178.7L601.0 180.2L599.6 180.0zM707.0 226.6L704.1 228.5L703.7 224.9L706.3 225.2zM611.2 179.1L612.2 179.1L612.6 181.0L611.6 181.8zM690.3 236.1L688.6 236.2L688.6 235.0L690.2 234.7zM589.5 259.8L589.7 258.8L590.6 258.5L591.9 260.4L591.0 260.8zM652.2 252.3L651.6 250.5L653.4 249.3L654.6 252.0zM746.9 217.9L745.1 218.9L743.7 217.4L745.3 215.4zM613.6 260.4L613.6 258.9L614.7 258.3L616.3 259.7L616.0 260.9zM726.5 186.5L726.0 188.5L724.3 189.1L723.3 186.3L724.4 185.1zM642.7 206.6L646.4 205.1L645.1 207.9zM640.8 154.8L642.0 155.2L641.5 157.2L640.1 156.6zM629.2 165.2L632.0 165.7L629.1 168.6zM630.1 200.1L631.4 199.7L632.2 200.5L631.9 201.1L630.5 201.4zM716.9 169.7L717.6 172.8L715.5 173.1L714.1 172.2L715.0 169.4zM681.1 158.3L683.3 161.0L681.2 162.1L679.8 159.8zM571.0 192.5L572.4 189.2L574.2 191.4L573.0 193.3L571.5 193.8zM675.7 196.3L674.7 199.0L672.8 197.5zM707.6 280.8L706.2 280.4L707.5 279.1zM587.1 242.9L587.3 241.6L589.4 242.9L589.2 244.3zM658.2 163.4L660.5 165.6L658.8 166.4L657.0 166.0zM716.7 175.5L716.4 178.2L714.3 178.2L712.9 176.9L715.3 174.3zM691.1 287.1L689.0 286.7L690.3 285.3L691.4 286.0zM612.0 173.1L614.7 172.9L614.8 174.6L612.3 175.0zM637.1 256.7L635.7 254.5L636.6 253.7L639.5 254.2L638.6 256.0zM614.4 178.9L615.5 178.9L617.0 179.8L616.7 181.7L613.8 181.2zM654.0 153.6L655.6 154.6L654.9 156.0L653.0 155.5zM670.6 239.2L669.2 236.9L670.6 234.4L673.5 236.3zM707.7 237.5L706.5 238.0L705.5 236.2L707.6 234.9zM647.2 166.7L649.2 167.1L649.0 169.6L646.5 169.3zM596.3 246.1L596.6 244.4L598.1 245.2L598.1 247.4zM729.0 245.0L726.5 244.7L728.5 241.7zM600.5 216.3L601.6 214.9L603.0 216.8L602.2 217.9zM581.4 246.0L582.7 242.8L583.7 246.3z"/><path fill="#4a4034" d="M674.7 249.6L673.6 248.0L675.4 247.5zM738.2 253.1L736.1 254.4L736.1 251.5L737.4 251.3zM688.1 164.2L688.7 165.6L686.8 166.4L686.5 165.1zM702.4 131.7L703.6 134.2L700.3 132.9zM622.2 216.4L623.2 213.6L626.1 215.3L624.7 218.1zM650.8 198.9L652.0 198.8L654.1 199.5L652.7 202.0L650.9 200.4zM723.6 264.6L722.9 265.0L722.6 263.6L723.4 263.1L724.0 263.6zM602.7 168.1L604.9 167.3L605.8 169.8L602.8 170.3zM668.6 195.4L669.1 196.9L667.7 198.8L666.3 198.4L665.5 195.9zM685.1 194.4L684.3 196.5L683.1 195.6L683.2 194.4zM737.4 196.7L736.7 197.4L735.9 196.4L736.4 195.6zM675.1 153.1L675.7 155.6L673.5 156.1L672.3 154.8zM698.6 140.5L699.0 142.5L697.3 141.3zM651.8 273.3L650.5 271.2L651.5 269.8L653.6 269.3L653.3 272.2zM624.7 156.6L626.1 156.4L626.2 157.3L625.3 158.2L623.8 157.5zM699.3 257.9L697.2 258.5L697.0 256.3L699.2 256.2zM716.0 243.9L714.1 245.1L713.4 243.3L713.9 242.0L716.1 242.3zM585.6 209.2L587.2 207.5L587.6 211.0zM573.7 201.9L574.1 200.2L575.0 200.7L574.9 203.2L574.2 203.1zM647.0 188.1L650.5 188.5L649.8 191.5L647.7 192.1zM597.3 156.4L598.8 156.3L599.4 156.7L598.4 158.0L597.1 157.6zM713.9 241.6L712.6 241.1L713.6 239.5zM695.7 238.0L693.3 238.1L695.1 236.4zM653.1 280.0L652.3 277.1L655.1 276.8zM736.3 246.9L735.8 247.7L734.7 246.5L735.8 245.9L736.4 245.9zM585.2 244.0L585.8 241.5L587.2 244.4zM644.7 147.8L648.0 150.1L643.3 151.1zM639.8 261.5L638.6 259.3L640.1 258.3L641.6 260.1zM697.6 193.4L696.0 196.7L693.1 194.7L694.1 192.7zM613.1 254.0L612.0 251.1L614.7 252.4L614.4 254.2zM588.9 249.7L588.9 247.2L591.5 247.2L592.5 250.0L590.9 251.1zM633.0 283.9L632.0 282.7L633.1 281.6L634.6 282.6L634.9 283.6zM629.3 122.3L630.9 122.5L629.2 123.9L628.0 123.7zM722.6 191.6L721.2 193.2L719.6 192.7L720.5 189.7zM712.7 239.9L711.4 240.6L710.8 239.4L711.6 237.7L713.3 237.8zM668.9 269.0L666.1 266.9L670.4 266.4zM598.0 202.4L599.7 201.5L600.2 202.3L599.4 203.4zM604.1 276.9L603.9 276.3L604.7 275.4L605.7 276.4L605.7 277.3zM633.5 255.6L632.6 252.0L635.9 254.5zM744.9 228.0L742.6 230.6L742.3 227.9L744.3 226.2zM588.2 231.7L588.0 230.0L589.4 230.8L589.4 232.3zM614.6 286.1L613.9 284.9L615.9 284.9L616.4 285.9zM577.5 182.4L578.8 181.3L579.4 181.6L579.1 183.7L577.5 183.7zM756.8 223.3L756.1 223.8L755.7 222.2L756.5 221.2zM631.5 274.5L630.4 272.9L631.9 272.6L632.4 274.3zM669.5 291.8L668.7 290.7L669.9 289.9L670.8 290.5zM615.0 204.1L617.8 202.4L616.9 204.7zM671.9 297.5L671.2 296.8L670.5 295.4L673.6 294.9L674.7 296.0zM599.7 148.3L601.2 148.0L601.6 148.7L600.4 149.9L599.8 149.6zM736.9 243.8L735.2 244.6L735.3 243.0L737.5 241.5zM715.0 259.5L713.8 259.5L713.6 258.2L715.3 257.6zM646.6 138.8L647.2 139.2L647.0 140.1L645.8 140.3L645.2 139.7zM745.4 245.3L743.3 245.3L745.0 242.3zM742.7 171.1L742.5 172.5L741.7 172.5L740.9 171.2L741.6 170.2zM706.4 225.1L705.2 225.8L704.2 225.5L704.7 223.8L705.9 223.1zM629.1 218.1L630.3 216.3L633.8 217.5L631.6 220.2zM624.5 283.2L623.9 282.0L626.0 282.9zM601.2 216.4L602.3 214.3L604.4 214.5L604.1 216.8L603.0 217.3zM610.5 262.4L611.4 259.5L613.2 262.3zM634.7 279.1L634.8 277.0L636.1 277.8zM667.0 252.4L665.1 251.6L664.0 249.8L667.7 249.9L668.4 251.5zM742.1 238.9L741.5 239.6L740.6 238.8L741.1 237.2L742.0 236.6zM648.3 125.8L650.5 127.2L648.0 128.0zM672.5 292.7L671.4 291.5L671.0 290.2L673.2 289.9L675.2 291.7zM744.9 161.6L744.9 164.0L743.7 163.1L743.8 161.3zM672.2 236.4L669.4 234.3L672.5 233.5zM652.9 219.8L654.1 215.5L656.0 217.5zM637.7 148.6L640.2 149.7L637.0 151.4zM623.3 289.6L622.3 288.5L624.2 288.6L624.8 289.3zM616.2 269.9L615.0 268.4L617.4 268.1L617.3 269.7zM652.8 216.3L652.8 214.3L654.9 214.3L654.2 216.0zM708.8 181.6L708.9 183.7L706.2 184.1L705.6 181.4L707.0 180.5zM616.9 133.2L620.7 132.6L619.9 134.7L616.7 134.5zM680.1 147.0L681.0 149.2L678.9 149.3zM734.9 261.6L732.3 261.8L734.7 258.0zM600.9 234.2L602.0 232.1L604.0 235.3zM602.6 142.3L604.5 141.9L604.1 143.2L602.2 144.5zM618.1 227.8L620.5 225.7L622.2 229.3zM671.3 274.3L670.6 273.4L671.6 272.0L672.8 272.8zM652.5 133.6L654.8 136.3L652.0 135.7zM747.4 172.2L747.2 174.2L745.3 172.7L745.6 170.9zM603.8 228.1L605.0 227.0L605.6 228.9zM707.8 182.4L707.4 185.3L705.4 183.0zM629.3 280.0L628.6 278.8L630.0 277.4L632.3 278.5L632.1 279.8zM607.9 268.3L607.9 266.4L609.4 267.3L609.9 268.6zM708.3 132.0L709.1 133.5L707.9 133.6L707.3 132.3zM571.7 220.4L572.5 219.1L573.5 219.4L572.7 222.4zM718.1 271.1L716.3 271.7L716.3 269.4L718.5 269.1zM606.1 168.9L608.4 168.4L609.0 170.6L607.1 171.9L605.5 172.2zM643.8 247.2L643.7 244.4L645.4 244.3L646.3 247.1zM658.0 276.7L656.2 273.6L658.7 272.2L660.8 274.4zM618.4 211.4L619.8 210.4L619.6 212.5zM741.4 159.5L742.1 160.8L740.4 160.6L739.8 159.4L740.6 158.3zM620.0 213.9L620.5 213.3L621.4 213.0L621.9 214.4L621.0 214.8z"/><path fill="#b89480" d="M691.6 187.1L691.2 190.6L689.4 188.4zM681.6 293.2L679.3 292.2L680.5 290.9L682.5 290.0L683.9 292.0zM733.9 205.7L733.9 207.3L731.7 206.9L732.1 205.3L733.2 204.8zM728.2 222.2L725.5 223.2L725.7 219.0zM737.3 236.4L735.3 238.5L735.4 235.8L736.9 235.0zM641.1 159.4L644.8 160.9L643.5 163.4L640.8 162.8zM592.7 182.6L594.1 181.3L594.9 182.6L594.8 183.7L592.6 184.7zM706.6 227.3L704.4 227.5L704.9 226.0zM686.3 118.6L687.3 120.1L686.3 120.3L684.6 119.3zM644.0 208.5L646.6 207.5L646.0 209.8zM595.0 267.0L594.7 265.0L595.6 265.3L597.4 267.0L597.3 268.1zM623.9 161.7L627.3 162.7L625.2 165.4L623.0 164.8zM641.9 234.1L642.7 231.5L644.2 230.9L645.3 233.9zM659.1 127.8L661.0 128.4L659.1 129.7L658.6 129.1zM756.1 195.1L755.3 196.3L754.6 195.5L755.3 194.1zM647.9 288.2L646.4 287.3L646.9 286.5L648.9 286.8L649.4 288.0zM630.3 122.2L633.3 122.3L631.5 124.4L629.4 124.3zM752.4 234.0L751.1 235.1L750.8 233.0L752.1 231.7zM637.9 171.3L641.3 171.3L641.4 173.8L639.8 175.1L638.3 172.9zM619.7 196.5L621.4 195.3L622.9 196.7L622.7 198.5L620.2 198.4zM588.0 221.5L588.9 219.6L590.5 221.2L588.8 222.9zM641.8 163.5L644.4 164.9L642.1 166.5zM588.4 172.6L589.6 172.4L590.0 173.1L588.8 174.0zM676.6 295.9L674.6 295.0L676.0 294.1L677.9 295.0zM709.6 255.6L707.4 255.6L707.4 254.2L709.4 253.7zM704.2 166.1L704.5 169.3L702.5 168.6L701.6 166.1zM596.9 197.8L598.7 196.5L598.6 198.7zM623.0 178.9L624.0 178.8L625.1 179.9L623.9 180.8L622.6 180.2zM596.1 169.0L598.6 169.6L597.0 172.7zM706.9 288.0L704.9 287.8L705.6 286.1L707.2 286.1zM603.6 278.2L603.8 276.5L605.4 278.5zM686.8 243.9L684.4 244.6L685.4 242.0L686.8 241.9zM597.2 158.6L598.2 158.4L598.2 160.2L596.9 160.3zM685.0 183.9L683.7 188.2L680.9 186.7zM725.7 187.6L724.6 190.0L723.0 188.3L723.4 187.0zM619.2 188.7L621.8 187.5L623.0 189.5L619.5 191.3zM702.3 236.1L700.0 237.2L699.3 235.5L700.2 234.5L701.8 235.2zM669.2 246.1L668.4 244.1L670.6 243.8zM635.6 132.0L636.5 132.8L635.6 134.4L634.3 133.8zM643.7 257.4L642.5 256.0L644.2 255.8L645.2 257.4zM675.5 249.0L674.5 248.3L674.3 247.6L675.4 247.0L676.5 247.6zM718.2 208.0L716.6 208.8L717.2 206.8zM695.3 222.8L692.8 223.4L692.8 220.9L693.9 219.6zM698.5 164.2L699.3 165.6L697.9 166.9L697.2 166.0L697.3 163.7zM665.4 288.3L663.7 287.1L666.6 285.2L669.0 285.7zM687.0 286.9L684.4 287.4L684.3 284.4L686.2 284.1L687.8 286.0zM641.9 262.3L640.6 259.3L644.6 260.8zM577.1 188.2L578.4 186.4L579.5 187.7L578.5 190.2L577.3 190.0zM678.1 179.4L679.3 180.5L676.9 181.4L676.4 179.5zM604.3 177.0L606.3 177.1L605.5 179.6zM599.0 218.3L599.6 217.3L601.0 217.2L602.0 219.3L600.0 219.6zM700.5 283.8L697.4 284.0L697.3 282.3L700.7 280.5L701.7 282.3zM596.2 215.9L597.9 214.5L598.3 216.5zM721.9 207.0L720.7 209.2L718.5 205.9L719.3 204.7zM586.5 159.4L588.7 157.8L589.5 159.0L587.7 161.8L586.5 161.0zM745.1 198.5L745.1 201.7L742.7 200.3L742.9 198.3L743.9 197.0zM668.8 241.0L666.9 239.6L668.7 237.4L670.5 239.2zM668.7 278.2L666.7 277.0L668.5 275.8L669.6 277.0zM690.8 279.1L687.7 279.0L689.0 277.0L691.8 277.8zM667.2 294.0L666.3 293.0L667.0 292.0L669.5 292.9zM703.8 209.7L702.6 211.3L700.9 208.9L702.4 207.9zM587.7 169.7L589.7 168.8L591.2 170.7L590.0 171.9L588.0 172.0zM733.9 248.8L731.5 249.5L732.9 246.7zM635.5 278.2L634.0 275.4L637.3 277.3zM752.8 183.6L752.3 185.1L751.4 183.0zM746.2 222.4L744.1 225.2L743.4 223.2L743.8 221.2L745.1 221.0zM670.1 268.4L668.8 267.7L670.0 265.9L671.0 267.3zM755.6 214.8L754.8 216.2L754.1 215.1L754.9 213.4zM649.3 180.7L651.7 179.9L652.8 182.2L650.1 183.3L648.8 181.7zM644.1 193.3L644.8 192.8L646.0 193.9L645.5 195.2L643.5 194.8zM718.3 211.8L717.1 212.7L716.5 211.8L717.5 210.9zM743.1 252.8L741.4 254.0L742.0 251.4L744.0 250.0zM674.6 267.4L673.1 265.4L673.9 262.7L677.1 263.8zM658.5 132.7L659.6 135.2L657.5 136.4L655.5 134.8zM631.0 148.3L633.1 148.1L633.8 150.6L630.0 149.9zM708.9 290.1L705.1 289.9L708.9 287.8zM716.1 167.8L716.1 171.2L713.4 171.3L714.0 168.2zM659.3 254.3L659.0 251.6L661.9 252.2zM670.3 156.3L671.2 158.5L668.6 157.8zM624.8 164.8L626.7 164.2L627.2 166.5L625.9 167.3L624.3 166.6zM599.1 225.6L600.1 224.0L600.8 226.3zM639.4 260.8L638.6 259.3L639.4 259.2L640.7 259.9L640.7 260.9zM723.1 160.6L722.4 162.1L719.9 163.6L719.6 161.4L719.9 160.0zM651.3 197.1L652.9 196.9L653.7 198.6L651.5 199.6zM680.9 166.1L681.2 169.8L678.2 167.2zM638.3 178.8L639.9 178.8L640.2 180.5L638.2 180.1zM714.1 272.3L712.2 271.9L711.6 269.8L713.7 268.5L715.4 268.8zM682.8 154.9L684.4 155.8L683.3 158.7L679.5 157.7L679.2 155.7zM646.7 275.7L646.0 273.4L648.3 274.1zM610.7 134.7L614.0 134.4L610.4 136.7zM616.0 147.4L618.0 148.1L616.0 149.2zM647.9 150.1L651.7 151.5L648.7 154.1L646.2 152.1zM603.7 256.9L602.8 254.0L606.4 254.5L605.8 257.1zM719.0 161.8L719.6 163.5L717.3 162.7L716.7 160.6zM737.4 214.9L736.8 217.7L734.2 217.5L734.4 214.0L735.9 213.6zM723.1 162.5L722.4 165.4L720.3 163.0zM575.7 227.8L576.1 226.6L576.9 228.0L576.5 229.2zM610.9 177.5L614.0 177.2L611.8 179.8zM749.1 209.3L748.2 210.5L747.0 210.7L746.6 207.9L747.8 207.5zM651.1 125.0L652.6 126.1L651.6 127.7L650.2 127.9L649.8 126.2zM606.6 144.9L609.2 146.1L606.9 148.6zM627.8 234.5L628.7 231.4L630.9 233.6zM628.3 202.4L629.4 200.5L631.5 202.5L630.3 205.7zM581.6 198.8L582.5 197.1L583.5 197.7L583.1 198.9L582.1 199.6zM580.0 213.1L580.1 211.8L581.4 213.0L580.5 214.0zM702.6 209.9L701.5 212.0L699.3 210.5L699.1 208.3L701.2 206.9zM698.4 210.2L697.1 211.0L696.0 210.0L696.8 208.3zM713.6 251.9L710.9 251.6L711.1 249.7L713.9 249.6zM653.3 257.2L652.4 256.5L653.3 255.4L654.4 255.3L654.3 256.6zM606.2 257.8L606.7 256.7L608.3 258.2zM675.2 141.2L677.0 142.9L675.2 143.9L673.8 142.7zM678.3 121.4L679.1 122.4L678.0 123.3L677.0 122.4zM715.9 226.9L712.7 228.6L712.3 226.7L714.4 224.9zM723.6 178.3L721.9 181.0L720.9 178.4zM593.9 245.0L594.5 242.6L595.3 242.0L596.6 244.6L595.5 245.5zM694.6 148.3L693.9 152.6L690.8 150.0zM696.6 242.4L695.4 243.0L694.0 241.3L695.7 239.9L696.8 240.7zM637.6 283.6L636.4 283.0L637.5 281.7L638.2 282.1L638.2 283.4z"/><path fill="#62563f" d="M614.0 202.2L615.4 200.7L616.9 202.1L614.6 203.6zM624.2 255.5L624.7 252.4L627.2 252.8L627.1 255.6zM734.3 252.7L732.7 253.5L732.7 251.0L734.8 250.0zM671.4 240.0L668.6 237.8L672.2 236.2zM681.9 241.7L679.1 240.7L679.7 237.2L683.0 238.8zM595.4 232.3L595.7 231.0L596.6 231.2L597.1 231.9L596.6 232.9zM718.4 200.3L715.8 201.4L716.6 198.6zM587.2 180.9L588.2 180.7L588.6 181.3L587.9 182.5zM703.5 193.5L702.5 196.0L700.2 193.9L701.9 191.8zM679.9 243.4L677.6 242.2L678.8 240.9L680.2 240.9zM691.9 167.0L692.5 169.7L689.7 170.2L689.7 167.0zM691.7 120.5L692.6 121.5L691.4 121.3L690.8 120.6zM665.9 143.1L667.5 145.7L664.8 146.6L662.7 145.4zM704.9 168.2L704.4 170.7L703.1 171.0L702.6 168.8zM660.9 283.7L658.4 281.3L662.5 281.5zM696.8 290.6L696.2 290.3L696.9 289.0L698.0 289.5zM670.4 268.4L669.1 267.8L669.9 265.4L671.8 265.7L671.9 267.0zM668.9 258.5L666.9 257.2L668.7 255.4L669.7 256.9zM677.5 300.2L675.0 299.2L679.0 298.4zM686.8 142.5L688.8 145.5L684.2 143.8zM672.1 238.1L670.5 238.0L671.4 236.0L672.9 236.8zM690.7 283.4L689.8 283.4L689.6 282.3L691.3 281.8L692.2 282.2zM674.5 260.2L673.3 259.9L673.2 258.3L674.8 257.4L675.6 259.0zM741.8 250.0L740.7 250.4L740.7 249.9L741.1 248.6L742.2 248.4zM606.6 154.1L608.4 154.3L607.1 156.0zM642.6 122.4L643.1 123.0L641.6 123.6zM702.3 285.0L699.3 285.7L699.5 283.2L703.2 282.9zM639.5 139.9L640.4 141.0L639.2 141.7zM626.6 264.9L626.3 263.2L628.7 264.2zM692.4 218.5L689.9 219.9L690.9 216.9zM610.2 200.3L611.8 197.6L613.6 200.4L611.9 201.6zM638.4 257.2L638.1 255.7L639.6 256.0zM661.4 255.6L660.5 254.5L661.3 252.9L663.2 254.4zM631.2 158.4L632.5 158.6L631.4 159.7zM623.8 162.4L627.0 162.3L626.7 165.1L625.0 164.6zM714.2 183.9L713.6 185.7L712.8 184.6L712.6 182.9zM742.4 226.4L741.5 228.0L740.3 226.1L741.6 224.4zM630.9 174.1L632.9 174.5L632.7 176.0L630.7 175.8zM682.5 201.7L680.2 204.2L680.3 200.9zM693.0 218.3L690.8 218.3L688.7 215.7L691.4 215.1zM707.4 203.0L705.4 204.6L704.3 203.1L705.2 201.7zM660.5 163.6L663.2 167.8L659.3 167.1zM598.6 274.7L598.5 273.5L599.0 273.6L599.6 275.1zM713.7 197.3L713.5 198.4L712.2 198.1L711.8 196.7L712.6 195.9zM621.4 182.1L622.8 181.4L624.0 185.1L622.1 185.4zM699.6 131.0L700.2 132.6L698.8 131.9zM623.8 251.6L623.4 249.0L626.5 250.2zM642.1 212.2L643.2 210.0L645.6 211.9L644.0 214.3zM687.9 244.6L686.3 244.0L687.3 242.4L688.6 243.1zM677.2 253.6L675.4 253.1L676.0 251.7L677.1 251.4L677.4 252.4zM694.7 125.9L696.2 127.4L695.6 127.8L693.4 127.1L693.9 126.3zM709.1 205.3L707.7 207.0L706.7 206.7L706.1 204.8L707.8 204.9zM644.6 217.7L644.2 215.5L646.6 214.7L648.9 218.4L645.6 220.1zM714.8 214.4L713.8 216.3L712.0 215.2L712.0 214.2L713.8 213.3zM637.4 180.9L640.3 182.1L638.6 183.6zM635.7 205.7L636.7 203.1L639.1 204.5L639.6 206.3L637.6 207.0zM667.9 207.4L666.3 208.8L665.8 208.2L665.4 206.4L666.7 206.3zM585.7 214.7L587.1 212.9L589.5 215.7L587.1 216.9zM660.9 156.5L663.9 158.3L661.2 160.0L659.7 157.7zM645.2 164.6L647.0 164.8L646.0 166.2L644.5 165.6zM631.4 224.0L632.4 221.7L633.2 221.6L634.8 223.8L633.0 224.4zM641.9 164.0L645.4 164.7L643.6 166.9L640.1 166.4zM587.7 168.9L590.8 167.8L588.4 171.0zM725.6 232.7L724.7 233.2L724.3 231.7L725.6 231.1zM652.6 128.4L654.8 129.1L653.2 130.5L651.3 129.5zM670.6 267.0L667.9 265.9L669.8 264.2L671.4 265.3zM698.8 132.9L698.3 135.3L695.7 133.7zM615.3 217.2L615.8 216.0L616.8 216.5L616.6 217.7zM683.0 179.7L684.4 182.1L681.6 181.9L681.1 179.5zM695.6 268.5L693.6 268.5L694.0 266.7L696.3 266.9zM660.0 130.5L662.3 132.2L658.1 133.5zM720.3 228.2L719.3 229.1L717.2 227.2L718.1 225.2L719.9 225.5zM701.5 168.5L701.2 170.4L699.6 171.1L698.6 170.1L699.8 168.3zM741.8 231.4L739.7 232.9L739.5 231.2L740.9 230.2zM706.5 188.5L706.2 191.8L703.7 192.3L702.3 189.7L704.0 188.0zM753.4 178.5L752.9 179.9L751.6 178.5L751.9 176.7zM748.6 177.6L748.2 178.9L747.2 177.4zM619.3 129.1L623.0 128.0L622.9 130.2L620.0 131.2L618.2 131.4zM621.8 188.4L624.1 189.2L622.8 190.9z"/><path fill="#d4b0a0" d="M652.0 267.3L650.5 266.3L652.3 264.8L653.8 266.5zM624.5 224.5L624.9 221.9L627.2 222.0L628.8 223.7L626.4 225.7zM678.4 222.2L676.7 222.5L676.3 221.7L677.3 220.1L678.5 220.7zM736.3 217.2L734.5 219.1L733.4 217.2L734.6 214.9zM698.2 190.6L696.0 193.2L693.4 189.9zM612.0 133.4L613.9 133.6L612.6 135.1L611.7 134.7zM612.2 157.2L616.3 157.7L615.8 159.7L612.0 160.9zM663.5 290.9L661.8 288.0L665.3 288.2zM628.0 135.3L630.1 134.8L629.0 137.0L627.2 136.6zM671.2 143.8L672.0 145.2L671.1 145.6L669.6 144.7zM658.1 272.1L657.1 270.7L659.9 270.9zM628.3 185.0L630.4 185.5L630.9 186.6L629.5 187.4zM657.0 166.0L658.4 166.4L658.2 167.6L656.8 167.8L656.6 166.5zM593.7 168.1L595.4 167.0L596.1 169.8L594.5 170.1zM593.9 248.5L594.4 246.7L596.0 247.9L595.8 249.3zM703.8 233.8L702.8 234.3L702.1 233.4L704.1 232.5zM673.9 176.5L675.5 179.6L671.0 177.9zM602.9 187.7L605.1 187.3L606.1 188.6L605.1 190.6L603.5 191.0zM724.0 154.9L723.9 157.8L720.3 155.5zM613.2 270.8L613.2 269.0L614.7 270.0zM646.7 234.2L646.3 231.2L648.9 230.3L648.9 232.7zM607.7 145.3L610.4 145.6L610.6 147.7L608.0 149.4L606.3 148.7zM666.9 139.6L668.0 141.4L666.3 141.1zM630.6 283.1L629.8 280.4L633.1 281.9zM656.0 276.9L654.4 276.1L655.8 274.0L657.4 274.0L659.4 276.5zM585.0 208.8L586.1 207.0L587.1 209.1L585.8 209.9zM683.9 278.3L681.4 275.4L684.8 274.8zM629.9 223.4L631.0 222.0L633.4 222.7L632.5 224.3zM591.8 178.4L594.3 177.7L594.6 180.0L592.5 180.7zM627.5 195.5L629.1 194.1L630.3 195.4L628.3 196.5zM665.2 271.3L664.2 270.6L665.3 268.7L667.1 270.1zM573.4 185.1L574.5 183.7L575.3 185.2L573.8 187.0zM646.1 120.0L649.8 120.3L646.8 122.8L644.3 121.8zM603.8 192.4L606.2 190.5L607.2 192.9L607.1 195.0L604.7 194.3zM705.7 142.6L705.9 145.7L702.9 145.6L702.6 142.7zM641.2 224.8L641.4 222.8L642.1 222.2L643.4 223.2L641.9 224.9zM746.3 193.8L745.5 196.1L743.4 194.1L743.8 191.9zM726.3 234.8L723.9 235.3L724.5 233.1zM650.2 198.2L652.6 198.6L650.9 200.6zM636.1 138.8L638.1 139.6L637.0 141.1L635.6 141.0zM716.3 220.2L715.0 221.6L713.9 221.1L714.7 218.8L716.0 219.0zM595.3 195.8L596.3 194.2L597.8 195.8L595.5 197.6zM701.2 197.0L700.7 198.7L698.5 198.1L699.2 195.5zM605.1 277.3L604.0 275.3L606.4 276.0L607.5 277.9zM721.9 251.2L719.5 252.0L719.1 249.7L721.7 248.9zM700.9 153.5L701.9 156.9L699.6 156.3L698.3 153.3zM647.3 279.5L646.2 278.0L647.5 277.2L648.3 278.8zM656.8 287.7L655.2 286.7L655.8 286.1L658.0 285.3L658.3 287.3zM739.7 236.9L737.7 239.4L736.6 238.1L737.9 234.3L739.0 234.7zM700.8 268.3L699.7 267.7L699.5 265.9L700.4 265.5L701.6 266.0zM739.1 257.3L737.6 257.1L737.2 254.4L739.4 253.5zM653.7 243.3L654.0 240.1L657.1 241.0zM700.9 155.5L702.8 158.1L698.7 159.2L697.7 155.4zM683.5 146.0L684.6 148.7L682.7 149.3L680.9 147.0zM722.3 197.3L721.1 198.9L719.0 198.2L719.6 195.0zM632.7 277.6L631.3 274.6L633.5 272.9L635.9 275.7zM739.1 175.9L739.0 177.3L737.3 177.7L737.0 176.3L737.5 174.7zM705.9 225.8L703.6 226.5L702.8 224.1L705.4 223.3zM752.8 191.7L751.2 193.0L750.9 190.8zM638.9 201.7L639.4 201.0L640.9 201.3L641.0 203.4L638.6 203.4zM638.5 248.8L639.1 246.5L640.7 248.4zM597.6 181.1L600.7 180.3L601.2 183.1L599.0 183.1zM676.3 198.4L675.8 200.3L674.6 198.9zM638.3 194.8L642.1 193.6L642.0 197.7L639.1 198.2zM665.4 253.9L664.3 252.7L665.0 251.4L666.7 251.8zM727.2 169.7L726.8 172.1L725.1 172.0L725.7 169.1zM623.6 199.1L625.2 199.0L624.9 200.5zM651.1 216.2L652.6 214.1L654.1 215.5zM632.3 173.5L634.1 173.3L633.4 175.0L632.2 174.8zM616.3 274.0L614.7 272.1L616.9 271.8L618.3 273.6zM654.8 236.6L652.7 234.0L656.0 232.9L656.6 235.2zM727.8 214.8L726.6 217.0L724.5 216.1L724.7 214.1L726.1 213.6zM654.3 236.8L653.3 235.4L654.2 234.2L656.5 235.4L656.0 236.5zM648.5 240.8L647.9 238.9L649.7 238.4L650.4 240.7zM747.9 242.5L745.9 242.7L745.6 239.9L747.7 239.7zM724.9 235.5L721.6 237.1L723.1 233.7zM668.3 229.1L666.6 228.3L667.6 227.0L669.0 227.9zM753.5 217.0L751.6 218.6L752.1 216.3zM593.9 257.5L594.3 254.9L596.1 258.0zM617.7 281.9L617.1 280.8L619.6 280.5L620.2 282.5zM725.5 230.8L724.1 231.2L723.5 229.8L724.9 228.7zM723.7 206.2L721.3 208.2L719.2 205.0L721.5 202.6zM678.0 201.6L678.2 203.3L674.9 202.4L675.8 200.1zM715.3 165.9L716.0 167.0L712.7 168.9L711.7 166.6L713.1 164.6zM726.9 152.9L727.0 155.9L725.4 154.9L724.8 152.9zM640.5 223.9L641.1 221.9L643.5 221.3L642.8 224.8zM666.3 197.1L667.7 198.8L666.5 201.2L664.2 200.6L663.2 198.7zM670.9 278.4L669.7 277.0L669.5 275.5L672.3 275.6L673.8 276.9zM630.5 224.3L632.7 221.3L634.8 222.9L633.8 225.5zM618.9 141.4L621.2 141.2L621.4 142.9L618.4 142.9zM717.5 273.6L715.9 274.0L715.0 273.0L717.4 270.6L718.3 271.8zM603.5 162.1L605.6 161.1L605.5 163.9L603.7 163.4zM697.7 223.9L695.7 224.6L695.3 222.4L697.8 221.5zM660.9 157.7L663.2 157.7L663.5 160.3L660.1 159.8L660.0 158.7zM683.4 196.0L680.8 199.4L679.5 196.5zM614.7 265.1L614.3 263.2L615.5 263.3L616.2 264.7zM637.0 223.3L638.4 220.8L639.7 223.3zM619.4 190.7L622.4 190.0L621.1 193.3zM713.0 179.8L712.8 183.0L711.1 181.5L711.6 179.7zM719.1 265.3L718.3 265.7L717.6 264.5L718.6 264.0L719.7 263.9zM684.3 125.1L686.1 126.9L683.9 127.4L683.5 125.8zM644.6 135.8L646.4 135.7L646.0 137.7L644.1 139.2L642.8 137.3zM593.9 233.9L595.8 232.3L597.7 232.8L596.2 235.4zM654.6 256.9L654.2 254.4L655.7 255.0zM616.2 148.5L619.1 149.5L619.3 151.4L615.7 152.4z"/><path fill="#54483a" d="M625.9 190.2L627.2 189.1L628.7 189.8L627.5 191.7L625.9 191.5zM699.9 202.8L698.9 203.5L698.6 201.6zM686.7 196.3L685.3 197.7L684.8 196.4zM634.0 281.7L633.6 278.5L636.2 279.9zM675.0 205.9L673.5 206.9L671.7 206.5L673.6 204.3zM573.6 208.0L574.6 207.3L575.7 207.8L574.8 209.4zM706.0 135.0L705.9 137.1L704.5 136.9L703.1 134.9zM673.3 235.8L672.2 235.0L672.9 233.6L674.8 234.2zM697.7 189.5L695.4 191.8L694.3 188.8zM745.5 161.9L745.7 163.9L744.3 162.7L743.9 160.7zM578.7 213.9L579.5 213.0L580.6 214.0L580.1 215.6zM679.2 221.6L676.0 222.1L675.3 219.5L676.5 218.3L678.5 219.8zM733.7 267.4L732.4 268.3L732.1 267.5L733.0 266.2L734.0 266.2zM623.3 149.1L624.2 149.7L623.7 150.7L622.3 150.8zM631.0 143.2L632.1 144.0L632.3 145.3L629.9 145.2zM654.1 283.6L651.5 281.3L652.5 279.6L655.3 280.5L655.9 283.1zM710.5 198.6L709.2 200.3L707.0 198.9L707.8 197.5zM750.6 225.1L748.8 227.5L748.1 225.8L748.0 224.3L749.5 223.9zM639.7 217.5L640.0 215.8L641.6 216.4L641.1 218.2zM653.1 162.0L654.1 163.6L652.6 164.6zM689.2 139.8L690.1 141.0L688.7 141.2L688.1 140.3zM654.9 268.5L652.6 266.1L655.4 264.2L656.5 266.2zM731.8 208.0L731.5 209.6L730.1 209.2L729.9 207.2L730.7 207.0zM750.3 222.8L748.8 223.5L747.6 221.3L749.2 220.0zM646.4 171.7L647.4 171.6L646.9 173.4L645.1 172.7zM648.9 230.7L648.9 228.8L650.5 227.9L651.3 229.5zM603.8 142.7L606.1 141.7L606.5 143.6L605.3 145.1L603.3 144.8zM636.1 230.9L635.9 227.1L638.6 227.2L639.3 230.9zM721.7 235.5L720.6 235.9L720.1 234.6L721.4 233.8zM596.5 162.1L597.7 161.2L598.1 163.6L596.2 164.0zM576.7 234.6L577.1 232.7L578.4 233.3L579.0 235.5L577.8 236.5zM693.6 135.9L694.7 137.5L693.4 138.1L692.6 136.3zM730.6 196.7L729.4 198.1L727.9 196.7L728.9 195.6zM729.5 255.5L726.7 256.8L726.5 253.5L729.0 253.5zM726.7 168.7L727.0 169.8L725.2 170.8L724.4 168.4L725.4 168.1zM589.8 171.9L591.3 171.4L591.8 172.4L590.3 173.3zM730.4 214.3L729.0 216.6L727.8 214.1L729.1 213.4zM629.2 233.7L628.7 231.9L630.7 231.0L631.2 232.9L630.2 234.4zM734.2 239.3L732.0 239.6L733.5 236.6zM594.0 243.7L593.6 242.2L595.3 242.2L595.4 243.3L595.1 244.3zM705.2 137.7L705.6 139.6L703.7 138.2zM652.5 151.1L654.4 151.4L654.9 153.4L652.0 153.5L651.1 151.6zM658.0 191.7L660.2 192.9L658.7 195.2L656.3 193.5zM677.1 299.8L675.6 299.3L678.3 298.9zM632.3 254.5L631.8 250.8L634.7 252.9zM627.5 189.2L629.7 188.3L629.5 190.4L627.3 190.7zM687.9 297.3L687.1 297.3L686.5 296.5L688.3 295.8L689.3 296.7zM646.7 119.2L648.4 119.6L648.0 121.3L645.1 122.2L645.2 120.2zM673.4 281.9L672.3 281.6L673.4 280.4L674.7 281.2zM626.1 229.1L626.8 227.7L627.5 227.3L629.6 228.8L627.9 231.4zM748.5 234.8L747.6 235.0L747.1 234.3L748.6 233.0zM678.6 270.2L677.1 268.5L679.2 268.7zM691.2 256.6L689.3 254.5L691.4 254.0zM648.5 266.1L647.1 264.3L650.4 262.5L650.4 265.0zM662.9 236.5L661.9 234.3L662.3 232.8L664.6 232.9L665.0 234.5zM699.1 234.1L696.5 234.7L694.5 232.8L697.1 230.0L699.2 230.3zM602.1 232.1L603.0 229.7L603.9 230.7L603.2 232.2zM695.4 219.1L693.1 220.4L691.4 219.4L692.5 217.0L695.0 217.3zM594.4 259.9L594.7 258.9L595.7 259.2L595.7 259.9zM640.6 223.9L640.6 222.1L641.8 221.5L643.2 222.8L642.4 225.1zM647.0 236.2L646.5 233.8L649.2 233.2L648.9 235.3zM748.5 177.0L747.8 178.7L746.1 178.1L747.0 174.9zM724.1 242.8L722.5 243.1L721.6 241.5L722.4 240.0L724.1 240.2zM634.2 184.4L638.1 184.8L636.3 187.1zM634.0 198.2L635.6 197.8L635.4 199.7zM657.7 120.3L659.0 120.6L658.4 121.6L657.0 120.9zM612.0 238.5L612.8 236.3L614.3 237.6L614.8 239.8zM729.7 226.2L728.5 227.1L727.2 224.8L728.6 222.5zM634.9 148.9L638.5 149.3L636.0 151.7L634.0 150.2zM734.7 227.0L734.1 227.5L733.3 226.1L734.0 225.7zM671.5 133.4L673.1 134.4L672.2 135.1L670.9 135.2L670.1 133.9zM739.6 236.7L739.2 237.5L738.1 237.1L738.1 235.5L739.6 235.2zM716.3 172.2L716.2 174.0L715.0 174.1L713.6 172.1L715.1 171.3zM630.2 209.9L632.6 208.5L633.8 211.6zM728.9 193.8L728.1 195.8L726.8 195.3L726.9 193.3L728.5 193.0zM733.5 205.8L731.6 208.7L731.3 204.0zM627.9 282.9L627.6 281.9L627.8 281.0L629.9 282.1L629.5 282.6zM682.2 238.4L680.5 238.6L681.4 236.6L682.6 236.5zM608.1 230.8L608.9 228.6L611.0 231.5zM742.4 240.2L741.2 240.3L741.5 238.5zM642.7 244.1L642.5 241.4L645.0 240.8L645.2 244.2zM612.4 224.3L613.9 223.1L614.0 225.3zM622.4 204.1L624.2 203.2L624.0 204.4zM632.8 225.1L633.8 222.9L635.7 223.6L635.5 225.7zM715.3 159.9L715.1 161.5L714.2 160.4zM737.8 263.8L736.1 264.3L736.8 262.2L738.4 262.2zM702.8 192.6L702.1 194.1L701.5 192.0zM593.5 240.4L594.1 238.3L595.3 240.0L594.6 241.6zM706.7 126.6L707.4 127.6L705.2 127.9L704.2 126.4zM624.2 274.9L622.9 271.4L627.1 273.5zM678.1 286.2L674.9 285.3L677.1 283.0L679.1 283.5zM732.1 172.6L732.5 174.6L730.3 173.6L730.5 172.1zM691.6 286.2L689.1 285.1L691.7 284.2zM651.0 202.5L653.2 201.6L652.7 204.6zM721.0 207.8L720.0 210.1L718.5 209.0L718.3 207.3L719.6 206.3zM682.1 130.3L682.6 133.0L680.2 134.1L678.7 131.5z"/></g></g>
<circle cx="664" cy="207.5" r="93" fill="url(#sphshade)"/>
<path d="M547.3,91.2 h18 l-18,18 z" fill="#6a6c70"/><line x1="565.3" y1="91.2" x2="547.3" y2="109.2" stroke="#e8eaee" stroke-width="1.3"/>
<path d="M781.7,91.2 h-18 l18,18 z" fill="#6a6c70"/><line x1="763.7" y1="91.2" x2="781.7" y2="109.2" stroke="#e8eaee" stroke-width="1.3"/>
<path d="M547.3,324.6 h18 l-18,-18 z" fill="#8a8c90"/><line x1="565.3" y1="324.6" x2="547.3" y2="306.6" stroke="#e8eaee" stroke-width="1.3"/>
<path d="M781.7,324.6 h-18 l18,-18 z" fill="#8a8c90"/><line x1="763.7" y1="324.6" x2="781.7" y2="306.6" stroke="#e8eaee" stroke-width="1.3"/>

<rect x="789.5" y="330" width="3" height="772" fill="#c3c9d1"/>
<rect x="544" y="367.7" width="242" height="2" fill="#7b838c"/><rect x="544" y="369.7" width="242" height="1.6" fill="#e6eaef"/><text transform="translate(557.15,357.70) scale(1.0272,1)" class="lbl" xml:space="preserve">Diffuse color</text><rect x="544" y="402.5" width="242" height="2" fill="#7b838c"/><rect x="544" y="404.5" width="242" height="1.6" fill="#e6eaef"/><text transform="translate(557.15,392.51) scale(1.0241,1)" class="lbl" xml:space="preserve">Refl. color</text><rect x="544" y="437.3" width="242" height="2" fill="#7b838c"/><rect x="544" y="439.3" width="242" height="1.6" fill="#e6eaef"/><text transform="translate(557.16,427.32) scale(1.0178,1)" class="lbl" xml:space="preserve">Refl. gloss.</text><rect x="544" y="472.1" width="242" height="2" fill="#7b838c"/><rect x="544" y="474.1" width="242" height="1.6" fill="#e6eaef"/><text transform="translate(558.30,462.13) scale(0.9822,1)" class="lbl" xml:space="preserve">Anisotropy</text><rect x="544" y="506.9" width="242" height="2" fill="#7b838c"/><rect x="544" y="508.9" width="242" height="1.6" fill="#e6eaef"/><text transform="translate(558.30,496.94) scale(0.9810,1)" class="lbl" xml:space="preserve">Aniso rot.</text><rect x="544" y="541.8" width="242" height="2" fill="#7b838c"/><rect x="544" y="543.8" width="242" height="1.6" fill="#e6eaef"/><text transform="translate(556.25,531.75) scale(1.0273,1)" class="lbl" xml:space="preserve">Fresnel IOR</text><rect x="544" y="576.6" width="242" height="2" fill="#7b838c"/><rect x="544" y="578.6" width="242" height="1.6" fill="#e6eaef"/><text transform="translate(557.12,566.56) scale(1.0417,1)" class="lbl" xml:space="preserve">Refr. color</text><rect x="544" y="611.4" width="242" height="2" fill="#7b838c"/><rect x="544" y="613.4" width="242" height="1.6" fill="#e6eaef"/><text transform="translate(557.13,601.37) scale(1.0341,1)" class="lbl" xml:space="preserve">Refr. gloss.</text><rect x="544" y="646.2" width="242" height="2" fill="#7b838c"/><rect x="544" y="648.2" width="242" height="1.6" fill="#e6eaef"/><text transform="translate(556.20,636.18) scale(1.0484,1)" class="lbl" xml:space="preserve">IOR</text><rect x="544" y="681.0" width="242" height="2" fill="#7b838c"/><rect x="544" y="683.0" width="242" height="1.6" fill="#e6eaef"/><text transform="translate(560.00,670.99) scale(0.9692,1)" class="lbl" xml:space="preserve">Transl. color</text><rect x="544" y="715.8" width="242" height="2" fill="#7b838c"/><rect x="544" y="717.8" width="242" height="1.6" fill="#e6eaef"/><text transform="translate(560.00,705.80) scale(0.9776,1)" class="lbl" xml:space="preserve">Transl. frac.</text><rect x="544" y="750.6" width="242" height="2" fill="#7b838c"/><rect x="544" y="752.6" width="242" height="1.6" fill="#e6eaef"/><text transform="translate(558.22,740.61) scale(0.9773,1)" class="lbl" xml:space="preserve">Opacity color</text><rect x="544" y="785.4" width="242" height="2" fill="#7b838c"/><rect x="544" y="787.4" width="242" height="1.6" fill="#e6eaef"/><text transform="translate(558.21,775.42) scale(0.9877,1)" class="lbl" xml:space="preserve">Self-illum.</text><rect x="544" y="820.2" width="242" height="2" fill="#7b838c"/><rect x="544" y="822.2" width="242" height="1.6" fill="#e6eaef"/><text transform="translate(557.25,810.23) scale(0.9745,1)" class="lbl" xml:space="preserve">Bump</text><rect x="544" y="855.0" width="242" height="2" fill="#7b838c"/><rect x="544" y="857.0" width="242" height="1.6" fill="#e6eaef"/><text transform="translate(557.25,845.04) scale(0.9735,1)" class="lbl" xml:space="preserve">Displacement</text><rect x="544" y="889.9" width="242" height="2" fill="#7b838c"/><rect x="544" y="891.9" width="242" height="1.6" fill="#e6eaef"/><text transform="translate(557.34,879.85) scale(0.9594,1)" class="lbl" xml:space="preserve">SSS amount</text><rect x="544" y="924.7" width="242" height="2" fill="#7b838c"/><rect x="544" y="926.7" width="242" height="1.6" fill="#e6eaef"/><text transform="translate(557.32,914.66) scale(0.9774,1)" class="lbl" xml:space="preserve">SSS radius</text><rect x="544" y="959.5" width="242" height="2" fill="#7b838c"/><rect x="544" y="961.5" width="242" height="1.6" fill="#e6eaef"/><text transform="translate(557.32,949.47) scale(0.9760,1)" class="lbl" xml:space="preserve">SSS scatter color</text><rect x="544" y="994.3" width="242" height="2" fill="#7b838c"/><rect x="544" y="996.3" width="242" height="1.6" fill="#e6eaef"/><text transform="translate(557.11,984.28) scale(1.0440,1)" class="lbl" xml:space="preserve">Refl. env.</text><rect x="544" y="1029.1" width="242" height="2" fill="#7b838c"/><rect x="544" y="1031.1" width="242" height="1.6" fill="#e6eaef"/><text transform="translate(557.05,1019.09) scale(1.0737,1)" class="lbl" xml:space="preserve">Refr. env.</text><rect x="544" y="1063.9" width="242" height="2" fill="#7b838c"/><rect x="544" y="1065.9" width="242" height="1.6" fill="#e6eaef"/><text transform="translate(558.30,1053.90) scale(0.9902,1)" class="lbl" xml:space="preserve">Absorb. color</text><text transform="translate(559.20,1088.71) scale(0.9785,1)" class="lbl" xml:space="preserve">Volume scatter color</text>

<rect x="537" y="1101.2" width="256" height="2" fill="#7b838c"/>
<rect x="537" y="1103.2" width="256" height="1.6" fill="#e6eaef"/>
<rect x="537" y="1104.8" width="256" height="19.2" fill="url(#mrg)"/>
<rect x="537" y="1123.8" width="256" height="1.5" fill="#eef1f4"/>
<text transform="translate(584.75,1121.70) scale(1.0472,1)" class="mr" xml:space="preserve">mr Connection</text>
<path d="M773.8,1109.6 h2.6 v4.2 h4.2 v2.6 h-4.2 v4.2 h-2.6 v-4.2 h-4.2 v-2.6 h4.2 z" fill="#8a9199"/>
<path d="M543,1132 H788 L777,1143 H544 Q541,1143 541,1140 V1135 Q541,1132 543,1132 Z" fill="url(#inset)"/>
<line x1="767" y1="1141" x2="773" y2="1133.5" stroke="#5e666e" stroke-width="1.3" opacity="0.45"/>
<line x1="771.5" y1="1141" x2="777.5" y2="1133.5" stroke="#5e666e" stroke-width="1.3" opacity="0.65"/>
<line x1="776" y1="1141" x2="782" y2="1133.5" stroke="#5e666e" stroke-width="1.3" opacity="0.85"/>
<line x1="780.5" y1="1141" x2="786.5" y2="1133.5" stroke="#5e666e" stroke-width="1.3" opacity="0.95"/>

<path d="M793,291 H802 Q810,291 810,299 V857 Q810,865 802,865 H793 Z" fill="#23282d"/>
<path d="M793,293 H802 Q808.5,293 808.5,299.5 V856.5 Q808.5,863 802,863 H793 Z" fill="url(#bbar)"/>
<circle cx="810.7" cy="577.3" r="11.2" fill="#b4bcc6" stroke="#5c6670" stroke-width="1.6"/>
<circle cx="536.7" cy="351.9" r="11.6" fill="#c8f500" stroke="#4e6a10" stroke-width="1.6"/><circle cx="536.7" cy="386.7" r="11.7" fill="url(#portg)" stroke="#596068" stroke-width="1.5"/><circle cx="536.7" cy="421.5" r="11.6" fill="#c8f500" stroke="#4e6a10" stroke-width="1.6"/><circle cx="536.7" cy="456.3" r="11.7" fill="url(#portg)" stroke="#596068" stroke-width="1.5"/><circle cx="536.7" cy="491.1" r="11.7" fill="url(#portg)" stroke="#596068" stroke-width="1.5"/><circle cx="536.7" cy="526.0" r="11.7" fill="url(#portg)" stroke="#596068" stroke-width="1.5"/><circle cx="536.7" cy="560.8" r="11.7" fill="url(#portg)" stroke="#596068" stroke-width="1.5"/><circle cx="536.7" cy="595.6" r="11.7" fill="url(#portg)" stroke="#596068" stroke-width="1.5"/><circle cx="536.7" cy="630.4" r="11.7" fill="url(#portg)" stroke="#596068" stroke-width="1.5"/><circle cx="536.7" cy="665.2" r="11.7" fill="url(#portg)" stroke="#596068" stroke-width="1.5"/><circle cx="536.7" cy="700.0" r="11.7" fill="url(#portg)" stroke="#596068" stroke-width="1.5"/><circle cx="536.7" cy="734.8" r="11.7" fill="url(#portg)" stroke="#596068" stroke-width="1.5"/><circle cx="536.7" cy="769.6" r="11.7" fill="url(#portg)" stroke="#596068" stroke-width="1.5"/><circle cx="536.7" cy="804.4" r="11.7" fill="url(#portg)" stroke="#596068" stroke-width="1.5"/><circle cx="536.7" cy="839.2" r="11.7" fill="url(#portg)" stroke="#596068" stroke-width="1.5"/><circle cx="536.7" cy="874.1" r="11.7" fill="url(#portg)" stroke="#596068" stroke-width="1.5"/><circle cx="536.7" cy="908.9" r="11.7" fill="url(#portg)" stroke="#596068" stroke-width="1.5"/><circle cx="536.7" cy="943.7" r="11.7" fill="url(#portg)" stroke="#596068" stroke-width="1.5"/><circle cx="536.7" cy="978.5" r="11.7" fill="url(#portg)" stroke="#596068" stroke-width="1.5"/><circle cx="536.7" cy="1013.3" r="11.7" fill="url(#portg)" stroke="#596068" stroke-width="1.5"/><circle cx="536.7" cy="1048.1" r="11.7" fill="url(#portg)" stroke="#596068" stroke-width="1.5"/><circle cx="536.7" cy="1082.9" r="11.7" fill="url(#portg)" stroke="#596068" stroke-width="1.5"/>
</svg>
</body></html>
